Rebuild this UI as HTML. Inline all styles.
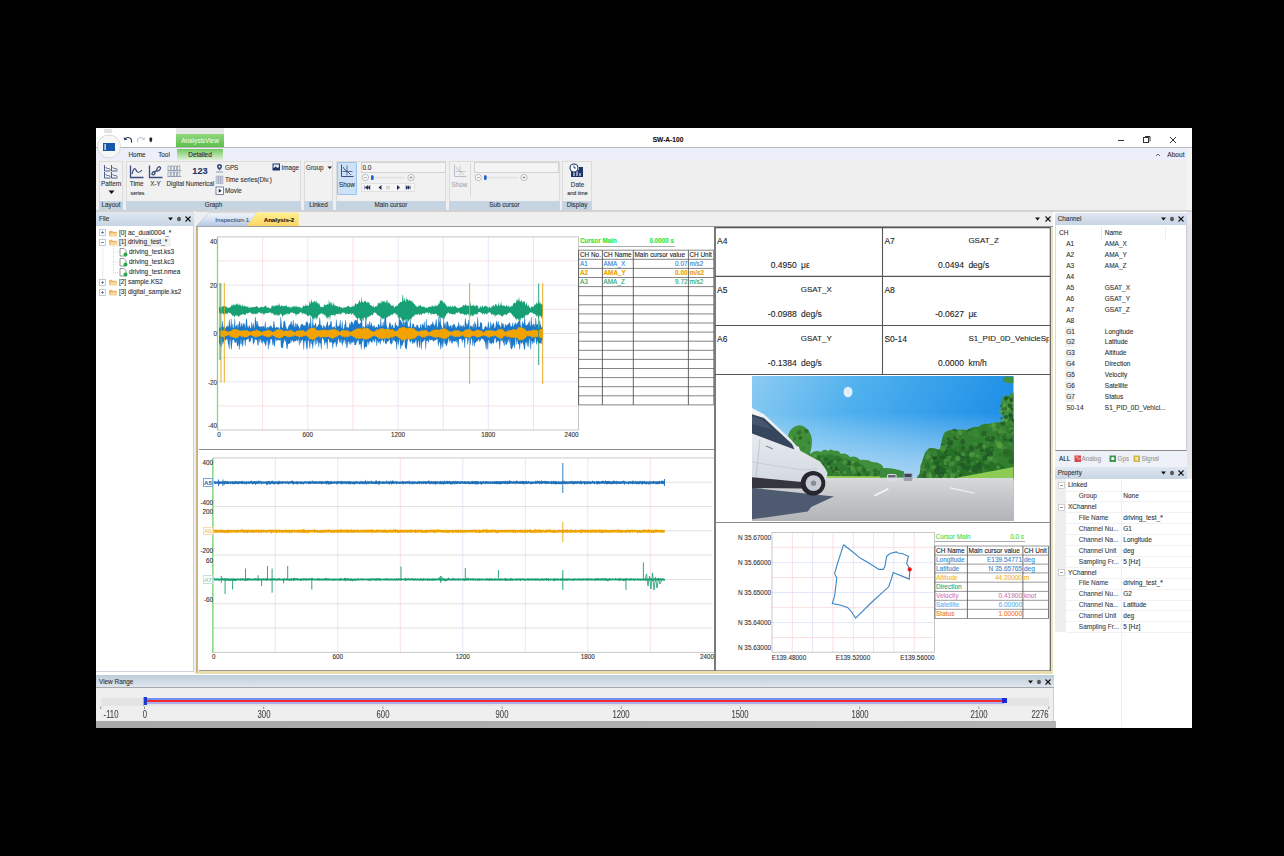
<!DOCTYPE html><html><head><meta charset="utf-8"><style>
html,body{margin:0;padding:0;background:#000;width:1284px;height:856px;overflow:hidden;position:relative}
body>div,body>svg{position:absolute}
.t{position:absolute;white-space:nowrap;line-height:10px;height:10px;font-family:"Liberation Sans",sans-serif;-webkit-text-stroke:0.1px currentColor}
svg{overflow:visible}
</style></head><body>
<div style="left:96px;top:128px;width:1096px;height:600px;background:#fff"></div>
<div class="t" style="left:568px;width:200px;text-align:center;top:135.00px;font-size:6.6px;color:#111;font-weight:bold;">SW-A-100</div>
<svg style="left:1100px;top:132px" width="90" height="16"><path d="M18 8.5h6" stroke="#333" stroke-width="1"/><rect x="43.5" y="5.5" width="5" height="5" fill="none" stroke="#333" stroke-width="1"/><path d="M45 4.5h5v5" fill="none" stroke="#333"/><path d="M70 5l6 6M76 5l-6 6" stroke="#333" stroke-width="1"/></svg>
<div style="left:176px;top:128px;width:48px;height:6px;background:#e6e6e6"></div>
<div style="left:176px;top:134px;width:48px;height:13px;background:linear-gradient(#8fd77e,#5cbf4a)"></div>
<div class="t" style="left:100px;width:200px;text-align:center;top:135.50px;font-size:6.4px;color:#e8f8e0;font-weight:normal;">AnalysisView</div>
<svg style="left:122px;top:135px" width="40" height="10"><path d="M9.5 7.5 q0.5-5-3.5-5 q-2 0-3 1.5" fill="none" stroke="#1a2a50" stroke-width="1.2"/><path d="M1.6 2.2 l0.9 3 3-0.8z" fill="#1a2a50"/><path d="M15.5 7.5 q-0.5-5 3.5-5 q2 0 3 1.5" fill="none" stroke="#c0c6d4" stroke-width="1.1"/><path d="M23.4 2.2 l-0.9 3-3-0.8z" fill="#c0c6d4"/><rect x="27.5" y="2.5" width="2.6" height="4" rx="0.8" fill="#222"/><rect x="28" y="6" width="1.6" height="1.2" fill="#555"/></svg>
<div style="left:96px;top:147px;width:1096px;height:1px;background:#b8b8b8"></div>
<div style="left:96px;top:148px;width:1091px;height:12px;background:#eceef9"></div>
<div style="left:177px;top:149px;width:46px;height:11px;background:linear-gradient(#72c85e,#dff0d6)"></div>
<div class="t" style="left:37px;width:200px;text-align:center;top:150.00px;font-size:6.4px;color:#333;font-weight:normal;">Home</div>
<div class="t" style="left:64px;width:200px;text-align:center;top:150.00px;font-size:6.4px;color:#333;font-weight:normal;">Tool</div>
<div class="t" style="left:100px;width:200px;text-align:center;top:150.00px;font-size:6.4px;color:#223;font-weight:normal;">Detailed</div>
<div class="t" style="right:99.5px;top:150.00px;font-size:6.6px;color:#333;font-weight:normal;">About</div>
<svg style="left:1155px;top:152px" width="6" height="6"><path d="M1 4l2-2 2 2" fill="none" stroke="#444" stroke-width="0.8"/></svg>
<div style="left:104px;top:128.5px;width:7.7px;height:4.7px;background:#e3e3e3"></div>
<svg style="left:96px;top:133px" width="28" height="28"><circle cx="13" cy="13.5" r="11.5" fill="#f7f7f7" stroke="#d8d8d8" stroke-width="1"/><rect x="7" y="10" width="12" height="8" fill="#1a56a8"/><rect x="8.5" y="11" width="1.2" height="6" fill="#fff"/></svg>
<div style="left:96px;top:160px;width:1091px;height:51px;background:#efefef;border-bottom:1px solid #c9c9c9;box-sizing:border-box"></div>
<div style="left:1187px;top:148px;width:5px;height:580px;background:#f4f4f4"></div>
<div style="left:96px;top:210px;width:1096px;height:2.2px;background:#d2d2d2"></div>
<div style="left:99px;top:161px;width:24px;height:48px;background:#f1f1f1;border:1px solid #dcdcdc;box-sizing:border-box"></div>
<div style="left:99px;top:200.8px;width:24px;height:8.8px;background:#c6d4e2"></div>
<div class="t" style="left:11.0px;width:200px;text-align:center;top:200.40px;font-size:6.3px;color:#333;font-weight:normal;">Layout</div>
<div style="left:126px;top:161px;width:175px;height:48px;background:#f1f1f1;border:1px solid #dcdcdc;box-sizing:border-box"></div>
<div style="left:126px;top:200.8px;width:175px;height:8.8px;background:#c6d4e2"></div>
<div class="t" style="left:113.5px;width:200px;text-align:center;top:200.40px;font-size:6.3px;color:#333;font-weight:normal;">Graph</div>
<div style="left:304px;top:161px;width:29px;height:48px;background:#f1f1f1;border:1px solid #dcdcdc;box-sizing:border-box"></div>
<div style="left:304px;top:200.8px;width:29px;height:8.8px;background:#c6d4e2"></div>
<div class="t" style="left:218.5px;width:200px;text-align:center;top:200.40px;font-size:6.3px;color:#333;font-weight:normal;">Linked</div>
<div style="left:336px;top:161px;width:110px;height:48px;background:#f1f1f1;border:1px solid #dcdcdc;box-sizing:border-box"></div>
<div style="left:336px;top:200.8px;width:110px;height:8.8px;background:#c6d4e2"></div>
<div class="t" style="left:291.0px;width:200px;text-align:center;top:200.40px;font-size:6.3px;color:#333;font-weight:normal;">Main cursor</div>
<div style="left:449px;top:161px;width:111px;height:48px;background:#f1f1f1;border:1px solid #dcdcdc;box-sizing:border-box"></div>
<div style="left:449px;top:200.8px;width:111px;height:8.8px;background:#c6d4e2"></div>
<div class="t" style="left:404.5px;width:200px;text-align:center;top:200.40px;font-size:6.3px;color:#333;font-weight:normal;">Sub cursor</div>
<div style="left:562px;top:161px;width:30px;height:48px;background:#f1f1f1;border:1px solid #dcdcdc;box-sizing:border-box"></div>
<div style="left:562px;top:200.8px;width:30px;height:8.8px;background:#c6d4e2"></div>
<div class="t" style="left:477.0px;width:200px;text-align:center;top:200.40px;font-size:6.3px;color:#333;font-weight:normal;">Display</div>
<svg style="left:103px;top:164px" width="16" height="15"><path d="M1.5 1v6h6M2.5 3l2 2 1-1 2 2" fill="none" stroke="#3b4e80" stroke-width="0.9"/><path d="M1.5 8v6h6M2.5 10l2 2 1-1 2 2" fill="none" stroke="#3b4e80" stroke-width="0.9"/><path d="M8.5 1v6h6M9.5 3l2 2 1-1 2 2" fill="none" stroke="#3b4e80" stroke-width="0.9"/><path d="M8.5 8v6h6M9.5 10l2 2 1-1 2 2" fill="none" stroke="#3b4e80" stroke-width="0.9"/></svg>
<div class="t" style="left:11.200000000000003px;width:200px;text-align:center;top:179.40px;font-size:6.3px;color:#333;font-weight:normal;">Pattern</div>
<svg style="left:108px;top:190px" width="8" height="5"><path d="M0.5 0.5h6l-3 3.5z" fill="#111"/></svg>
<svg style="left:129px;top:165px" width="16" height="14"><path d="M1.5 0.5v12h13" fill="none" stroke="#3b4e80" stroke-width="1.3"/><path d="M3 9 q2-8 4-4 q2 5 6 0" fill="none" stroke="#3b4e80" stroke-width="1.2"/></svg>
<div class="t" style="left:36.69999999999999px;width:200px;text-align:center;top:179.40px;font-size:6.3px;color:#333;font-weight:normal;">Time</div>
<div class="t" style="left:37.5px;width:200px;text-align:center;top:187.70px;font-size:5.2px;color:#333;font-weight:normal;">series</div>
<svg style="left:148px;top:165px" width="16" height="14"><path d="M1.5 0.5v12h13" fill="none" stroke="#3b4e80" stroke-width="1.3"/><path d="M4 9.5 q0-3 3-3 q2 0 2-2.5 q1-3 3-2 q1.5 1.5-1 3.5 q-1.5 1-2.5 0.5 q-2 0-1.5 2 q-0.5 2.5-3 1.5z" fill="none" stroke="#3b4e80" stroke-width="1.3"/></svg>
<div class="t" style="left:55.5px;width:200px;text-align:center;top:179.40px;font-size:6.3px;color:#333;font-weight:normal;">X-Y</div>
<svg style="left:167px;top:165px" width="15" height="13"><rect x="1.0" y="1" width="2.2" height="4.5" fill="none" stroke="#8a96b0" stroke-width="0.7"/><rect x="1.0" y="7" width="2.2" height="4.5" fill="none" stroke="#8a96b0" stroke-width="0.7"/><rect x="4.2" y="1" width="2.2" height="4.5" fill="none" stroke="#8a96b0" stroke-width="0.7"/><rect x="4.2" y="7" width="2.2" height="4.5" fill="none" stroke="#8a96b0" stroke-width="0.7"/><rect x="7.4" y="1" width="2.2" height="4.5" fill="none" stroke="#8a96b0" stroke-width="0.7"/><rect x="7.4" y="7" width="2.2" height="4.5" fill="none" stroke="#8a96b0" stroke-width="0.7"/><rect x="10.600000000000001" y="1" width="2.2" height="4.5" fill="none" stroke="#8a96b0" stroke-width="0.7"/><rect x="10.600000000000001" y="7" width="2.2" height="4.5" fill="none" stroke="#8a96b0" stroke-width="0.7"/><path d="M0.5 5.5h14M0.5 11.5h14" stroke="#8a96b0" stroke-width="0.7"/></svg>
<div class="t" style="left:75.30000000000001px;width:200px;text-align:center;top:179.40px;font-size:6.3px;color:#333;font-weight:normal;">Digital</div>
<div class="t" style="left:100px;width:200px;text-align:center;top:166.20px;font-size:9.2px;color:#1d3468;font-weight:bold;">123</div>
<div class="t" style="left:100px;width:200px;text-align:center;top:179.40px;font-size:6.3px;color:#333;font-weight:normal;">Numerical</div>
<svg style="left:215px;top:163px" width="10" height="10"><path d="M4.5 1 a2.6 2.6 0 0 1 2.6 2.6 q0 1.5-2.6 4 q-2.6-2.5-2.6-4 a2.6 2.6 0 0 1 2.6-2.6z" fill="#3b4e80"/><circle cx="4.5" cy="3.6" r="0.9" fill="#fff"/><path d="M1 9h7" stroke="#9aa6c0" stroke-width="1.2"/></svg>
<div class="t" style="left:225px;top:163.00px;font-size:6.3px;color:#333;font-weight:normal;">GPS</div>
<svg style="left:215px;top:175px" width="10" height="10"><rect x="1" y="1" width="7" height="7.5" fill="#c8cedc" stroke="#a8b0c4" stroke-width="0.6"/><path d="M3.3 1v7.5M5.6 1v7.5" stroke="#8e98b0" stroke-width="0.6"/></svg>
<div class="t" style="left:225px;top:174.50px;font-size:6.3px;color:#333;font-weight:normal;">Time series(Div.)</div>
<svg style="left:215px;top:186px" width="10" height="10"><rect x="1" y="1" width="7.5" height="7.5" fill="#fff" stroke="#6a7898" stroke-width="0.9"/><path d="M3.7 2.8v4l3-2z" fill="#1d2a50"/></svg>
<div class="t" style="left:225px;top:185.50px;font-size:6.3px;color:#333;font-weight:normal;">Movie</div>
<svg style="left:272px;top:163px" width="9" height="9"><rect x="0.5" y="0.5" width="7.5" height="7" fill="#1d3468"/><rect x="1.5" y="1.5" width="5.5" height="3.5" fill="#dfe6f4"/><path d="M1.5 5.5 l2-2 2 1.5 1.5-1v3h-5.5z" fill="#1d3468"/></svg>
<div class="t" style="left:281.5px;top:163.00px;font-size:6.3px;color:#333;font-weight:normal;">Image</div>
<div class="t" style="left:306px;top:163.00px;font-size:6.3px;color:#333;font-weight:normal;">Group</div>
<svg style="left:327px;top:166px" width="6" height="4"><path d="M0.5 0.5h4.5l-2.25 2.5z" fill="#222"/></svg>
<div style="left:337px;top:162px;width:20px;height:32.5px;background:#cde2f6;border:1px solid #9cc4ea;box-sizing:border-box;border-radius:1px"></div>
<svg style="left:340px;top:164px" width="14" height="14"><path d="M1.5 0.5v12h12" fill="none" stroke="#3b4e80" stroke-width="1"/><path d="M3 3 l2 3 2 1 4 4" fill="none" stroke="#3b4e80" stroke-width="0.9"/><path d="M7 1.5v10M2.5 7.5h10" stroke="#3b4e80" stroke-width="0.8"/></svg>
<div class="t" style="left:247px;width:200px;text-align:center;top:179.50px;font-size:6.3px;color:#333;font-weight:normal;">Show</div>
<div style="left:360.5px;top:162px;width:85px;height:10.5px;background:#f4f4f4;border:1px solid #d2d2d2;box-sizing:border-box"></div>
<div class="t" style="left:362.5px;top:162.50px;font-size:6.4px;color:#333;font-weight:normal;">0.0</div>
<svg style="left:360.5px;top:173px" width="60" height="9"><circle cx="4.3" cy="4.5" r="3.2" fill="#f8f8f8" stroke="#999" stroke-width="0.6"/><path d="M2.8 4.5h3" stroke="#777" stroke-width="0.6"/><rect x="10" y="3.8" width="33" height="1.6" fill="#e2e2e2"/><rect x="10" y="2.3" width="2.6" height="4.6" rx="1" fill="#1f5fd6"/><circle cx="50" cy="4.5" r="3.2" fill="#f8f8f8" stroke="#999" stroke-width="0.6"/><path d="M48.5 4.5h3M50 3v3" stroke="#777" stroke-width="0.6"/></svg>
<svg style="left:360.5px;top:183px" width="54" height="9"><rect x="0.5" y="0.5" width="53" height="8" fill="#f6f6f6" stroke="#ddd" stroke-width="0.8"/><path d="M3.5 2.5v4M7 2.5l-3 2 3 2zM9 2.5l-2 2 2 2z" fill="#1d2a50" stroke="#1d2a50" stroke-width="0.4"/><path d="M17.5 4.5l3-2.6v5.2z" fill="#1d2a50"/><path d="M26 2.8v3.6M28 2.8v3.6" stroke="#aaa" stroke-width="0.8"/><path d="M36 1.9l3 2.6-3 2.6z" fill="#1d2a50"/><path d="M45 2.5l2 2-2 2zM47 2.5l2 2-2 2zM49.5 2.5v4" fill="#1d2a50" stroke="#1d2a50" stroke-width="0.4"/></svg>
<svg style="left:453px;top:164px" width="14" height="14"><path d="M1.5 0.5v12h12" fill="none" stroke="#b8bfcc" stroke-width="1"/><path d="M3 3 l2 3 2 1 4 4" fill="none" stroke="#b8bfcc" stroke-width="0.9"/><path d="M7 1.5v10M2.5 7.5h10" stroke="#b8bfcc" stroke-width="0.8"/></svg>
<div class="t" style="left:359.5px;width:200px;text-align:center;top:179.50px;font-size:6.3px;color:#aaa;font-weight:normal;">Show</div>
<div style="left:470px;top:163px;width:1px;height:34px;background:#dadada"></div>
<div style="left:473.5px;top:162px;width:85px;height:10.5px;background:#f4f4f4;border:1px solid #d2d2d2;box-sizing:border-box"></div>
<svg style="left:473.5px;top:173px" width="60" height="9"><circle cx="4.3" cy="4.5" r="3.2" fill="#f8f8f8" stroke="#999" stroke-width="0.6"/><path d="M2.8 4.5h3" stroke="#777" stroke-width="0.6"/><rect x="10" y="3.8" width="33" height="1.6" fill="#e2e2e2"/><rect x="10" y="2.3" width="2.6" height="4.6" rx="1" fill="#1f5fd6"/><circle cx="50" cy="4.5" r="3.2" fill="#f8f8f8" stroke="#999" stroke-width="0.6"/><path d="M48.5 4.5h3M50 3v3" stroke="#777" stroke-width="0.6"/></svg>
<svg style="left:569px;top:163px" width="16" height="15"><rect x="2" y="7" width="12" height="7" fill="#1d3468"/><path d="M5 9v4M8 8v5M11 10v3" stroke="#dfe6f4" stroke-width="1.2"/><circle cx="5" cy="5" r="4" fill="#fff" stroke="#1d3468" stroke-width="1.1"/><path d="M5 2.5v2.5h2" fill="none" stroke="#1d3468" stroke-width="0.9"/><rect x="10" y="4" width="4" height="3" fill="#1d3468"/></svg>
<div class="t" style="left:477.5px;width:200px;text-align:center;top:179.50px;font-size:6.3px;color:#333;font-weight:normal;">Date</div>
<div class="t" style="left:477.5px;width:200px;text-align:center;top:187.50px;font-size:5.4px;color:#333;font-weight:normal;">and time</div>
<div style="left:96px;top:212.3px;width:97.5px;height:13.5px;background:linear-gradient(#dfe7f1,#c7d5e4);"></div>
<div class="t" style="left:99px;top:214.05px;font-size:6.4px;color:#333;font-weight:normal;">File</div>
<svg style="left:166.5px;top:215.05px" width="26" height="8"><path d="M1 2.5h5l-2.5 3z" fill="#111"/><ellipse cx="12" cy="4" rx="1.8" ry="2.3" fill="#333"/><path d="M12 2.2v3.6" stroke="#bbb" stroke-width="0.6"/><path d="M18.5 1.5l5 5M23.5 1.5l-5 5" stroke="#111" stroke-width="1.1"/></svg>
<div style="left:96px;top:225.8px;width:97.5px;height:446.7px;background:#fff;border-right:1px solid #cfd2da;border-bottom:1px solid #cfd2da;box-sizing:border-box"></div>
<div style="left:193.5px;top:211px;width:2.6px;height:462px;background:#eceef2"></div>
<svg style="left:96px;top:226px" width="60" height="80"><path d="M6.8 10v56M17.5 20v26.5h5M17.5 26h5M17.5 36h5" fill="none" stroke="#bdbdbd" stroke-width="0.6" stroke-dasharray="1 1"/></svg>
<div style="left:117px;top:237.5px;width:54px;height:9px;background:#f1f1f1"></div>
<svg style="left:99.3px;top:229.1px" width="7" height="7"><rect x="0.5" y="0.5" width="6" height="6" fill="#fff" stroke="#a9b4c6" stroke-width="0.7"/><path d="M2 3.5h3M3.5 2v3" stroke="#4a5a7a" stroke-width="0.7"/></svg>
<svg style="left:108.5px;top:228.6px" width="9" height="8"><path d="M0.5 2.2v4.8h7v-3.8h-3.6l-1-1z" fill="#eeb860" stroke="#d99a3a" stroke-width="0.5"/><path d="M0.5 7l1.2-2.8h6.6l-0.9 2.8z" fill="#f8d9a0"/></svg>
<div class="t" style="left:118.9px;top:227.60px;font-size:6.5px;color:#333;font-weight:normal;">[0] ac_dual0004_*</div>
<svg style="left:99.3px;top:238.5px" width="7" height="7"><rect x="0.5" y="0.5" width="6" height="6" fill="#fff" stroke="#a9b4c6" stroke-width="0.7"/><path d="M2 3.5h3" stroke="#4a5a7a" stroke-width="0.7"/></svg>
<svg style="left:108.5px;top:238px" width="9" height="8"><path d="M0.5 2.2v4.8h7v-3.8h-3.6l-1-1z" fill="#eeb860" stroke="#d99a3a" stroke-width="0.5"/><path d="M0.5 7l1.2-2.8h6.6l-0.9 2.8z" fill="#f8d9a0"/></svg>
<div class="t" style="left:118.9px;top:237.00px;font-size:6.5px;color:#333;font-weight:normal;">[1] driving_test_*</div>
<svg style="left:119px;top:248px" width="9" height="9"><path d="M1 0.5h4l2 2v5.5h-6z" fill="#fff" stroke="#555" stroke-width="0.6"/><circle cx="6.5" cy="6.5" r="2" fill="#29a84a"/></svg>
<div class="t" style="left:129px;top:247.00px;font-size:6.5px;color:#333;font-weight:normal;">driving_test.ks3</div>
<svg style="left:119px;top:258.1px" width="9" height="9"><path d="M1 0.5h4l2 2v5.5h-6z" fill="#fff" stroke="#555" stroke-width="0.6"/><circle cx="6.5" cy="6.5" r="2" fill="#29a84a"/></svg>
<div class="t" style="left:129px;top:257.10px;font-size:6.5px;color:#333;font-weight:normal;">driving_test.kc3</div>
<svg style="left:119px;top:268.2px" width="9" height="9"><path d="M1 0.5h4l2 2v5.5h-6z" fill="#fff" stroke="#555" stroke-width="0.6"/><circle cx="6.5" cy="6.5" r="2" fill="#29a84a"/></svg>
<div class="t" style="left:129px;top:267.20px;font-size:6.5px;color:#333;font-weight:normal;">driving_test.nmea</div>
<svg style="left:99.3px;top:278.8px" width="7" height="7"><rect x="0.5" y="0.5" width="6" height="6" fill="#fff" stroke="#a9b4c6" stroke-width="0.7"/><path d="M2 3.5h3M3.5 2v3" stroke="#4a5a7a" stroke-width="0.7"/></svg>
<svg style="left:108.5px;top:278.3px" width="9" height="8"><path d="M0.5 2.2v4.8h7v-3.8h-3.6l-1-1z" fill="#eeb860" stroke="#d99a3a" stroke-width="0.5"/><path d="M0.5 7l1.2-2.8h6.6l-0.9 2.8z" fill="#f8d9a0"/></svg>
<div class="t" style="left:118.9px;top:277.30px;font-size:6.5px;color:#333;font-weight:normal;">[2] sample.KS2</div>
<svg style="left:99.3px;top:288.6px" width="7" height="7"><rect x="0.5" y="0.5" width="6" height="6" fill="#fff" stroke="#a9b4c6" stroke-width="0.7"/><path d="M2 3.5h3M3.5 2v3" stroke="#4a5a7a" stroke-width="0.7"/></svg>
<svg style="left:108.5px;top:288.1px" width="9" height="8"><path d="M0.5 2.2v4.8h7v-3.8h-3.6l-1-1z" fill="#eeb860" stroke="#d99a3a" stroke-width="0.5"/><path d="M0.5 7l1.2-2.8h6.6l-0.9 2.8z" fill="#f8d9a0"/></svg>
<div class="t" style="left:118.9px;top:287.10px;font-size:6.5px;color:#333;font-weight:normal;">[3] digital_sample.ks2</div>
<div style="left:196px;top:212px;width:857px;height:15px;background:#efefef"></div>
<div style="left:196px;top:226px;width:857px;height:1.5px;background:#9a9a9a"></div>
<svg style="left:196px;top:212px" width="104" height="15"><defs><linearGradient id="gi" x1="0" y1="0" x2="0" y2="1"><stop offset="0" stop-color="#f4f8fd"/><stop offset="1" stop-color="#b6c8e6"/></linearGradient><linearGradient id="ga" x1="0" y1="0" x2="0" y2="1"><stop offset="0" stop-color="#fff08a"/><stop offset="1" stop-color="#fbd56a"/></linearGradient></defs><path d="M0.5 14 L12.5 0.8 H61 L50.7 14z" fill="url(#gi)" stroke="#b8c2d0" stroke-width="0.6"/><path d="M50.7 14 L60.8 0.8 H102.8 V14z" fill="url(#ga)"/></svg>
<div class="t" style="left:132.2px;width:200px;text-align:center;top:214.50px;font-size:6.24px;color:#44506a;font-weight:normal;">Inspection-1</div>
<div class="t" style="left:179px;width:200px;text-align:center;top:214.50px;font-size:6.1px;color:#111;font-weight:bold;">Analysis-2</div>
<svg style="left:1034px;top:215px" width="20" height="8"><path d="M1 2.5h5l-2.5 3z" fill="#111"/><path d="M11.5 1.5l5 5M16.5 1.5l-5 5" stroke="#111" stroke-width="1.1"/></svg>
<div style="left:196px;top:227px;width:857px;height:446.5px;background:#fff;border-left:2.5px solid #c9b47e;border-right:2.6px solid #ebe4b4;border-bottom:3px solid #e9dfac;box-sizing:border-box"></div>
<div style="left:198.5px;top:670px;width:852px;height:0.8px;background:#9a9a9a"></div>
<svg style="left:0px;top:0px" width="1284" height="856"><path d="M262.6 236.9V430" stroke="#f8d4d4" stroke-width="0.7"/><path d="M307.8 236.9V430" stroke="#d9dcf7" stroke-width="0.7"/><path d="M352.9 236.9V430" stroke="#f8d4d4" stroke-width="0.7"/><path d="M398.1 236.9V430" stroke="#d9dcf7" stroke-width="0.7"/><path d="M443.2 236.9V430" stroke="#f8d4d4" stroke-width="0.7"/><path d="M488.3 236.9V430" stroke="#d9dcf7" stroke-width="0.7"/><path d="M533.5 236.9V430" stroke="#f8d4d4" stroke-width="0.7"/><path d="M217.5 261.0H578.6" stroke="#f8d4d4" stroke-width="0.7"/><path d="M217.5 285.2H578.6" stroke="#d9dcf7" stroke-width="0.7"/><path d="M217.5 309.3H578.6" stroke="#f8d4d4" stroke-width="0.7"/><path d="M217.5 333.4H578.6" stroke="#d4d4d4" stroke-width="0.7"/><path d="M217.5 357.6H578.6" stroke="#f8d4d4" stroke-width="0.7"/><path d="M217.5 381.7H578.6" stroke="#d9dcf7" stroke-width="0.7"/><path d="M217.5 405.9H578.6" stroke="#f8d4d4" stroke-width="0.7"/><rect x="217.5" y="236.9" width="361.1" height="193.1" fill="none" stroke="#b8b8b8" stroke-width="0.8"/><path d="M219.0,307.7 219.5,306.7 220.0,307.8 220.5,307.4 221.0,306.3 221.5,307.5 222.0,306.8 222.5,306.4 223.0,306.4 223.5,305.3 224.0,307.1 224.5,305.9 225.0,306.4 225.5,305.7 226.0,307.6 226.5,305.8 227.0,308.2 227.5,307.0 228.0,308.0 228.5,308.1 229.0,307.5 229.5,307.3 230.0,307.7 230.5,306.6 231.0,306.6 231.5,305.7 232.0,304.1 232.5,305.9 233.0,304.5 233.5,305.6 234.0,303.4 234.5,305.5 235.0,305.4 235.5,304.8 236.0,303.4 236.5,304.7 237.0,303.5 237.5,303.3 238.0,305.9 238.5,304.6 239.0,304.5 239.5,305.3 240.0,303.0 240.5,306.1 241.0,304.7 241.5,306.6 242.0,306.6 242.5,303.8 243.0,306.5 243.5,306.6 244.0,305.7 244.5,305.6 245.0,306.3 245.5,306.0 246.0,307.2 246.5,306.7 247.0,306.2 247.5,307.6 248.0,305.4 248.5,308.0 249.0,307.8 249.5,307.5 250.0,307.6 250.5,308.0 251.0,306.2 251.5,307.3 252.0,307.4 252.5,307.5 253.0,306.7 253.5,306.9 254.0,307.2 254.5,307.1 255.0,307.3 255.5,306.4 256.0,306.5 256.5,306.1 257.0,306.4 257.5,306.5 258.0,307.1 258.5,308.2 259.0,307.7 259.5,307.4 260.0,308.1 260.5,307.0 261.0,306.5 261.5,307.2 262.0,306.2 262.5,307.2 263.0,307.5 263.5,306.9 264.0,307.3 264.5,305.7 265.0,306.7 265.5,305.8 266.0,305.1 266.5,307.4 267.0,307.3 267.5,307.6 268.0,307.5 268.5,307.7 269.0,307.6 269.5,308.1 270.0,308.8 270.5,308.2 271.0,308.3 271.5,305.6 272.0,307.2 272.5,305.5 273.0,305.1 273.5,306.8 274.0,305.7 274.5,305.6 275.0,306.7 275.5,305.6 276.0,305.5 276.5,304.7 277.0,306.2 277.5,304.4 278.0,305.7 278.5,305.6 279.0,303.1 279.5,304.4 280.0,306.4 280.5,306.6 281.0,305.2 281.5,305.0 282.0,306.7 282.5,305.9 283.0,305.7 283.5,306.5 284.0,305.5 284.5,306.2 285.0,305.5 285.5,306.2 286.0,306.3 286.5,304.5 287.0,306.4 287.5,307.2 288.0,306.6 288.5,306.5 289.0,307.5 289.5,307.1 290.0,307.5 290.5,306.6 291.0,308.9 291.5,307.0 292.0,306.0 292.5,306.9 293.0,306.7 293.5,306.1 294.0,307.7 294.5,305.2 295.0,307.0 295.5,306.8 296.0,305.3 296.5,306.4 297.0,307.1 297.5,307.1 298.0,307.1 298.5,306.5 299.0,307.6 299.5,306.7 300.0,307.5 300.5,307.4 301.0,307.4 301.5,308.8 302.0,307.7 302.5,307.5 303.0,305.9 303.5,305.3 304.0,306.4 304.5,306.1 305.0,306.0 305.5,305.2 306.0,303.5 306.5,305.9 307.0,306.0 307.5,305.3 308.0,305.9 308.5,305.5 309.0,305.6 309.5,301.8 310.0,300.7 310.5,303.9 311.0,302.8 311.5,298.4 312.0,301.8 312.5,302.3 313.0,303.3 313.5,301.8 314.0,300.2 314.5,301.9 315.0,300.8 315.5,302.0 316.0,302.9 316.5,299.6 317.0,304.2 317.5,302.0 318.0,303.2 318.5,303.0 319.0,305.2 319.5,303.1 320.0,306.1 320.5,307.4 321.0,306.0 321.5,306.7 322.0,307.6 322.5,307.1 323.0,306.9 323.5,307.3 324.0,304.6 324.5,304.2 325.0,305.2 325.5,305.6 326.0,303.9 326.5,305.3 327.0,305.1 327.5,303.3 328.0,304.8 328.5,304.5 329.0,298.8 329.5,304.3 330.0,302.1 330.5,302.2 331.0,304.9 331.5,303.3 332.0,301.8 332.5,306.4 333.0,304.9 333.5,302.1 334.0,304.5 334.5,304.8 335.0,306.2 335.5,305.0 336.0,306.3 336.5,306.1 337.0,306.0 337.5,306.4 338.0,306.8 338.5,306.4 339.0,307.3 339.5,305.8 340.0,307.3 340.5,307.1 341.0,307.9 341.5,306.7 342.0,307.7 342.5,308.1 343.0,308.7 343.5,307.4 344.0,306.2 344.5,307.9 345.0,307.5 345.5,307.3 346.0,307.2 346.5,307.1 347.0,307.0 347.5,306.1 348.0,306.1 348.5,305.6 349.0,306.3 349.5,307.0 350.0,307.4 350.5,306.9 351.0,307.2 351.5,307.0 352.0,306.2 352.5,306.8 353.0,305.5 353.5,305.9 354.0,307.3 354.5,305.6 355.0,304.0 355.5,302.7 356.0,304.0 356.5,304.7 357.0,303.8 357.5,303.9 358.0,303.4 358.5,302.8 359.0,300.4 359.5,299.7 360.0,302.6 360.5,302.4 361.0,302.2 361.5,296.0 362.0,301.1 362.5,301.9 363.0,302.3 363.5,303.2 364.0,300.9 364.5,301.1 365.0,301.6 365.5,301.1 366.0,301.4 366.5,303.3 367.0,302.2 367.5,302.8 368.0,301.2 368.5,302.5 369.0,302.9 369.5,303.1 370.0,305.5 370.5,304.8 371.0,305.2 371.5,305.9 372.0,305.6 372.5,307.0 373.0,306.3 373.5,305.0 374.0,308.1 374.5,307.0 375.0,306.8 375.5,306.1 376.0,306.8 376.5,306.4 377.0,305.2 377.5,306.0 378.0,302.2 378.5,303.8 379.0,302.1 379.5,303.3 380.0,303.8 380.5,303.4 381.0,300.0 381.5,302.4 382.0,303.1 382.5,299.9 383.0,302.8 383.5,300.9 384.0,301.1 384.5,301.3 385.0,303.3 385.5,302.4 386.0,301.0 386.5,300.0 387.0,303.2 387.5,299.6 388.0,304.2 388.5,302.1 389.0,302.8 389.5,302.9 390.0,304.4 390.5,303.7 391.0,305.9 391.5,306.0 392.0,304.5 392.5,306.4 393.0,305.4 393.5,305.0 394.0,307.3 394.5,307.8 395.0,307.0 395.5,306.1 396.0,306.2 396.5,306.0 397.0,305.5 397.5,305.7 398.0,304.5 398.5,304.1 399.0,303.3 399.5,303.3 400.0,302.1 400.5,301.8 401.0,301.9 401.5,302.2 402.0,302.3 402.5,295.2 403.0,294.3 403.5,301.0 404.0,300.9 404.5,297.7 405.0,299.8 405.5,301.6 406.0,301.9 406.5,297.2 407.0,298.8 407.5,299.5 408.0,299.9 408.5,300.9 409.0,300.8 409.5,299.2 410.0,300.6 410.5,301.3 411.0,300.4 411.5,302.1 412.0,299.4 412.5,303.0 413.0,301.7 413.5,303.1 414.0,303.8 414.5,304.3 415.0,304.4 415.5,306.2 416.0,304.7 416.5,306.5 417.0,307.5 417.5,306.4 418.0,306.9 418.5,305.7 419.0,305.0 419.5,306.7 420.0,305.1 420.5,304.7 421.0,305.9 421.5,306.5 422.0,306.6 422.5,306.9 423.0,307.1 423.5,306.6 424.0,306.5 424.5,306.6 425.0,307.8 425.5,307.7 426.0,308.3 426.5,307.4 427.0,307.1 427.5,308.2 428.0,307.8 428.5,306.6 429.0,307.0 429.5,306.9 430.0,305.9 430.5,307.0 431.0,306.8 431.5,307.1 432.0,305.1 432.5,305.6 433.0,306.8 433.5,306.6 434.0,305.6 434.5,307.2 435.0,305.2 435.5,304.7 436.0,306.6 436.5,305.9 437.0,305.8 437.5,305.3 438.0,305.5 438.5,303.0 439.0,303.8 439.5,303.9 440.0,299.2 440.5,301.6 441.0,300.1 441.5,300.2 442.0,301.5 442.5,301.1 443.0,301.2 443.5,303.5 444.0,302.3 444.5,302.2 445.0,304.5 445.5,303.2 446.0,305.4 446.5,305.8 447.0,306.1 447.5,307.7 448.0,305.2 448.5,306.4 449.0,307.0 449.5,306.3 450.0,307.1 450.5,305.2 451.0,307.2 451.5,307.3 452.0,306.9 452.5,305.1 453.0,306.5 453.5,306.7 454.0,307.1 454.5,305.5 455.0,306.5 455.5,305.8 456.0,306.9 456.5,307.5 457.0,307.5 457.5,307.9 458.0,308.4 458.5,307.8 459.0,308.1 459.5,307.4 460.0,307.8 460.5,307.3 461.0,307.3 461.5,306.7 462.0,306.8 462.5,306.8 463.0,305.3 463.5,305.0 464.0,304.7 464.5,306.0 465.0,305.4 465.5,303.7 466.0,305.6 466.5,305.5 467.0,305.4 467.5,305.6 468.0,305.9 468.5,305.4 469.0,305.5 469.5,306.6 470.0,306.0 470.5,301.0 471.0,306.0 471.5,305.7 472.0,305.7 472.5,305.6 473.0,305.4 473.5,304.6 474.0,305.8 474.5,306.2 475.0,305.4 475.5,306.7 476.0,305.1 476.5,305.5 477.0,305.5 477.5,305.8 478.0,305.7 478.5,308.3 479.0,308.9 479.5,307.7 480.0,307.2 480.5,305.6 481.0,307.8 481.5,307.5 482.0,305.1 482.5,306.2 483.0,306.5 483.5,307.4 484.0,307.1 484.5,305.9 485.0,305.7 485.5,306.1 486.0,305.8 486.5,306.2 487.0,307.1 487.5,306.5 488.0,307.8 488.5,308.4 489.0,306.1 489.5,306.6 490.0,307.7 490.5,307.9 491.0,307.6 491.5,307.2 492.0,305.2 492.5,306.8 493.0,305.6 493.5,304.5 494.0,306.7 494.5,306.3 495.0,304.8 495.5,304.4 496.0,303.5 496.5,305.3 497.0,305.8 497.5,306.2 498.0,305.4 498.5,302.1 499.0,306.1 499.5,306.0 500.0,304.5 500.5,305.3 501.0,300.7 501.5,304.1 502.0,305.4 502.5,306.1 503.0,305.7 503.5,305.1 504.0,306.1 504.5,305.8 505.0,306.1 505.5,306.5 506.0,306.6 506.5,304.7 507.0,305.0 507.5,307.0 508.0,306.7 508.5,306.2 509.0,304.6 509.5,307.4 510.0,306.9 510.5,306.8 511.0,306.8 511.5,305.3 512.0,306.6 512.5,306.0 513.0,304.2 513.5,303.2 514.0,302.9 514.5,302.3 515.0,303.5 515.5,303.1 516.0,302.4 516.5,300.6 517.0,299.0 517.5,301.5 518.0,298.7 518.5,301.2 519.0,296.2 519.5,300.2 520.0,302.2 520.5,301.5 521.0,301.0 521.5,299.7 522.0,301.5 522.5,303.0 523.0,301.4 523.5,301.7 524.0,300.7 524.5,301.2 525.0,303.2 525.5,304.9 526.0,305.1 526.5,301.7 527.0,304.3 527.5,306.1 528.0,306.7 528.5,304.2 529.0,306.6 529.5,307.0 530.0,308.1 530.5,308.6 531.0,307.4 531.5,305.7 532.0,306.9 532.5,306.2 533.0,307.4 533.5,306.8 534.0,306.1 534.5,304.9 535.0,303.6 535.5,305.3 536.0,304.0 536.5,303.0 537.0,301.7 537.5,304.0 538.0,304.0 538.5,298.7 539.0,304.9 539.5,301.0 540.0,304.2 540.5,301.7 541.0,304.6 541.5,304.4 542.0,303.6 542.5,304.8 543.0,305.6 543.0,315.9 542.5,314.4 542.0,316.9 541.5,318.8 541.0,316.6 540.5,316.4 540.0,315.3 539.5,315.7 539.0,316.6 538.5,318.3 538.0,318.7 537.5,315.0 537.0,315.1 536.5,316.8 536.0,316.3 535.5,314.5 535.0,313.9 534.5,314.0 534.0,313.6 533.5,313.7 533.0,313.3 532.5,313.3 532.0,312.5 531.5,312.9 531.0,311.9 530.5,312.1 530.0,313.3 529.5,312.7 529.0,313.6 528.5,315.1 528.0,314.3 527.5,315.0 527.0,316.1 526.5,314.6 526.0,315.1 525.5,315.7 525.0,315.5 524.5,317.7 524.0,317.2 523.5,317.4 523.0,318.7 522.5,318.5 522.0,317.7 521.5,318.1 521.0,317.8 520.5,321.3 520.0,318.7 519.5,317.8 519.0,320.9 518.5,319.6 518.0,319.5 517.5,318.5 517.0,318.6 516.5,320.9 516.0,317.9 515.5,319.6 515.0,317.7 514.5,316.7 514.0,317.4 513.5,316.8 513.0,315.0 512.5,315.7 512.0,314.2 511.5,314.1 511.0,313.1 510.5,313.3 510.0,312.3 509.5,312.5 509.0,313.2 508.5,312.7 508.0,313.6 507.5,313.6 507.0,315.1 506.5,315.6 506.0,313.7 505.5,314.3 505.0,315.3 504.5,314.1 504.0,315.1 503.5,315.8 503.0,314.6 502.5,317.2 502.0,316.3 501.5,316.3 501.0,315.9 500.5,315.1 500.0,314.2 499.5,315.3 499.0,315.5 498.5,314.1 498.0,314.1 497.5,315.1 497.0,314.8 496.5,315.6 496.0,315.8 495.5,314.7 495.0,318.0 494.5,314.7 494.0,314.1 493.5,315.3 493.0,315.4 492.5,313.4 492.0,314.4 491.5,314.5 491.0,314.4 490.5,312.2 490.0,312.9 489.5,311.8 489.0,313.1 488.5,312.3 488.0,313.0 487.5,313.6 487.0,314.8 486.5,314.0 486.0,313.4 485.5,313.4 485.0,313.2 484.5,315.3 484.0,313.5 483.5,313.3 483.0,313.7 482.5,314.1 482.0,314.3 481.5,312.8 481.0,312.7 480.5,312.5 480.0,312.3 479.5,311.9 479.0,311.9 478.5,312.0 478.0,313.5 477.5,314.2 477.0,314.7 476.5,313.6 476.0,315.3 475.5,313.9 475.0,313.8 474.5,314.5 474.0,314.6 473.5,315.3 473.0,316.6 472.5,315.5 472.0,316.5 471.5,314.4 471.0,315.4 470.5,317.2 470.0,313.9 469.5,314.4 469.0,313.6 468.5,315.7 468.0,313.6 467.5,313.9 467.0,314.8 466.5,315.0 466.0,314.8 465.5,313.9 465.0,315.7 464.5,314.9 464.0,314.1 463.5,314.5 463.0,313.9 462.5,313.3 462.0,313.7 461.5,313.9 461.0,313.4 460.5,314.8 460.0,312.5 459.5,312.9 459.0,313.1 458.5,311.6 458.0,311.9 457.5,313.9 457.0,312.4 456.5,312.5 456.0,312.9 455.5,313.4 455.0,315.3 454.5,313.8 454.0,314.5 453.5,314.0 453.0,314.4 452.5,314.3 452.0,314.4 451.5,313.5 451.0,314.1 450.5,313.2 450.0,314.2 449.5,313.9 449.0,312.8 448.5,312.6 448.0,313.3 447.5,312.7 447.0,314.3 446.5,314.1 446.0,315.6 445.5,316.1 445.0,316.7 444.5,318.1 444.0,320.2 443.5,320.2 443.0,317.7 442.5,317.4 442.0,319.2 441.5,317.5 441.0,317.7 440.5,317.5 440.0,317.4 439.5,319.8 439.0,315.4 438.5,315.3 438.0,317.3 437.5,315.8 437.0,314.6 436.5,313.7 436.0,314.4 435.5,313.6 435.0,313.4 434.5,314.3 434.0,314.3 433.5,314.4 433.0,314.1 432.5,313.4 432.0,314.2 431.5,313.6 431.0,316.0 430.5,313.2 430.0,312.9 429.5,312.7 429.0,312.5 428.5,315.2 428.0,312.3 427.5,313.1 427.0,312.0 426.5,313.0 426.0,312.5 425.5,312.6 425.0,314.0 424.5,313.5 424.0,313.8 423.5,313.1 423.0,313.5 422.5,313.5 422.0,313.7 421.5,315.4 421.0,314.7 420.5,313.7 420.0,314.3 419.5,315.7 419.0,314.5 418.5,313.3 418.0,315.1 417.5,314.4 417.0,313.8 416.5,315.0 416.0,314.4 415.5,314.7 415.0,314.5 414.5,315.0 414.0,317.2 413.5,315.5 413.0,317.0 412.5,316.9 412.0,317.1 411.5,320.1 411.0,318.0 410.5,320.0 410.0,318.7 409.5,320.6 409.0,319.3 408.5,322.6 408.0,321.6 407.5,319.0 407.0,321.6 406.5,320.0 406.0,318.4 405.5,321.0 405.0,321.5 404.5,319.9 404.0,320.2 403.5,319.5 403.0,320.9 402.5,322.2 402.0,318.6 401.5,320.1 401.0,317.6 400.5,317.1 400.0,319.6 399.5,316.9 399.0,317.0 398.5,318.3 398.0,318.5 397.5,314.8 397.0,314.4 396.5,314.1 396.0,316.1 395.5,313.0 395.0,313.3 394.5,312.7 394.0,313.7 393.5,313.8 393.0,313.6 392.5,315.8 392.0,314.0 391.5,314.7 391.0,315.1 390.5,315.6 390.0,314.9 389.5,317.1 389.0,315.5 388.5,316.6 388.0,316.6 387.5,317.8 387.0,317.0 386.5,317.8 386.0,319.4 385.5,323.5 385.0,319.1 384.5,317.3 384.0,317.8 383.5,318.9 383.0,319.0 382.5,318.1 382.0,320.4 381.5,317.8 381.0,318.5 380.5,316.9 380.0,315.9 379.5,316.2 379.0,316.2 378.5,315.4 378.0,314.8 377.5,315.1 377.0,315.2 376.5,313.4 376.0,313.3 375.5,312.6 375.0,313.0 374.5,312.2 374.0,312.4 373.5,313.0 373.0,315.1 372.5,315.0 372.0,315.5 371.5,314.1 371.0,315.7 370.5,315.9 370.0,315.0 369.5,316.4 369.0,316.9 368.5,316.9 368.0,316.2 367.5,318.0 367.0,317.1 366.5,321.5 366.0,319.2 365.5,319.0 365.0,317.2 364.5,317.5 364.0,317.5 363.5,320.0 363.0,321.3 362.5,319.0 362.0,318.3 361.5,318.1 361.0,319.8 360.5,321.3 360.0,320.6 359.5,318.6 359.0,317.4 358.5,318.1 358.0,318.5 357.5,321.5 357.0,317.8 356.5,317.8 356.0,318.2 355.5,316.8 355.0,315.2 354.5,316.3 354.0,314.5 353.5,314.3 353.0,314.3 352.5,312.7 352.0,314.2 351.5,315.3 351.0,313.2 350.5,313.2 350.0,313.9 349.5,314.1 349.0,314.1 348.5,314.1 348.0,314.4 347.5,313.2 347.0,313.6 346.5,313.8 346.0,314.8 345.5,314.6 345.0,313.1 344.5,312.6 344.0,313.5 343.5,312.1 343.0,313.7 342.5,312.1 342.0,312.8 341.5,313.6 341.0,314.3 340.5,314.0 340.0,315.1 339.5,313.7 339.0,313.3 338.5,314.1 338.0,313.7 337.5,314.8 337.0,313.9 336.5,314.0 336.0,313.8 335.5,315.3 335.0,315.8 334.5,316.1 334.0,314.5 333.5,315.6 333.0,314.5 332.5,315.6 332.0,314.9 331.5,315.1 331.0,315.0 330.5,315.6 330.0,321.4 329.5,316.3 329.0,316.9 328.5,316.8 328.0,319.8 327.5,318.1 327.0,316.8 326.5,318.6 326.0,316.1 325.5,314.8 325.0,317.4 324.5,314.2 324.0,314.8 323.5,313.7 323.0,314.7 322.5,314.4 322.0,312.3 321.5,313.7 321.0,313.2 320.5,313.9 320.0,314.2 319.5,314.4 319.0,314.6 318.5,315.3 318.0,315.9 317.5,319.2 317.0,316.9 316.5,320.4 316.0,317.5 315.5,317.3 315.0,320.3 314.5,318.2 314.0,317.5 313.5,321.1 313.0,317.5 312.5,320.9 312.0,317.4 311.5,316.1 311.0,317.3 310.5,315.7 310.0,315.1 309.5,315.2 309.0,315.3 308.5,316.2 308.0,315.7 307.5,316.5 307.0,314.4 306.5,314.5 306.0,315.1 305.5,313.9 305.0,313.5 304.5,314.2 304.0,313.2 303.5,313.6 303.0,312.7 302.5,315.1 302.0,313.1 301.5,312.9 301.0,312.1 300.5,312.2 300.0,312.2 299.5,313.3 299.0,314.2 298.5,313.6 298.0,314.3 297.5,314.2 297.0,314.2 296.5,314.3 296.0,316.7 295.5,313.9 295.0,313.4 294.5,313.3 294.0,313.0 293.5,313.8 293.0,312.4 292.5,312.6 292.0,313.1 291.5,312.5 291.0,312.4 290.5,312.4 290.0,313.8 289.5,314.2 289.0,313.8 288.5,314.4 288.0,313.3 287.5,313.6 287.0,315.4 286.5,313.4 286.0,313.7 285.5,314.3 285.0,314.7 284.5,315.3 284.0,314.5 283.5,315.9 283.0,315.3 282.5,318.1 282.0,315.6 281.5,314.4 281.0,314.0 280.5,313.5 280.0,314.4 279.5,315.9 279.0,314.3 278.5,315.6 278.0,315.4 277.5,315.9 277.0,314.2 276.5,314.7 276.0,315.3 275.5,314.2 275.0,316.5 274.5,314.7 274.0,314.2 273.5,314.4 273.0,313.4 272.5,313.6 272.0,312.8 271.5,313.1 271.0,314.4 270.5,312.3 270.0,312.2 269.5,312.8 269.0,312.3 268.5,313.0 268.0,313.7 267.5,312.7 267.0,312.9 266.5,313.2 266.0,313.1 265.5,313.2 265.0,313.4 264.5,313.4 264.0,315.5 263.5,314.3 263.0,313.2 262.5,313.3 262.0,313.0 261.5,313.8 261.0,312.8 260.5,314.1 260.0,312.3 259.5,312.8 259.0,311.7 258.5,312.9 258.0,312.4 257.5,314.0 257.0,313.7 256.5,313.8 256.0,313.8 255.5,315.0 255.0,313.3 254.5,313.4 254.0,313.8 253.5,314.6 253.0,313.2 252.5,314.3 252.0,314.3 251.5,313.3 251.0,313.4 250.5,312.4 250.0,312.6 249.5,312.1 249.0,312.9 248.5,312.8 248.0,313.6 247.5,313.7 247.0,313.0 246.5,313.2 246.0,313.4 245.5,315.2 245.0,314.2 244.5,314.9 244.0,315.0 243.5,314.3 243.0,313.7 242.5,314.4 242.0,314.0 241.5,315.0 241.0,314.9 240.5,314.6 240.0,316.7 239.5,315.1 239.0,317.2 238.5,316.7 238.0,316.2 237.5,315.0 237.0,316.3 236.5,315.3 236.0,315.2 235.5,315.6 235.0,315.9 234.5,317.3 234.0,316.6 233.5,315.4 233.0,315.2 232.5,316.3 232.0,314.7 231.5,314.6 231.0,313.7 230.5,313.1 230.0,312.8 229.5,313.1 229.0,313.1 228.5,311.8 228.0,313.7 227.5,312.9 227.0,314.7 226.5,313.2 226.0,313.5 225.5,313.6 225.0,314.9 224.5,313.2 224.0,314.6 223.5,314.2 223.0,313.9 222.5,313.1 222.0,313.0 221.5,313.5 221.0,314.8 220.5,312.6 220.0,313.7 219.5,312.6 219.0,313.7z" fill="#16a073"/><path d="M219.0,326.4 219.5,327.8 220.0,327.8 220.5,327.6 221.0,327.6 221.5,327.0 222.0,320.9 222.5,320.9 223.0,326.3 223.5,327.7 224.0,325.6 224.5,325.6 225.0,327.3 225.5,328.9 226.0,326.7 226.5,326.7 227.0,325.5 227.5,325.5 228.0,326.9 228.5,326.7 229.0,319.5 229.5,319.5 230.0,324.7 230.5,328.1 231.0,318.8 231.5,318.8 232.0,328.7 232.5,323.7 233.0,323.7 233.5,328.0 234.0,327.7 234.5,318.7 235.0,318.7 235.5,327.8 236.0,325.5 236.5,325.5 237.0,324.8 237.5,324.8 238.0,328.8 238.5,323.5 239.0,323.5 239.5,320.9 240.0,320.9 240.5,326.7 241.0,326.5 241.5,322.9 242.0,322.9 242.5,327.0 243.0,323.0 243.5,323.0 244.0,326.3 244.5,323.5 245.0,323.5 245.5,329.1 246.0,318.2 246.5,318.2 247.0,320.6 247.5,326.8 248.0,326.8 248.5,328.0 249.0,325.2 249.5,325.2 250.0,326.5 250.5,328.5 251.0,327.9 251.5,322.0 252.0,322.0 252.5,328.3 253.0,323.3 253.5,323.3 254.0,326.5 254.5,328.8 255.0,317.0 255.5,317.0 256.0,321.0 256.5,321.0 257.0,325.8 257.5,321.3 258.0,321.3 258.5,326.3 259.0,326.2 259.5,326.2 260.0,327.0 260.5,327.0 261.0,326.0 261.5,326.0 262.0,327.4 262.5,326.4 263.0,325.9 263.5,325.9 264.0,327.1 264.5,327.4 265.0,321.5 265.5,321.5 266.0,328.2 266.5,328.4 267.0,326.5 267.5,326.5 268.0,328.7 268.5,327.0 269.0,326.9 269.5,326.9 270.0,325.3 270.5,325.3 271.0,325.9 271.5,325.9 272.0,327.7 272.5,327.7 273.0,327.4 273.5,320.9 274.0,320.9 274.5,323.8 275.0,328.2 275.5,328.1 276.0,327.6 276.5,326.7 277.0,326.7 277.5,327.8 278.0,327.8 278.5,327.2 279.0,327.2 279.5,329.2 280.0,328.8 280.5,317.0 281.0,317.0 281.5,322.2 282.0,327.6 282.5,327.8 283.0,327.8 283.5,321.5 284.0,321.5 284.5,320.7 285.0,320.7 285.5,324.2 286.0,326.9 286.5,327.4 287.0,329.2 287.5,329.2 288.0,328.1 288.5,325.7 289.0,325.7 289.5,324.6 290.0,324.6 290.5,323.7 291.0,320.9 291.5,320.9 292.0,325.2 292.5,325.2 293.0,320.1 293.5,320.1 294.0,327.6 294.5,326.8 295.0,322.8 295.5,322.8 296.0,327.7 296.5,324.0 297.0,323.6 297.5,323.6 298.0,325.6 298.5,326.2 299.0,326.2 299.5,328.7 300.0,328.3 300.5,325.3 301.0,325.3 301.5,323.8 302.0,323.8 302.5,324.3 303.0,324.3 303.5,325.9 304.0,325.1 304.5,325.1 305.0,326.8 305.5,324.4 306.0,322.6 306.5,321.4 307.0,321.4 307.5,322.4 308.0,322.4 308.5,327.9 309.0,322.7 309.5,322.7 310.0,325.3 310.5,317.0 311.0,317.0 311.5,327.5 312.0,327.5 312.5,319.7 313.0,319.7 313.5,325.1 314.0,326.1 314.5,325.0 315.0,324.5 315.5,322.9 316.0,322.9 316.5,327.6 317.0,326.8 317.5,326.8 318.0,324.8 318.5,324.8 319.0,324.8 319.5,317.6 320.0,317.6 320.5,324.0 321.0,326.3 321.5,325.0 322.0,325.0 322.5,328.4 323.0,327.8 323.5,324.8 324.0,324.8 324.5,326.7 325.0,326.9 325.5,327.9 326.0,325.3 326.5,325.3 327.0,321.5 327.5,321.5 328.0,323.4 328.5,327.8 329.0,324.9 329.5,324.9 330.0,325.0 330.5,321.2 331.0,321.2 331.5,321.2 332.0,328.2 332.5,326.8 333.0,326.8 333.5,327.5 334.0,326.1 334.5,326.1 335.0,328.2 335.5,327.9 336.0,319.4 336.5,319.4 337.0,324.4 337.5,326.4 338.0,326.4 338.5,326.4 339.0,325.3 339.5,325.3 340.0,320.0 340.5,320.0 341.0,328.5 341.5,327.1 342.0,321.2 342.5,321.2 343.0,328.4 343.5,328.4 344.0,329.1 344.5,324.3 345.0,324.3 345.5,320.0 346.0,320.0 346.5,327.7 347.0,326.8 347.5,326.8 348.0,328.3 348.5,327.3 349.0,327.3 349.5,322.7 350.0,322.7 350.5,325.5 351.0,321.5 351.5,321.5 352.0,322.1 352.5,322.1 353.0,324.0 353.5,324.6 354.0,321.6 354.5,321.6 355.0,319.7 355.5,319.7 356.0,320.5 356.5,320.5 357.0,319.6 357.5,319.6 358.0,323.2 358.5,323.2 359.0,324.1 359.5,324.1 360.0,323.3 360.5,323.3 361.0,320.9 361.5,317.0 362.0,317.0 362.5,328.2 363.0,326.0 363.5,326.0 364.0,328.6 364.5,326.8 365.0,326.8 365.5,317.0 366.0,317.0 366.5,325.2 367.0,327.2 367.5,324.0 368.0,323.8 368.5,323.8 369.0,326.8 369.5,321.1 370.0,321.1 370.5,327.1 371.0,322.6 371.5,322.6 372.0,325.5 372.5,325.5 373.0,327.8 373.5,325.7 374.0,325.3 374.5,325.3 375.0,327.8 375.5,327.3 376.0,327.3 376.5,326.7 377.0,326.7 377.5,328.6 378.0,324.1 378.5,324.1 379.0,325.0 379.5,325.0 380.0,327.5 380.5,318.2 381.0,318.2 381.5,325.2 382.0,326.8 382.5,325.3 383.0,322.1 383.5,322.1 384.0,326.8 384.5,317.2 385.0,317.2 385.5,317.0 386.0,317.0 386.5,325.7 387.0,325.7 387.5,328.8 388.0,328.8 388.5,327.6 389.0,325.8 389.5,322.2 390.0,322.2 390.5,323.7 391.0,323.7 391.5,327.6 392.0,325.5 392.5,324.7 393.0,324.7 393.5,328.1 394.0,328.1 394.5,327.8 395.0,322.3 395.5,322.3 396.0,325.1 396.5,325.1 397.0,325.8 397.5,326.6 398.0,326.2 398.5,326.2 399.0,317.0 399.5,317.0 400.0,320.0 400.5,320.0 401.0,320.9 401.5,322.2 402.0,322.4 402.5,324.9 403.0,317.0 403.5,317.0 404.0,326.6 404.5,321.8 405.0,321.8 405.5,321.9 406.0,321.9 406.5,319.9 407.0,319.9 407.5,320.4 408.0,327.5 408.5,326.3 409.0,326.3 409.5,327.7 410.0,319.2 410.5,319.2 411.0,325.0 411.5,327.7 412.0,327.4 412.5,323.5 413.0,323.5 413.5,324.0 414.0,324.0 414.5,327.7 415.0,326.5 415.5,326.5 416.0,327.9 416.5,324.8 417.0,324.8 417.5,325.0 418.0,325.0 418.5,327.5 419.0,327.5 419.5,328.2 420.0,327.1 420.5,323.9 421.0,323.9 421.5,329.1 422.0,323.7 422.5,323.7 423.0,325.7 423.5,325.3 424.0,321.7 424.5,321.7 425.0,328.1 425.5,328.1 426.0,319.0 426.5,319.0 427.0,328.0 427.5,325.2 428.0,325.2 428.5,325.1 429.0,325.1 429.5,326.8 430.0,325.5 430.5,325.5 431.0,324.0 431.5,324.0 432.0,325.0 432.5,321.5 433.0,321.5 433.5,324.0 434.0,324.2 434.5,325.2 435.0,326.5 435.5,322.2 436.0,319.3 436.5,319.3 437.0,324.4 437.5,327.9 438.0,325.4 438.5,317.0 439.0,317.0 439.5,323.6 440.0,317.7 440.5,317.7 441.0,325.0 441.5,325.0 442.0,327.8 442.5,327.8 443.0,328.7 443.5,319.7 444.0,319.7 444.5,325.5 445.0,322.8 445.5,322.8 446.0,328.7 446.5,321.4 447.0,321.4 447.5,321.8 448.0,321.8 448.5,325.5 449.0,325.5 449.5,327.6 450.0,325.3 450.5,325.3 451.0,325.8 451.5,325.8 452.0,328.6 452.5,325.0 453.0,325.0 453.5,324.0 454.0,324.0 454.5,324.5 455.0,324.5 455.5,327.2 456.0,327.2 456.5,328.1 457.0,326.3 457.5,326.3 458.0,325.5 458.5,322.1 459.0,322.1 459.5,325.8 460.0,327.6 460.5,325.1 461.0,325.1 461.5,326.1 462.0,326.1 462.5,327.5 463.0,324.7 463.5,324.7 464.0,326.9 464.5,326.9 465.0,318.3 465.5,318.3 466.0,322.3 466.5,323.4 467.0,326.2 467.5,323.7 468.0,323.7 468.5,320.1 469.0,320.1 469.5,326.5 470.0,325.6 470.5,325.6 471.0,327.0 471.5,325.7 472.0,325.7 472.5,327.6 473.0,323.7 473.5,323.7 474.0,329.4 474.5,321.5 475.0,321.5 475.5,324.1 476.0,324.1 476.5,328.6 477.0,324.4 477.5,317.0 478.0,317.0 478.5,326.6 479.0,327.0 479.5,327.0 480.0,324.2 480.5,321.9 481.0,321.9 481.5,323.0 482.0,323.0 482.5,329.4 483.0,329.3 483.5,329.3 484.0,329.2 484.5,327.1 485.0,327.1 485.5,325.7 486.0,325.7 486.5,327.3 487.0,327.3 487.5,327.8 488.0,321.8 488.5,321.8 489.0,324.7 489.5,328.6 490.0,328.5 490.5,321.6 491.0,321.6 491.5,325.7 492.0,325.7 492.5,323.9 493.0,323.9 493.5,322.7 494.0,322.7 494.5,327.9 495.0,328.0 495.5,326.5 496.0,322.9 496.5,320.7 497.0,320.7 497.5,325.4 498.0,321.2 498.5,321.2 499.0,325.0 499.5,324.9 500.0,324.9 500.5,326.8 501.0,327.7 501.5,322.3 502.0,322.3 502.5,324.6 503.0,323.5 503.5,323.5 504.0,327.5 504.5,327.9 505.0,324.1 505.5,324.1 506.0,325.8 506.5,325.8 507.0,324.6 507.5,324.6 508.0,324.8 508.5,323.5 509.0,323.5 509.5,322.4 510.0,322.4 510.5,325.8 511.0,326.6 511.5,326.2 512.0,326.2 512.5,322.4 513.0,322.4 513.5,327.3 514.0,324.9 514.5,324.3 515.0,322.3 515.5,322.3 516.0,325.1 516.5,324.1 517.0,323.2 517.5,323.2 518.0,321.4 518.5,321.4 519.0,321.5 519.5,318.1 520.0,318.1 520.5,324.4 521.0,326.3 521.5,328.1 522.0,321.3 522.5,321.3 523.0,324.7 523.5,323.0 524.0,323.0 524.5,317.0 525.0,317.0 525.5,325.3 526.0,325.3 526.5,325.6 527.0,324.7 527.5,324.7 528.0,323.2 528.5,323.2 529.0,320.9 529.5,320.9 530.0,326.0 530.5,326.0 531.0,317.0 531.5,317.0 532.0,325.7 532.5,324.7 533.0,324.7 533.5,323.8 534.0,323.8 534.5,324.6 535.0,327.8 535.5,317.8 536.0,317.8 536.5,324.7 537.0,324.7 537.5,323.9 538.0,323.9 538.5,328.5 539.0,328.8 539.5,320.6 540.0,320.6 540.5,325.1 541.0,325.1 541.5,328.3 542.0,327.1 542.5,327.0 543.0,326.4 543.0,343.3 542.5,338.9 542.0,338.7 541.5,344.0 541.0,344.0 540.5,342.9 540.0,342.9 539.5,343.4 539.0,343.4 538.5,342.5 538.0,342.5 537.5,340.3 537.0,344.5 536.5,344.5 536.0,341.8 535.5,338.0 535.0,337.7 534.5,343.1 534.0,343.1 533.5,340.8 533.0,344.1 532.5,344.1 532.0,341.1 531.5,341.1 531.0,349.5 530.5,349.5 530.0,338.5 529.5,339.3 529.0,347.0 528.5,347.0 528.0,340.5 527.5,346.5 527.0,346.5 526.5,342.2 526.0,342.4 525.5,342.4 525.0,349.5 524.5,349.5 524.0,349.5 523.5,344.6 523.0,344.6 522.5,341.2 522.0,343.7 521.5,343.7 521.0,343.1 520.5,342.0 520.0,349.5 519.5,349.5 519.0,344.7 518.5,344.1 518.0,344.1 517.5,339.0 517.0,344.6 516.5,344.6 516.0,338.6 515.5,338.6 515.0,348.4 514.5,348.4 514.0,344.7 513.5,344.7 513.0,346.9 512.5,346.9 512.0,349.5 511.5,349.5 511.0,348.2 510.5,348.2 510.0,337.9 509.5,343.3 509.0,343.3 508.5,339.1 508.0,341.2 507.5,341.7 507.0,344.6 506.5,344.6 506.0,344.8 505.5,344.8 505.0,339.5 504.5,345.9 504.0,345.9 503.5,342.8 503.0,342.8 502.5,339.8 502.0,341.5 501.5,341.5 501.0,338.2 500.5,341.4 500.0,349.5 499.5,349.5 499.0,342.0 498.5,340.9 498.0,340.9 497.5,341.3 497.0,341.3 496.5,342.9 496.0,342.9 495.5,338.0 495.0,338.6 494.5,338.6 494.0,343.8 493.5,343.8 493.0,342.9 492.5,342.6 492.0,342.6 491.5,344.6 491.0,344.6 490.5,343.2 490.0,343.3 489.5,343.3 489.0,340.1 488.5,340.1 488.0,349.5 487.5,349.5 487.0,340.8 486.5,349.5 486.0,349.5 485.5,346.0 485.0,341.8 484.5,341.4 484.0,341.4 483.5,339.2 483.0,339.2 482.5,339.1 482.0,339.1 481.5,338.0 481.0,340.0 480.5,340.0 480.0,342.0 479.5,342.0 479.0,339.5 478.5,339.5 478.0,340.1 477.5,341.4 477.0,341.4 476.5,341.7 476.0,341.7 475.5,342.9 475.0,342.9 474.5,346.6 474.0,346.6 473.5,339.7 473.0,346.1 472.5,346.1 472.0,339.0 471.5,338.3 471.0,340.3 470.5,344.9 470.0,344.9 469.5,339.4 469.0,338.6 468.5,340.4 468.0,344.4 467.5,344.4 467.0,338.3 466.5,338.3 466.0,337.7 465.5,337.9 465.0,347.9 464.5,347.9 464.0,339.9 463.5,339.9 463.0,339.2 462.5,342.7 462.0,342.7 461.5,339.2 461.0,339.2 460.5,338.7 460.0,339.1 459.5,339.2 459.0,339.2 458.5,347.7 458.0,347.7 457.5,343.4 457.0,339.8 456.5,342.4 456.0,342.4 455.5,340.8 455.0,341.1 454.5,341.7 454.0,341.7 453.5,341.1 453.0,341.1 452.5,343.4 452.0,343.4 451.5,343.3 451.0,340.6 450.5,340.6 450.0,342.4 449.5,342.4 449.0,337.7 448.5,339.3 448.0,341.8 447.5,342.9 447.0,345.4 446.5,345.7 446.0,345.7 445.5,343.7 445.0,343.8 444.5,343.8 444.0,339.0 443.5,342.6 443.0,347.6 442.5,347.6 442.0,342.8 441.5,345.8 441.0,349.5 440.5,349.5 440.0,343.2 439.5,342.2 439.0,342.2 438.5,345.9 438.0,345.9 437.5,339.8 437.0,338.0 436.5,340.0 436.0,340.0 435.5,340.2 435.0,340.2 434.5,340.7 434.0,340.7 433.5,341.6 433.0,341.6 432.5,339.8 432.0,339.8 431.5,340.1 431.0,340.1 430.5,340.3 430.0,340.3 429.5,338.8 429.0,342.6 428.5,342.6 428.0,340.9 427.5,340.9 427.0,340.2 426.5,341.3 426.0,349.5 425.5,349.5 425.0,338.7 424.5,340.2 424.0,341.1 423.5,341.1 423.0,341.4 422.5,342.5 422.0,342.5 421.5,349.5 421.0,349.5 420.5,338.6 420.0,347.9 419.5,347.9 419.0,344.8 418.5,339.8 418.0,342.8 417.5,347.7 417.0,347.7 416.5,342.7 416.0,339.1 415.5,341.7 415.0,341.7 414.5,343.3 414.0,343.3 413.5,342.0 413.0,344.2 412.5,344.2 412.0,341.1 411.5,340.1 411.0,342.4 410.5,342.4 410.0,342.0 409.5,340.3 409.0,340.3 408.5,338.7 408.0,338.7 407.5,342.6 407.0,346.8 406.5,349.5 406.0,349.5 405.5,348.1 405.0,348.1 404.5,339.3 404.0,339.3 403.5,343.1 403.0,343.1 402.5,345.8 402.0,345.8 401.5,345.3 401.0,349.1 400.5,349.1 400.0,343.2 399.5,338.3 399.0,342.1 398.5,344.9 398.0,344.9 397.5,339.6 397.0,349.5 396.5,349.5 396.0,342.5 395.5,342.5 395.0,340.6 394.5,340.6 394.0,341.2 393.5,341.2 393.0,337.9 392.5,342.9 392.0,342.9 391.5,344.5 391.0,344.5 390.5,343.3 390.0,343.3 389.5,339.1 389.0,340.6 388.5,340.6 388.0,341.9 387.5,341.9 387.0,341.5 386.5,344.3 386.0,344.3 385.5,343.4 385.0,343.4 384.5,337.8 384.0,342.5 383.5,342.5 383.0,340.6 382.5,340.4 382.0,338.9 381.5,341.0 381.0,341.0 380.5,344.6 380.0,344.6 379.5,340.8 379.0,343.2 378.5,343.2 378.0,340.8 377.5,340.8 377.0,346.1 376.5,346.1 376.0,339.0 375.5,339.1 375.0,342.5 374.5,342.5 374.0,340.7 373.5,340.7 373.0,338.9 372.5,342.6 372.0,342.6 371.5,342.5 371.0,342.5 370.5,340.4 370.0,341.6 369.5,341.6 369.0,344.8 368.5,344.8 368.0,341.1 367.5,342.6 367.0,347.2 366.5,347.2 366.0,346.4 365.5,347.1 365.0,347.1 364.5,349.3 364.0,349.3 363.5,339.7 363.0,340.0 362.5,342.0 362.0,342.0 361.5,349.5 361.0,349.5 360.5,343.9 360.0,343.9 359.5,344.8 359.0,344.8 358.5,340.4 358.0,340.4 357.5,340.3 357.0,342.6 356.5,342.6 356.0,344.9 355.5,344.9 355.0,345.2 354.5,345.2 354.0,340.3 353.5,342.2 353.0,342.5 352.5,342.5 352.0,342.5 351.5,342.5 351.0,344.8 350.5,344.8 350.0,340.8 349.5,344.3 349.0,344.3 348.5,341.6 348.0,341.6 347.5,346.9 347.0,348.1 346.5,348.1 346.0,339.7 345.5,344.0 345.0,344.0 344.5,340.0 344.0,339.4 343.5,342.8 343.0,342.8 342.5,345.5 342.0,345.5 341.5,342.6 341.0,338.8 340.5,342.9 340.0,342.9 339.5,342.1 339.0,341.0 338.5,338.0 338.0,340.1 337.5,344.0 337.0,344.0 336.5,346.9 336.0,346.9 335.5,341.9 335.0,342.2 334.5,342.2 334.0,343.8 333.5,343.8 333.0,348.6 332.5,348.6 332.0,341.0 331.5,343.1 331.0,343.1 330.5,341.8 330.0,342.5 329.5,342.5 329.0,340.3 328.5,338.9 328.0,339.2 327.5,348.9 327.0,348.9 326.5,342.6 326.0,342.6 325.5,341.8 325.0,345.0 324.5,345.0 324.0,340.3 323.5,340.3 323.0,338.0 322.5,338.0 322.0,339.1 321.5,349.5 321.0,349.5 320.5,343.2 320.0,343.2 319.5,342.2 319.0,347.2 318.5,347.2 318.0,340.0 317.5,341.4 317.0,344.1 316.5,344.1 316.0,338.3 315.5,345.5 315.0,345.5 314.5,340.3 314.0,340.3 313.5,343.3 313.0,348.6 312.5,348.6 312.0,344.1 311.5,344.1 311.0,340.3 310.5,343.8 310.0,348.6 309.5,348.6 309.0,341.2 308.5,341.2 308.0,339.1 307.5,347.7 307.0,349.5 306.5,349.5 306.0,344.2 305.5,340.1 305.0,341.3 304.5,341.3 304.0,349.5 303.5,349.5 303.0,340.3 302.5,340.3 302.0,339.7 301.5,340.9 301.0,343.2 300.5,343.2 300.0,339.1 299.5,345.5 299.0,345.5 298.5,338.6 298.0,340.2 297.5,341.3 297.0,341.3 296.5,339.3 296.0,341.3 295.5,341.3 295.0,341.0 294.5,341.0 294.0,342.4 293.5,342.4 293.0,340.3 292.5,340.3 292.0,342.1 291.5,342.1 291.0,339.3 290.5,343.0 290.0,343.4 289.5,343.4 289.0,343.4 288.5,343.9 288.0,343.9 287.5,349.0 287.0,349.0 286.5,347.9 286.0,342.0 285.5,342.0 285.0,339.6 284.5,339.6 284.0,342.7 283.5,342.7 283.0,348.0 282.5,348.1 282.0,348.1 281.5,347.4 281.0,347.4 280.5,340.1 280.0,340.1 279.5,340.5 279.0,340.5 278.5,339.8 278.0,340.1 277.5,340.1 277.0,341.3 276.5,341.3 276.0,338.8 275.5,339.6 275.0,344.3 274.5,346.8 274.0,346.8 273.5,341.9 273.0,345.3 272.5,345.3 272.0,339.5 271.5,339.5 271.0,338.9 270.5,339.3 270.0,345.0 269.5,345.0 269.0,341.8 268.5,349.5 268.0,349.5 267.5,340.4 267.0,340.4 266.5,342.8 266.0,346.3 265.5,346.3 265.0,343.8 264.5,343.8 264.0,341.2 263.5,341.6 263.0,341.6 262.5,343.4 262.0,343.4 261.5,342.6 261.0,339.5 260.5,339.5 260.0,342.4 259.5,342.4 259.0,338.0 258.5,345.6 258.0,345.6 257.5,344.9 257.0,339.9 256.5,339.9 256.0,339.7 255.5,339.7 255.0,339.3 254.5,342.6 254.0,342.6 253.5,344.5 253.0,344.5 252.5,338.0 252.0,338.0 251.5,337.7 251.0,339.8 250.5,341.5 250.0,341.5 249.5,342.1 249.0,342.1 248.5,338.6 248.0,338.6 247.5,339.5 247.0,339.5 246.5,339.9 246.0,339.9 245.5,345.9 245.0,345.9 244.5,339.8 244.0,339.8 243.5,341.0 243.0,346.8 242.5,346.8 242.0,344.2 241.5,344.2 241.0,338.5 240.5,344.4 240.0,344.4 239.5,349.5 239.0,349.5 238.5,342.7 238.0,345.9 237.5,345.9 237.0,345.9 236.5,340.6 236.0,343.1 235.5,343.1 235.0,342.3 234.5,342.3 234.0,339.5 233.5,339.5 233.0,340.2 232.5,340.2 232.0,345.7 231.5,349.5 231.0,349.5 230.5,341.5 230.0,337.8 229.5,349.2 229.0,349.2 228.5,344.7 228.0,344.1 227.5,339.4 227.0,339.4 226.5,338.5 226.0,340.6 225.5,340.6 225.0,339.8 224.5,338.6 224.0,342.0 223.5,342.1 223.0,344.4 222.5,344.4 222.0,339.4 221.5,347.4 221.0,347.4 220.5,345.6 220.0,345.6 219.5,343.4 219.0,343.3z" fill="#1c78c8"/><path d="M219.0,331.5 219.5,331.0 220.0,331.5 220.5,330.6 221.0,330.3 221.5,329.8 222.0,330.0 222.5,330.7 223.0,330.4 223.5,330.5 224.0,330.6 224.5,329.6 225.0,330.9 225.5,331.0 226.0,331.2 226.5,330.7 227.0,331.0 227.5,331.7 228.0,331.8 228.5,331.6 229.0,331.5 229.5,331.6 230.0,330.7 230.5,331.2 231.0,330.6 231.5,330.7 232.0,330.1 232.5,330.0 233.0,328.9 233.5,329.3 234.0,328.6 234.5,329.5 235.0,329.0 235.5,329.5 236.0,329.3 236.5,328.7 237.0,329.7 237.5,329.5 238.0,330.1 238.5,330.2 239.0,329.4 239.5,330.7 240.0,330.9 240.5,330.3 241.0,331.2 241.5,330.6 242.0,330.3 242.5,330.7 243.0,330.6 243.5,330.3 244.0,329.9 244.5,330.6 245.0,330.5 245.5,330.0 246.0,330.3 246.5,330.7 247.0,329.9 247.5,330.0 248.0,331.0 248.5,331.1 249.0,331.2 249.5,331.6 250.0,332.0 250.5,330.6 251.0,332.2 251.5,332.1 252.0,330.9 252.5,331.1 253.0,330.3 253.5,331.2 254.0,330.6 254.5,330.6 255.0,330.6 255.5,330.5 256.0,330.4 256.5,329.6 257.0,329.4 257.5,330.4 258.0,330.7 258.5,330.0 259.0,331.0 259.5,330.8 260.0,330.9 260.5,331.7 261.0,330.8 261.5,332.3 262.0,331.4 262.5,331.9 263.0,331.5 263.5,330.9 264.0,331.1 264.5,330.9 265.0,331.0 265.5,330.6 266.0,330.6 266.5,330.5 267.0,330.6 267.5,330.5 268.0,329.4 268.5,329.6 269.0,330.3 269.5,330.8 270.0,330.1 270.5,331.0 271.0,331.3 271.5,330.3 272.0,331.8 272.5,331.9 273.0,331.7 273.5,332.1 274.0,331.7 274.5,330.8 275.0,330.6 275.5,330.8 276.0,330.6 276.5,329.8 277.0,329.4 277.5,329.1 278.0,329.6 278.5,329.6 279.0,329.7 279.5,329.5 280.0,329.5 280.5,329.5 281.0,330.0 281.5,329.6 282.0,329.8 282.5,329.9 283.0,331.1 283.5,331.0 284.0,331.6 284.5,331.1 285.0,330.5 285.5,330.5 286.0,331.1 286.5,330.6 287.0,330.7 287.5,330.7 288.0,330.5 288.5,330.7 289.0,330.6 289.5,330.5 290.0,329.3 290.5,330.5 291.0,330.6 291.5,329.5 292.0,330.6 292.5,331.3 293.0,330.9 293.5,331.3 294.0,332.0 294.5,332.1 295.0,331.7 295.5,332.3 296.0,331.0 296.5,330.5 297.0,330.9 297.5,330.8 298.0,331.0 298.5,330.7 299.0,329.6 299.5,330.4 300.0,330.4 300.5,330.3 301.0,330.5 301.5,330.2 302.0,330.5 302.5,330.1 303.0,330.5 303.5,330.5 304.0,330.5 304.5,331.4 305.0,331.9 305.5,330.7 306.0,331.7 306.5,331.7 307.0,330.4 307.5,330.1 308.0,329.6 308.5,329.7 309.0,328.7 309.5,329.3 310.0,327.5 310.5,328.2 311.0,328.3 311.5,328.0 312.0,327.9 312.5,328.0 313.0,327.5 313.5,327.7 314.0,327.0 314.5,328.0 315.0,328.5 315.5,328.5 316.0,329.5 316.5,330.0 317.0,330.6 317.5,329.4 318.0,330.2 318.5,330.5 319.0,330.7 319.5,329.8 320.0,330.6 320.5,330.0 321.0,330.4 321.5,330.0 322.0,330.3 322.5,329.6 323.0,330.2 323.5,330.0 324.0,329.8 324.5,329.5 325.0,328.8 325.5,330.3 326.0,330.2 326.5,330.3 327.0,330.6 327.5,329.8 328.0,329.4 328.5,330.7 329.0,329.4 329.5,329.7 330.0,329.6 330.5,329.8 331.0,329.7 331.5,328.9 332.0,329.3 332.5,329.5 333.0,329.5 333.5,329.1 334.0,329.6 334.5,328.0 335.0,330.1 335.5,329.6 336.0,329.0 336.5,330.1 337.0,330.8 337.5,330.8 338.0,329.9 338.5,330.9 339.0,331.0 339.5,332.3 340.0,331.8 340.5,331.6 341.0,331.1 341.5,330.4 342.0,330.1 342.5,330.4 343.0,329.8 343.5,329.9 344.0,330.4 344.5,330.0 345.0,330.6 345.5,330.3 346.0,330.7 346.5,330.4 347.0,330.0 347.5,329.8 348.0,331.1 348.5,330.5 349.0,331.5 349.5,331.7 350.0,331.6 350.5,331.7 351.0,331.2 351.5,332.0 352.0,331.3 352.5,331.2 353.0,330.4 353.5,330.2 354.0,330.4 354.5,329.7 355.0,329.6 355.5,329.6 356.0,329.1 356.5,328.8 357.0,328.6 357.5,328.3 358.0,328.7 358.5,328.6 359.0,328.6 359.5,328.7 360.0,327.5 360.5,327.8 361.0,328.8 361.5,329.4 362.0,328.9 362.5,328.1 363.0,328.2 363.5,327.8 364.0,328.2 364.5,328.2 365.0,328.4 365.5,327.9 366.0,327.9 366.5,328.5 367.0,328.1 367.5,327.4 368.0,327.7 368.5,328.7 369.0,329.0 369.5,329.5 370.0,330.1 370.5,330.2 371.0,330.5 371.5,331.0 372.0,330.9 372.5,331.3 373.0,331.4 373.5,332.2 374.0,331.3 374.5,331.6 375.0,330.6 375.5,331.0 376.0,330.4 376.5,329.7 377.0,329.3 377.5,329.3 378.0,329.8 378.5,329.4 379.0,329.4 379.5,329.1 380.0,329.0 380.5,328.6 381.0,327.8 381.5,328.3 382.0,328.2 382.5,328.7 383.0,328.5 383.5,327.9 384.0,329.1 384.5,329.0 385.0,329.5 385.5,329.0 386.0,328.9 386.5,329.1 387.0,329.1 387.5,328.6 388.0,328.6 388.5,329.2 389.0,329.2 389.5,329.3 390.0,329.2 390.5,329.2 391.0,329.8 391.5,330.1 392.0,328.7 392.5,328.9 393.0,329.8 393.5,330.1 394.0,331.1 394.5,330.9 395.0,329.5 395.5,331.3 396.0,331.4 396.5,331.1 397.0,331.0 397.5,330.4 398.0,329.6 398.5,329.4 399.0,328.6 399.5,327.9 400.0,328.2 400.5,328.0 401.0,326.9 401.5,327.9 402.0,327.5 402.5,327.1 403.0,326.4 403.5,327.4 404.0,327.4 404.5,326.8 405.0,327.8 405.5,327.9 406.0,327.7 406.5,327.7 407.0,328.8 407.5,328.5 408.0,327.6 408.5,328.0 409.0,328.3 409.5,327.9 410.0,328.0 410.5,327.9 411.0,328.3 411.5,327.7 412.0,328.1 412.5,328.6 413.0,328.3 413.5,328.2 414.0,328.5 414.5,328.7 415.0,329.7 415.5,330.2 416.0,330.5 416.5,330.9 417.0,330.6 417.5,331.2 418.0,331.3 418.5,332.1 419.0,330.6 419.5,331.5 420.0,330.9 420.5,330.7 421.0,331.0 421.5,330.1 422.0,330.4 422.5,330.6 423.0,330.5 423.5,330.3 424.0,330.5 424.5,329.9 425.0,330.3 425.5,330.5 426.0,329.3 426.5,330.3 427.0,330.5 427.5,330.9 428.0,331.8 428.5,332.1 429.0,332.4 429.5,332.0 430.0,331.9 430.5,331.5 431.0,330.9 431.5,330.8 432.0,330.6 432.5,330.1 433.0,330.6 433.5,330.2 434.0,330.1 434.5,329.6 435.0,329.2 435.5,329.9 436.0,329.7 436.5,329.8 437.0,329.4 437.5,329.7 438.0,329.6 438.5,329.6 439.0,330.2 439.5,329.6 440.0,330.4 440.5,328.8 441.0,329.5 441.5,328.8 442.0,328.5 442.5,329.0 443.0,328.8 443.5,328.8 444.0,328.4 444.5,327.5 445.0,329.1 445.5,328.4 446.0,329.3 446.5,329.3 447.0,329.8 447.5,329.9 448.0,330.5 448.5,330.4 449.0,331.2 449.5,330.8 450.0,331.8 450.5,332.1 451.0,331.3 451.5,331.2 452.0,331.7 452.5,331.5 453.0,331.1 453.5,330.8 454.0,331.0 454.5,330.4 455.0,329.6 455.5,330.8 456.0,329.4 456.5,330.6 457.0,330.4 457.5,330.5 458.0,330.5 458.5,330.4 459.0,329.8 459.5,331.2 460.0,331.3 460.5,331.7 461.0,331.2 461.5,332.1 462.0,332.0 462.5,331.0 463.0,331.8 463.5,331.6 464.0,331.1 464.5,330.5 465.0,329.3 465.5,329.5 466.0,330.1 466.5,329.5 467.0,329.6 467.5,329.4 468.0,328.7 468.5,329.7 469.0,329.5 469.5,329.6 470.0,329.2 470.5,330.3 471.0,329.5 471.5,330.5 472.0,331.1 472.5,330.9 473.0,331.3 473.5,331.5 474.0,330.8 474.5,331.3 475.0,330.3 475.5,330.8 476.0,329.9 476.5,330.2 477.0,329.6 477.5,329.3 478.0,329.7 478.5,329.8 479.0,330.3 479.5,330.5 480.0,329.8 480.5,330.8 481.0,330.8 481.5,330.5 482.0,331.4 482.5,330.8 483.0,332.1 483.5,332.4 484.0,332.5 484.5,331.5 485.0,331.3 485.5,331.1 486.0,330.3 486.5,330.4 487.0,330.8 487.5,330.0 488.0,330.2 488.5,330.3 489.0,329.4 489.5,330.7 490.0,330.7 490.5,329.9 491.0,330.4 491.5,330.1 492.0,330.6 492.5,331.0 493.0,330.6 493.5,330.3 494.0,330.5 494.5,331.2 495.0,331.2 495.5,330.9 496.0,330.8 496.5,330.7 497.0,330.5 497.5,330.1 498.0,329.5 498.5,329.4 499.0,329.3 499.5,328.9 500.0,328.8 500.5,329.7 501.0,328.2 501.5,329.5 502.0,330.0 502.5,328.4 503.0,329.5 503.5,330.6 504.0,331.1 504.5,331.3 505.0,331.7 505.5,332.1 506.0,331.8 506.5,331.7 507.0,331.0 507.5,331.0 508.0,329.3 508.5,330.7 509.0,330.4 509.5,330.2 510.0,330.1 510.5,330.2 511.0,330.0 511.5,330.0 512.0,330.0 512.5,329.4 513.0,328.9 513.5,329.6 514.0,329.8 514.5,329.1 515.0,329.1 515.5,329.8 516.0,329.8 516.5,330.0 517.0,328.8 517.5,329.0 518.0,327.3 518.5,327.5 519.0,327.5 519.5,327.3 520.0,327.2 520.5,327.0 521.0,327.4 521.5,327.7 522.0,327.2 522.5,327.9 523.0,328.2 523.5,328.6 524.0,328.6 524.5,329.0 525.0,328.8 525.5,329.6 526.0,330.4 526.5,331.1 527.0,331.1 527.5,331.3 528.0,330.0 528.5,331.1 529.0,330.8 529.5,330.3 530.0,330.9 530.5,330.8 531.0,330.3 531.5,330.7 532.0,329.5 532.5,330.4 533.0,329.8 533.5,329.6 534.0,330.1 534.5,329.7 535.0,330.3 535.5,330.3 536.0,329.6 536.5,329.5 537.0,330.5 537.5,330.8 538.0,330.8 538.5,330.6 539.0,329.5 539.5,330.3 540.0,329.4 540.5,329.0 541.0,328.9 541.5,329.1 542.0,328.8 542.5,329.6 543.0,329.2 543.0,337.7 542.5,337.6 542.0,337.8 541.5,338.1 541.0,338.5 540.5,337.8 540.0,338.1 539.5,337.6 539.0,336.6 538.5,336.5 538.0,337.0 537.5,336.5 537.0,336.9 536.5,337.5 536.0,336.6 535.5,337.3 535.0,336.9 534.5,338.3 534.0,337.0 533.5,337.6 533.0,336.9 532.5,337.5 532.0,337.3 531.5,338.2 531.0,336.3 530.5,336.6 530.0,336.0 529.5,336.5 529.0,336.0 528.5,336.6 528.0,335.8 527.5,335.2 527.0,336.4 526.5,336.5 526.0,337.3 525.5,338.6 525.0,338.0 524.5,338.6 524.0,339.1 523.5,339.5 523.0,339.7 522.5,340.1 522.0,339.6 521.5,339.9 521.0,340.2 520.5,340.3 520.0,340.3 519.5,339.9 519.0,340.2 518.5,339.7 518.0,338.6 517.5,338.3 517.0,338.0 516.5,337.7 516.0,337.8 515.5,338.1 515.0,338.5 514.5,337.6 514.0,337.5 513.5,338.2 513.0,337.8 512.5,337.7 512.0,337.5 511.5,337.6 511.0,337.9 510.5,337.7 510.0,337.4 509.5,337.1 509.0,337.2 508.5,337.1 508.0,336.6 507.5,337.6 507.0,336.2 506.5,337.8 506.0,335.6 505.5,335.6 505.0,337.3 504.5,336.1 504.0,336.1 503.5,336.4 503.0,337.6 502.5,338.7 502.0,338.4 501.5,337.5 501.0,338.9 500.5,338.0 500.0,338.2 499.5,338.8 499.0,337.8 498.5,337.4 498.0,337.9 497.5,336.9 497.0,337.0 496.5,336.5 496.0,336.3 495.5,336.2 495.0,335.4 494.5,335.7 494.0,335.6 493.5,336.9 493.0,336.3 492.5,336.0 492.0,336.8 491.5,336.3 491.0,336.5 490.5,336.8 490.0,336.7 489.5,338.8 489.0,336.7 488.5,337.6 488.0,337.2 487.5,337.2 487.0,336.7 486.5,336.0 486.0,336.2 485.5,336.2 485.0,335.5 484.5,336.0 484.0,335.2 483.5,335.3 483.0,336.1 482.5,336.4 482.0,335.8 481.5,336.3 481.0,336.3 480.5,336.4 480.0,336.9 479.5,336.9 479.0,337.6 478.5,337.1 478.0,336.6 477.5,337.7 477.0,337.4 476.5,337.0 476.0,337.1 475.5,336.8 475.0,336.2 474.5,335.9 474.0,335.9 473.5,336.1 473.0,335.8 472.5,335.8 472.0,336.8 471.5,336.3 471.0,337.0 470.5,337.6 470.0,337.1 469.5,337.9 469.0,337.4 468.5,337.5 468.0,337.4 467.5,337.6 467.0,337.9 466.5,337.1 466.0,337.3 465.5,336.8 465.0,336.5 464.5,337.4 464.0,336.8 463.5,335.8 463.0,335.4 462.5,335.3 462.0,335.4 461.5,336.2 461.0,336.0 460.5,336.5 460.0,336.5 459.5,337.2 459.0,337.1 458.5,336.3 458.0,336.4 457.5,336.9 457.0,337.0 456.5,336.6 456.0,337.0 455.5,337.3 455.0,336.4 454.5,336.6 454.0,337.7 453.5,336.4 453.0,335.6 452.5,335.7 452.0,336.4 451.5,335.6 451.0,335.8 450.5,335.1 450.0,335.6 449.5,336.4 449.0,336.8 448.5,337.3 448.0,337.1 447.5,337.6 447.0,337.8 446.5,338.7 446.0,337.8 445.5,339.4 445.0,338.5 444.5,338.9 444.0,339.3 443.5,338.4 443.0,338.3 442.5,339.3 442.0,338.0 441.5,338.6 441.0,337.5 440.5,338.0 440.0,337.1 439.5,337.8 439.0,337.1 438.5,337.5 438.0,337.1 437.5,337.1 437.0,337.3 436.5,337.4 436.0,337.5 435.5,338.1 435.0,337.4 434.5,337.4 434.0,336.8 433.5,336.9 433.0,337.4 432.5,336.5 432.0,336.5 431.5,336.0 431.0,336.4 430.5,335.4 430.0,335.9 429.5,335.6 429.0,337.1 428.5,335.2 428.0,335.8 427.5,335.6 427.0,336.4 426.5,336.6 426.0,336.2 425.5,337.1 425.0,337.0 424.5,338.0 424.0,337.1 423.5,336.7 423.0,336.9 422.5,338.0 422.0,337.8 421.5,336.6 421.0,337.5 420.5,336.0 420.0,335.8 419.5,335.9 419.0,336.4 418.5,335.3 418.0,335.3 417.5,336.7 417.0,335.9 416.5,336.8 416.0,337.7 415.5,337.7 415.0,338.0 414.5,338.9 414.0,338.6 413.5,338.5 413.0,339.7 412.5,338.6 412.0,338.7 411.5,340.0 411.0,339.1 410.5,339.0 410.0,340.3 409.5,339.3 409.0,339.0 408.5,338.7 408.0,339.6 407.5,338.4 407.0,338.6 406.5,339.5 406.0,339.6 405.5,340.3 405.0,339.9 404.5,340.2 404.0,339.8 403.5,339.8 403.0,339.7 402.5,340.4 402.0,340.7 401.5,340.0 401.0,339.5 400.5,338.9 400.0,338.6 399.5,338.1 399.0,338.1 398.5,338.0 398.0,337.3 397.5,336.8 397.0,336.1 396.5,336.4 396.0,336.2 395.5,335.9 395.0,335.9 394.5,337.3 394.0,336.0 393.5,337.2 393.0,337.4 392.5,337.8 392.0,337.4 391.5,337.1 391.0,338.0 390.5,337.4 390.0,337.8 389.5,337.7 389.0,338.9 388.5,338.2 388.0,339.3 387.5,338.5 387.0,338.2 386.5,338.1 386.0,338.1 385.5,339.0 385.0,338.4 384.5,338.0 384.0,339.4 383.5,338.3 383.0,338.9 382.5,338.7 382.0,338.7 381.5,339.0 381.0,338.9 380.5,338.3 380.0,338.5 379.5,338.9 379.0,338.4 378.5,338.6 378.0,337.3 377.5,337.7 377.0,336.8 376.5,336.5 376.0,336.9 375.5,336.4 375.0,336.0 374.5,335.6 374.0,335.7 373.5,336.2 373.0,336.4 372.5,336.2 372.0,336.5 371.5,336.9 371.0,338.1 370.5,338.1 370.0,337.8 369.5,337.8 369.0,339.0 368.5,338.7 368.0,339.1 367.5,339.1 367.0,339.3 366.5,339.4 366.0,339.2 365.5,339.7 365.0,339.3 364.5,339.5 364.0,339.1 363.5,339.2 363.0,338.8 362.5,338.2 362.0,339.0 361.5,337.8 361.0,338.6 360.5,338.5 360.0,338.8 359.5,338.5 359.0,339.7 358.5,338.5 358.0,338.3 357.5,338.8 357.0,338.6 356.5,339.5 356.0,337.8 355.5,338.4 355.0,338.4 354.5,337.0 354.0,336.9 353.5,337.0 353.0,336.8 352.5,336.2 352.0,336.0 351.5,336.2 351.0,335.6 350.5,335.1 350.0,336.1 349.5,336.7 349.0,336.2 348.5,337.1 348.0,336.1 347.5,338.2 347.0,336.6 346.5,337.3 346.0,336.5 345.5,336.6 345.0,336.8 344.5,337.8 344.0,337.2 343.5,336.4 343.0,336.6 342.5,336.7 342.0,336.7 341.5,336.2 341.0,335.8 340.5,335.3 340.0,334.7 339.5,334.9 339.0,335.6 338.5,335.4 338.0,335.7 337.5,336.5 337.0,337.4 336.5,336.6 336.0,336.8 335.5,337.6 335.0,337.5 334.5,337.7 334.0,337.7 333.5,337.9 333.0,338.7 332.5,339.3 332.0,338.3 331.5,338.2 331.0,338.6 330.5,337.3 330.0,338.0 329.5,337.4 329.0,336.9 328.5,336.6 328.0,336.7 327.5,337.0 327.0,336.7 326.5,337.3 326.0,337.0 325.5,337.6 325.0,337.5 324.5,337.1 324.0,337.1 323.5,337.0 323.0,336.8 322.5,337.1 322.0,337.2 321.5,337.6 321.0,337.7 320.5,338.0 320.0,336.6 319.5,337.2 319.0,336.4 318.5,336.3 318.0,336.7 317.5,337.3 317.0,336.4 316.5,337.8 316.0,338.3 315.5,337.9 315.0,338.9 314.5,339.9 314.0,339.3 313.5,339.0 313.0,340.1 312.5,340.2 312.0,339.2 311.5,339.5 311.0,338.7 310.5,338.9 310.0,339.4 309.5,339.2 309.0,338.4 308.5,337.5 308.0,337.1 307.5,336.1 307.0,337.0 306.5,335.9 306.0,335.7 305.5,335.3 305.0,336.0 304.5,335.7 304.0,335.8 303.5,335.9 303.0,336.5 302.5,337.1 302.0,336.9 301.5,336.7 301.0,336.5 300.5,337.0 300.0,337.1 299.5,338.2 299.0,336.9 298.5,337.3 298.0,336.3 297.5,336.2 297.0,336.2 296.5,336.3 296.0,336.2 295.5,336.1 295.0,335.5 294.5,335.3 294.0,335.7 293.5,337.1 293.0,335.8 292.5,337.1 292.0,336.4 291.5,336.4 291.0,337.3 290.5,336.6 290.0,336.8 289.5,338.0 289.0,336.8 288.5,336.9 288.0,337.2 287.5,336.7 287.0,336.7 286.5,336.7 286.0,336.1 285.5,335.8 285.0,336.1 284.5,335.8 284.0,336.2 283.5,335.7 283.0,336.2 282.5,338.2 282.0,337.2 281.5,337.0 281.0,337.9 280.5,338.1 280.0,338.6 279.5,338.9 279.0,338.1 278.5,338.0 278.0,338.6 277.5,338.0 277.0,337.5 276.5,337.5 276.0,337.1 275.5,337.7 275.0,337.8 274.5,336.2 274.0,335.7 273.5,336.1 273.0,335.2 272.5,335.6 272.0,335.3 271.5,335.7 271.0,336.7 270.5,336.5 270.0,337.0 269.5,336.8 269.0,336.7 268.5,337.4 268.0,336.9 267.5,336.6 267.0,337.3 266.5,336.9 266.0,336.4 265.5,336.6 265.0,336.1 264.5,336.3 264.0,336.2 263.5,335.6 263.0,335.5 262.5,335.1 262.0,334.9 261.5,335.6 261.0,335.8 260.5,335.9 260.0,336.0 259.5,336.1 259.0,337.2 258.5,336.2 258.0,336.6 257.5,336.7 257.0,336.8 256.5,336.8 256.0,338.0 255.5,337.8 255.0,336.4 254.5,336.4 254.0,337.9 253.5,336.4 253.0,335.9 252.5,336.0 252.0,335.9 251.5,335.2 251.0,334.7 250.5,335.4 250.0,335.2 249.5,335.6 249.0,336.2 248.5,336.1 248.0,336.4 247.5,337.2 247.0,336.5 246.5,337.7 246.0,336.9 245.5,337.2 245.0,336.7 244.5,337.7 244.0,336.8 243.5,336.5 243.0,337.6 242.5,336.6 242.0,336.5 241.5,337.1 241.0,336.8 240.5,335.8 240.0,335.7 239.5,335.8 239.0,336.2 238.5,337.6 238.0,337.1 237.5,339.0 237.0,337.4 236.5,337.9 236.0,337.6 235.5,339.4 235.0,338.0 234.5,337.8 234.0,338.6 233.5,337.5 233.0,337.2 232.5,337.1 232.0,337.3 231.5,337.8 231.0,336.1 230.5,336.7 230.0,337.4 229.5,335.6 229.0,335.2 228.5,334.7 228.0,335.7 227.5,335.4 227.0,336.6 226.5,335.7 226.0,336.0 225.5,336.6 225.0,336.6 224.5,337.3 224.0,337.5 223.5,336.9 223.0,337.3 222.5,336.8 222.0,337.1 221.5,336.6 221.0,336.1 220.5,337.1 220.0,335.9 219.5,335.5 219.0,335.3z" fill="#f2a300"/><path d="M221 283V382.5M224.3 283V382.5M469.6 283V384M542.7 283V384" stroke="#eba10b" stroke-width="0.9"/><path d="M220 283V360M538.7 283.5V365" stroke="#1a9c6e" stroke-width="0.9"/><path d="M217.5 236.9V430" stroke="#7cdc7c" stroke-width="1.3"/></svg>
<div class="t" style="right:1067px;top:236.50px;font-size:6.3px;color:#333;font-weight:normal;">40</div>
<div class="t" style="right:1067px;top:280.80px;font-size:6.3px;color:#333;font-weight:normal;">20</div>
<div class="t" style="right:1067px;top:328.60px;font-size:6.3px;color:#333;font-weight:normal;">0</div>
<div class="t" style="right:1067px;top:377.50px;font-size:6.3px;color:#333;font-weight:normal;">-20</div>
<div class="t" style="right:1067px;top:421.30px;font-size:6.3px;color:#333;font-weight:normal;">-40</div>
<div class="t" style="left:119.0px;width:200px;text-align:center;top:429.90px;font-size:6.3px;color:#333;font-weight:normal;">0</div>
<div class="t" style="left:207.77499999999998px;width:200px;text-align:center;top:429.90px;font-size:6.3px;color:#333;font-weight:normal;">600</div>
<div class="t" style="left:298.05px;width:200px;text-align:center;top:429.90px;font-size:6.3px;color:#333;font-weight:normal;">1200</div>
<div class="t" style="left:388.325px;width:200px;text-align:center;top:429.90px;font-size:6.3px;color:#333;font-weight:normal;">1800</div>
<div class="t" style="right:705.4px;top:429.90px;font-size:6.3px;color:#333;font-weight:normal;">2400</div>
<div class="t" style="left:580px;top:236.40px;font-size:6.3px;color:#2ee62e;font-weight:bold;">Cursor Main</div>
<div class="t" style="right:610px;top:236.40px;font-size:6.3px;color:#2ee62e;font-weight:bold;">0.0000 s</div>
<div style="left:579px;top:245.5px;width:96px;height:0.8px;background:#aaa"></div>
<svg style="left:0;top:0" width="1284" height="856"><path d="M578.6 250.2H713.9" stroke="#666" stroke-width="0.8"/><path d="M578.6 259.3H713.9" stroke="#666" stroke-width="0.8"/><path d="M578.6 268.4H713.9" stroke="#666" stroke-width="0.8"/><path d="M578.6 277.5H713.9" stroke="#666" stroke-width="0.8"/><path d="M578.6 286.6H713.9" stroke="#666" stroke-width="0.8"/><path d="M578.6 295.7H713.9" stroke="#666" stroke-width="0.8"/><path d="M578.6 304.8H713.9" stroke="#666" stroke-width="0.8"/><path d="M578.6 313.9H713.9" stroke="#666" stroke-width="0.8"/><path d="M578.6 323.0H713.9" stroke="#666" stroke-width="0.8"/><path d="M578.6 332.1H713.9" stroke="#666" stroke-width="0.8"/><path d="M578.6 341.2H713.9" stroke="#666" stroke-width="0.8"/><path d="M578.6 350.3H713.9" stroke="#666" stroke-width="0.8"/><path d="M578.6 359.4H713.9" stroke="#666" stroke-width="0.8"/><path d="M578.6 368.5H713.9" stroke="#666" stroke-width="0.8"/><path d="M578.6 377.6H713.9" stroke="#666" stroke-width="0.8"/><path d="M578.6 386.7H713.9" stroke="#666" stroke-width="0.8"/><path d="M578.6 395.8H713.9" stroke="#666" stroke-width="0.8"/><path d="M578.6 404.9H713.9" stroke="#666" stroke-width="0.8"/><path d="M578.6 250.2V404.9" stroke="#555" stroke-width="0.9"/><path d="M602.4 250.2V404.9" stroke="#555" stroke-width="0.9"/><path d="M633.3 250.2V404.9" stroke="#555" stroke-width="0.9"/><path d="M688.4 250.2V404.9" stroke="#555" stroke-width="0.9"/><path d="M713.9 250.2V404.9" stroke="#555" stroke-width="0.9"/></svg>
<div class="t" style="left:580px;top:249.75px;font-size:6.4px;color:#222;font-weight:normal;">CH No.</div>
<div class="t" style="left:603.5px;top:249.75px;font-size:6.4px;color:#222;font-weight:normal;">CH Name</div>
<div class="t" style="left:634.5px;top:249.75px;font-size:6.4px;color:#222;font-weight:normal;">Main cursor value</div>
<div class="t" style="left:689.5px;top:249.75px;font-size:6.4px;color:#222;font-weight:normal;">CH Unit</div>
<div class="t" style="left:580px;top:258.85px;font-size:6.4px;color:#2a7fd0;font-weight:normal;">A1</div>
<div class="t" style="left:603.5px;top:258.85px;font-size:6.4px;color:#2a7fd0;font-weight:normal;">AMA_X</div>
<div class="t" style="right:596.5px;top:258.85px;font-size:6.4px;color:#2a7fd0;font-weight:normal;">0.07</div>
<div class="t" style="left:689.5px;top:258.85px;font-size:6.4px;color:#2a7fd0;font-weight:normal;">m/s2</div>
<div class="t" style="left:580px;top:267.95px;font-size:6.4px;color:#eea100;font-weight:bold;">A2</div>
<div class="t" style="left:603.5px;top:267.95px;font-size:6.4px;color:#eea100;font-weight:bold;">AMA_Y</div>
<div class="t" style="right:596.5px;top:267.95px;font-size:6.4px;color:#eea100;font-weight:bold;">0.00</div>
<div class="t" style="left:689.5px;top:267.95px;font-size:6.4px;color:#eea100;font-weight:bold;">m/s2</div>
<div class="t" style="left:580px;top:277.05px;font-size:6.4px;color:#20a477;font-weight:normal;">A3</div>
<div class="t" style="left:603.5px;top:277.05px;font-size:6.4px;color:#20a477;font-weight:normal;">AMA_Z</div>
<div class="t" style="right:596.5px;top:277.05px;font-size:6.4px;color:#20a477;font-weight:normal;">9.72</div>
<div class="t" style="left:689.5px;top:277.05px;font-size:6.4px;color:#20a477;font-weight:normal;">m/s2</div>
<div style="left:199px;top:448.5px;width:516px;height:1.6px;background:#8a8a8a"></div>
<div style="left:714px;top:227px;width:1.6px;height:444px;background:#7a7a7a"></div>
<svg style="left:0;top:0" width="1284" height="856"><path d="M275.3 457.9V652.4" stroke="#f8d4d4" stroke-width="0.7"/><path d="M337.8 457.9V652.4" stroke="#d9dcf7" stroke-width="0.7"/><path d="M400.3 457.9V652.4" stroke="#f8d4d4" stroke-width="0.7"/><path d="M462.8 457.9V652.4" stroke="#d9dcf7" stroke-width="0.7"/><path d="M525.3 457.9V652.4" stroke="#f8d4d4" stroke-width="0.7"/><path d="M587.8 457.9V652.4" stroke="#d9dcf7" stroke-width="0.7"/><path d="M650.3 457.9V652.4" stroke="#f8d4d4" stroke-width="0.7"/><path d="M212.8 482.2H712.8" stroke="#d4d4d4" stroke-width="0.7"/><path d="M212.8 506.5H712.8" stroke="#d4d4d4" stroke-width="0.7"/><path d="M212.8 530.8H712.8" stroke="#d4d4d4" stroke-width="0.7"/><path d="M212.8 555.1H712.8" stroke="#d4d4d4" stroke-width="0.7"/><path d="M212.8 579.5H712.8" stroke="#d4d4d4" stroke-width="0.7"/><path d="M212.8 603.8H712.8" stroke="#d4d4d4" stroke-width="0.7"/><path d="M212.8 628.1H712.8" stroke="#d4d4d4" stroke-width="0.7"/><path d="M714.3 457.9H212.8V652.4H714.3" fill="none" stroke="#bbb" stroke-width="0.8"/><path d="M213.8,481.7 214.3,480.9 214.8,481.0 215.3,481.4 215.8,481.5 216.3,481.4 216.8,481.4 217.3,481.7 217.8,481.3 218.3,480.6 218.8,480.8 219.3,481.6 219.8,481.3 220.3,481.6 220.8,481.5 221.3,481.4 221.8,481.2 222.3,481.6 222.8,481.6 223.3,481.3 223.8,481.2 224.3,480.8 224.8,481.5 225.3,481.3 225.8,480.5 226.3,481.2 226.8,481.4 227.3,481.0 227.8,480.8 228.3,481.7 228.8,481.2 229.3,481.6 229.8,481.3 230.3,481.5 230.8,481.3 231.3,481.5 231.8,481.4 232.3,481.1 232.8,481.6 233.3,481.2 233.8,481.5 234.3,481.6 234.8,481.0 235.3,480.9 235.8,481.3 236.3,481.2 236.8,480.7 237.3,481.6 237.8,481.4 238.3,481.3 238.8,480.9 239.3,481.2 239.8,481.3 240.3,481.5 240.8,481.1 241.3,480.9 241.8,481.3 242.3,481.3 242.8,480.6 243.3,481.5 243.8,481.5 244.3,481.2 244.8,481.4 245.3,481.7 245.8,481.5 246.3,481.2 246.8,481.3 247.3,481.6 247.8,481.4 248.3,481.4 248.8,481.0 249.3,481.3 249.8,481.6 250.3,481.3 250.8,480.9 251.3,480.6 251.8,480.8 252.3,481.2 252.8,481.4 253.3,481.6 253.8,481.1 254.3,480.9 254.8,480.9 255.3,481.4 255.8,480.9 256.3,480.7 256.8,481.5 257.3,480.9 257.8,481.6 258.3,480.8 258.8,480.5 259.3,480.6 259.8,481.4 260.3,481.3 260.8,480.8 261.3,481.4 261.8,481.3 262.3,481.5 262.8,481.7 263.3,481.6 263.8,481.3 264.3,481.5 264.8,481.5 265.3,481.6 265.8,481.6 266.3,480.9 266.8,481.4 267.3,481.0 267.8,481.6 268.3,480.8 268.8,480.9 269.3,481.4 269.8,480.4 270.3,481.7 270.8,481.4 271.3,480.8 271.8,480.9 272.3,480.2 272.8,481.2 273.3,481.3 273.8,481.3 274.3,481.2 274.8,481.5 275.3,481.5 275.8,481.6 276.3,481.0 276.8,481.7 277.3,481.1 277.8,481.4 278.3,481.5 278.8,480.4 279.3,480.8 279.8,481.2 280.3,481.3 280.8,481.4 281.3,481.4 281.8,480.9 282.3,481.2 282.8,481.1 283.3,481.6 283.8,481.3 284.3,481.3 284.8,481.4 285.3,481.0 285.8,481.4 286.3,481.6 286.8,481.5 287.3,481.5 287.8,480.5 288.3,481.7 288.8,481.6 289.3,481.0 289.8,481.4 290.3,481.3 290.8,481.3 291.3,480.5 291.8,481.2 292.3,480.6 292.8,480.4 293.3,481.2 293.8,481.5 294.3,481.4 294.8,481.4 295.3,481.4 295.8,481.6 296.3,481.6 296.8,480.8 297.3,481.6 297.8,481.3 298.3,481.6 298.8,481.4 299.3,481.3 299.8,481.2 300.3,481.5 300.8,481.5 301.3,481.6 301.8,481.4 302.3,481.6 302.8,481.4 303.3,481.5 303.8,481.7 304.3,481.4 304.8,480.9 305.3,481.2 305.8,481.2 306.3,481.3 306.8,481.6 307.3,481.4 307.8,481.5 308.3,481.4 308.8,481.1 309.3,481.2 309.8,480.9 310.3,481.7 310.8,481.0 311.3,481.7 311.8,480.8 312.3,480.6 312.8,480.8 313.3,481.4 313.8,481.4 314.3,480.8 314.8,481.5 315.3,481.1 315.8,481.4 316.3,481.5 316.8,481.1 317.3,481.6 317.8,481.5 318.3,481.6 318.8,481.3 319.3,481.1 319.8,481.2 320.3,481.4 320.8,481.0 321.3,481.5 321.8,480.7 322.3,481.1 322.8,481.4 323.3,481.3 323.8,481.4 324.3,481.6 324.8,481.6 325.3,480.3 325.8,481.6 326.3,481.1 326.8,481.3 327.3,480.8 327.8,480.8 328.3,481.1 328.8,481.2 329.3,480.7 329.8,481.7 330.3,481.0 330.8,481.5 331.3,480.6 331.8,481.6 332.3,481.4 332.8,481.4 333.3,481.5 333.8,481.4 334.3,481.2 334.8,480.8 335.3,481.6 335.8,481.6 336.3,481.5 336.8,481.1 337.3,480.7 337.8,481.5 338.3,481.3 338.8,481.1 339.3,481.3 339.8,481.1 340.3,481.5 340.8,481.3 341.3,480.5 341.8,481.2 342.3,481.3 342.8,481.3 343.3,480.9 343.8,481.5 344.3,481.4 344.8,480.8 345.3,481.0 345.8,481.4 346.3,481.7 346.8,481.0 347.3,481.0 347.8,481.5 348.3,481.0 348.8,481.3 349.3,481.4 349.8,480.6 350.3,481.3 350.8,481.5 351.3,481.3 351.8,481.6 352.3,481.7 352.8,481.4 353.3,481.6 353.8,481.0 354.3,481.6 354.8,481.5 355.3,481.4 355.8,481.1 356.3,481.3 356.8,480.8 357.3,481.5 357.8,481.5 358.3,481.5 358.8,481.4 359.3,481.5 359.8,481.3 360.3,481.5 360.8,480.8 361.3,480.9 361.8,481.4 362.3,480.8 362.8,481.6 363.3,481.5 363.8,481.6 364.3,481.0 364.8,481.5 365.3,479.5 365.8,480.9 366.3,481.5 366.8,481.5 367.3,481.6 367.8,480.6 368.3,481.0 368.8,481.4 369.3,481.7 369.8,480.7 370.3,481.3 370.8,481.6 371.3,480.0 371.8,481.2 372.3,481.2 372.8,481.7 373.3,481.7 373.8,481.2 374.3,481.6 374.8,481.2 375.3,481.6 375.8,480.1 376.3,480.9 376.8,480.0 377.3,481.6 377.8,481.2 378.3,481.3 378.8,481.6 379.3,480.5 379.8,481.1 380.3,481.2 380.8,481.6 381.3,481.7 381.8,481.5 382.3,480.9 382.8,481.4 383.3,481.5 383.8,480.9 384.3,481.6 384.8,481.7 385.3,481.2 385.8,481.4 386.3,481.3 386.8,480.0 387.3,481.1 387.8,481.4 388.3,481.6 388.8,481.1 389.3,481.4 389.8,481.5 390.3,480.2 390.8,481.6 391.3,481.4 391.8,480.7 392.3,480.6 392.8,480.8 393.3,481.0 393.8,480.4 394.3,481.4 394.8,481.7 395.3,481.1 395.8,481.6 396.3,481.6 396.8,480.8 397.3,481.4 397.8,481.4 398.3,481.5 398.8,481.4 399.3,481.6 399.8,481.5 400.3,481.7 400.8,481.2 401.3,481.4 401.8,481.4 402.3,481.3 402.8,480.7 403.3,481.6 403.8,481.1 404.3,481.5 404.8,481.4 405.3,481.3 405.8,481.6 406.3,481.5 406.8,481.3 407.3,480.9 407.8,481.3 408.3,481.6 408.8,480.7 409.3,480.3 409.8,481.4 410.3,481.4 410.8,481.4 411.3,481.4 411.8,481.5 412.3,480.8 412.8,481.5 413.3,481.4 413.8,481.5 414.3,481.2 414.8,481.4 415.3,481.6 415.8,481.2 416.3,481.7 416.8,481.6 417.3,481.2 417.8,481.7 418.3,481.4 418.8,480.8 419.3,481.1 419.8,480.9 420.3,481.3 420.8,481.6 421.3,481.4 421.8,481.5 422.3,481.1 422.8,481.6 423.3,480.8 423.8,481.7 424.3,480.9 424.8,481.6 425.3,481.0 425.8,480.9 426.3,481.6 426.8,481.7 427.3,480.7 427.8,481.3 428.3,480.4 428.8,480.8 429.3,480.6 429.8,481.3 430.3,481.4 430.8,481.6 431.3,480.8 431.8,480.9 432.3,481.4 432.8,481.2 433.3,481.5 433.8,480.8 434.3,481.5 434.8,481.1 435.3,480.7 435.8,481.4 436.3,481.6 436.8,481.1 437.3,480.9 437.8,481.4 438.3,481.3 438.8,481.4 439.3,481.5 439.8,481.5 440.3,481.1 440.8,480.7 441.3,481.5 441.8,481.6 442.3,481.4 442.8,480.6 443.3,481.7 443.8,481.1 444.3,480.3 444.8,481.3 445.3,481.6 445.8,481.6 446.3,480.2 446.8,481.3 447.3,480.7 447.8,481.3 448.3,481.3 448.8,481.3 449.3,480.8 449.8,481.1 450.3,480.9 450.8,481.6 451.3,481.7 451.8,481.2 452.3,480.8 452.8,481.6 453.3,481.1 453.8,481.0 454.3,481.1 454.8,481.4 455.3,480.5 455.8,481.6 456.3,481.1 456.8,481.5 457.3,481.0 457.8,481.1 458.3,481.3 458.8,481.5 459.3,481.3 459.8,481.5 460.3,481.0 460.8,481.6 461.3,481.5 461.8,480.9 462.3,481.0 462.8,481.3 463.3,481.5 463.8,481.6 464.3,481.1 464.8,481.1 465.3,481.2 465.8,481.5 466.3,481.5 466.8,481.3 467.3,481.3 467.8,481.2 468.3,481.6 468.8,481.1 469.3,481.5 469.8,481.6 470.3,481.4 470.8,481.7 471.3,481.2 471.8,480.9 472.3,480.8 472.8,481.2 473.3,481.6 473.8,480.9 474.3,481.3 474.8,480.9 475.3,481.1 475.8,481.2 476.3,480.8 476.8,481.2 477.3,481.4 477.8,481.1 478.3,481.0 478.8,481.6 479.3,481.7 479.8,481.4 480.3,481.1 480.8,481.2 481.3,481.2 481.8,481.4 482.3,481.5 482.8,481.4 483.3,481.1 483.8,480.9 484.3,481.4 484.8,481.6 485.3,480.9 485.8,481.4 486.3,481.1 486.8,481.0 487.3,481.1 487.8,481.7 488.3,481.6 488.8,481.1 489.3,481.5 489.8,481.5 490.3,480.9 490.8,481.5 491.3,481.3 491.8,481.7 492.3,481.3 492.8,481.4 493.3,481.6 493.8,481.4 494.3,480.7 494.8,481.2 495.3,481.6 495.8,481.1 496.3,480.9 496.8,481.0 497.3,481.1 497.8,481.6 498.3,481.1 498.8,481.6 499.3,480.7 499.8,481.6 500.3,480.9 500.8,481.5 501.3,481.0 501.8,481.5 502.3,481.1 502.8,481.2 503.3,481.0 503.8,480.9 504.3,481.4 504.8,480.5 505.3,481.2 505.8,480.8 506.3,481.2 506.8,481.1 507.3,480.6 507.8,481.5 508.3,480.7 508.8,481.4 509.3,480.6 509.8,480.1 510.3,481.5 510.8,480.3 511.3,481.3 511.8,481.2 512.3,481.6 512.8,481.5 513.3,481.3 513.8,480.7 514.3,481.0 514.8,481.4 515.3,481.5 515.8,480.8 516.3,480.7 516.8,480.5 517.3,481.1 517.8,480.7 518.3,481.7 518.8,481.6 519.3,480.8 519.8,481.6 520.3,481.5 520.8,480.8 521.3,480.9 521.8,481.2 522.3,480.9 522.8,480.8 523.3,481.0 523.8,481.1 524.3,481.6 524.8,481.1 525.3,481.6 525.8,480.9 526.3,480.7 526.8,481.1 527.3,481.6 527.8,481.6 528.3,481.0 528.8,480.8 529.3,481.7 529.8,481.6 530.3,481.4 530.8,481.4 531.3,481.4 531.8,481.6 532.3,481.5 532.8,481.4 533.3,481.6 533.8,481.3 534.3,481.7 534.8,481.5 535.3,480.3 535.8,481.4 536.3,481.5 536.8,480.8 537.3,480.5 537.8,480.7 538.3,481.0 538.8,481.6 539.3,480.2 539.8,481.5 540.3,481.0 540.8,481.6 541.3,480.2 541.8,480.3 542.3,481.1 542.8,481.6 543.3,480.9 543.8,481.0 544.3,480.8 544.8,481.0 545.3,480.8 545.8,481.2 546.3,481.0 546.8,481.2 547.3,481.0 547.8,481.2 548.3,481.0 548.8,481.2 549.3,481.6 549.8,481.4 550.3,481.2 550.8,481.6 551.3,480.6 551.8,481.5 552.3,481.5 552.8,481.3 553.3,480.9 553.8,480.7 554.3,481.5 554.8,481.0 555.3,480.9 555.8,480.7 556.3,481.6 556.8,481.2 557.3,481.7 557.8,481.3 558.3,481.5 558.8,480.8 559.3,481.5 559.8,481.6 560.3,481.5 560.8,481.7 561.3,481.2 561.8,481.2 562.3,481.5 562.8,481.6 563.3,480.3 563.8,481.4 564.3,481.6 564.8,480.5 565.3,481.7 565.8,481.0 566.3,481.3 566.8,481.2 567.3,481.4 567.8,481.5 568.3,481.6 568.8,481.2 569.3,481.4 569.8,481.3 570.3,481.0 570.8,481.3 571.3,481.4 571.8,480.5 572.3,481.4 572.8,480.8 573.3,480.9 573.8,481.6 574.3,480.8 574.8,481.4 575.3,481.3 575.8,481.1 576.3,481.7 576.8,481.0 577.3,480.9 577.8,481.1 578.3,480.8 578.8,481.6 579.3,481.4 579.8,481.5 580.3,480.6 580.8,481.1 581.3,480.6 581.8,481.6 582.3,481.6 582.8,481.6 583.3,481.4 583.8,480.8 584.3,481.2 584.8,481.1 585.3,481.5 585.8,481.3 586.3,481.3 586.8,481.3 587.3,481.5 587.8,481.3 588.3,481.1 588.8,481.4 589.3,481.1 589.8,481.6 590.3,481.6 590.8,481.5 591.3,481.5 591.8,481.6 592.3,480.6 592.8,480.7 593.3,481.2 593.8,481.4 594.3,480.9 594.8,481.6 595.3,481.7 595.8,481.4 596.3,480.8 596.8,481.6 597.3,481.0 597.8,481.2 598.3,480.9 598.8,481.0 599.3,481.3 599.8,481.4 600.3,481.7 600.8,481.3 601.3,481.3 601.8,481.1 602.3,480.6 602.8,481.0 603.3,481.1 603.8,480.8 604.3,481.5 604.8,481.3 605.3,480.5 605.8,480.2 606.3,481.2 606.8,480.9 607.3,481.0 607.8,481.0 608.3,481.0 608.8,480.8 609.3,481.1 609.8,481.0 610.3,481.5 610.8,481.2 611.3,481.7 611.8,481.0 612.3,480.9 612.8,481.5 613.3,480.9 613.8,480.4 614.3,480.6 614.8,481.1 615.3,481.6 615.8,481.3 616.3,480.4 616.8,481.5 617.3,480.9 617.8,480.9 618.3,481.3 618.8,481.5 619.3,481.4 619.8,481.3 620.3,481.5 620.8,481.1 621.3,481.3 621.8,481.6 622.3,481.0 622.8,481.1 623.3,480.0 623.8,481.4 624.3,480.4 624.8,481.4 625.3,481.6 625.8,481.2 626.3,481.4 626.8,481.4 627.3,481.4 627.8,481.7 628.3,481.6 628.8,481.3 629.3,481.0 629.8,481.6 630.3,481.1 630.8,481.3 631.3,481.4 631.8,481.4 632.3,480.1 632.8,481.5 633.3,481.1 633.8,480.5 634.3,481.7 634.8,481.5 635.3,481.1 635.8,480.7 636.3,481.5 636.8,481.5 637.3,481.6 637.8,481.0 638.3,481.0 638.8,481.5 639.3,480.7 639.8,481.6 640.3,480.7 640.8,481.1 641.3,481.7 641.8,481.1 642.3,481.1 642.8,480.8 643.3,481.5 643.8,481.4 644.3,480.8 644.8,481.1 645.3,481.6 645.8,481.6 646.3,481.7 646.8,481.0 647.3,481.3 647.8,481.4 648.3,481.6 648.8,481.5 649.3,481.5 649.8,480.4 650.3,481.3 650.8,481.5 651.3,481.5 651.8,481.3 652.3,481.4 652.8,481.4 653.3,481.1 653.8,480.8 654.3,481.7 654.8,481.0 655.3,481.6 655.8,481.0 656.3,481.1 656.8,481.7 657.3,480.9 657.8,481.3 658.3,481.5 658.8,480.9 659.3,481.1 659.8,480.5 660.3,481.5 660.8,481.5 661.3,481.0 661.8,480.4 662.3,480.9 662.8,480.2 663.3,480.8 663.8,481.2 664.3,481.5 664.8,480.2 664.8,483.6 664.3,483.9 663.8,484.5 663.3,483.7 662.8,483.8 662.3,484.2 661.8,484.1 661.3,483.7 660.8,483.5 660.3,483.5 659.8,484.1 659.3,483.9 658.8,484.4 658.3,483.8 657.8,484.0 657.3,484.0 656.8,484.1 656.3,484.4 655.8,484.4 655.3,483.8 654.8,483.5 654.3,483.8 653.8,483.9 653.3,483.7 652.8,483.9 652.3,483.9 651.8,483.6 651.3,483.7 650.8,484.4 650.3,483.8 649.8,483.5 649.3,485.0 648.8,484.7 648.3,484.0 647.8,483.6 647.3,484.1 646.8,484.6 646.3,484.2 645.8,484.3 645.3,484.0 644.8,484.0 644.3,484.0 643.8,484.1 643.3,483.6 642.8,484.2 642.3,484.5 641.8,484.7 641.3,484.0 640.8,483.7 640.3,483.6 639.8,483.7 639.3,484.6 638.8,484.1 638.3,484.2 637.8,484.4 637.3,483.8 636.8,483.7 636.3,484.4 635.8,483.9 635.3,483.8 634.8,483.6 634.3,484.2 633.8,483.7 633.3,483.8 632.8,484.3 632.3,484.2 631.8,483.8 631.3,483.7 630.8,483.8 630.3,484.1 629.8,483.7 629.3,483.6 628.8,484.8 628.3,484.2 627.8,483.6 627.3,484.1 626.8,483.6 626.3,484.1 625.8,483.6 625.3,483.6 624.8,484.3 624.3,485.3 623.8,484.1 623.3,483.5 622.8,483.7 622.3,483.6 621.8,483.5 621.3,483.9 620.8,484.0 620.3,484.1 619.8,483.7 619.3,484.0 618.8,484.1 618.3,483.8 617.8,483.7 617.3,484.2 616.8,483.6 616.3,484.7 615.8,484.2 615.3,483.7 614.8,483.6 614.3,483.7 613.8,484.1 613.3,484.2 612.8,483.8 612.3,484.3 611.8,484.1 611.3,484.5 610.8,483.7 610.3,484.5 609.8,483.6 609.3,484.2 608.8,484.2 608.3,483.8 607.8,484.1 607.3,484.5 606.8,484.2 606.3,484.1 605.8,483.9 605.3,483.6 604.8,483.6 604.3,484.5 603.8,483.6 603.3,483.7 602.8,483.5 602.3,483.9 601.8,483.9 601.3,483.6 600.8,483.7 600.3,483.8 599.8,483.9 599.3,484.4 598.8,483.8 598.3,484.0 597.8,484.3 597.3,484.3 596.8,484.8 596.3,483.8 595.8,483.6 595.3,483.6 594.8,484.0 594.3,484.4 593.8,484.1 593.3,483.5 592.8,483.6 592.3,483.5 591.8,483.8 591.3,483.8 590.8,483.9 590.3,484.3 589.8,483.6 589.3,484.5 588.8,483.8 588.3,483.8 587.8,483.5 587.3,484.4 586.8,483.8 586.3,484.4 585.8,483.8 585.3,484.1 584.8,485.2 584.3,484.1 583.8,483.5 583.3,483.6 582.8,483.5 582.3,483.8 581.8,484.5 581.3,484.3 580.8,483.9 580.3,483.8 579.8,484.2 579.3,484.1 578.8,483.6 578.3,483.6 577.8,483.6 577.3,483.9 576.8,483.9 576.3,484.1 575.8,483.7 575.3,483.9 574.8,483.7 574.3,484.3 573.8,484.1 573.3,484.7 572.8,484.4 572.3,483.6 571.8,484.0 571.3,483.8 570.8,483.6 570.3,484.1 569.8,484.1 569.3,483.8 568.8,484.2 568.3,483.6 567.8,483.7 567.3,484.5 566.8,483.7 566.3,483.7 565.8,484.2 565.3,484.3 564.8,484.1 564.3,483.9 563.8,483.9 563.3,483.7 562.8,483.7 562.3,483.5 561.8,484.6 561.3,483.9 560.8,484.2 560.3,484.2 559.8,483.8 559.3,484.5 558.8,484.1 558.3,484.3 557.8,483.7 557.3,484.6 556.8,483.9 556.3,484.2 555.8,484.5 555.3,484.6 554.8,484.2 554.3,483.8 553.8,484.3 553.3,483.8 552.8,484.2 552.3,483.8 551.8,483.9 551.3,484.4 550.8,483.8 550.3,483.8 549.8,483.7 549.3,483.8 548.8,483.8 548.3,483.7 547.8,483.9 547.3,483.7 546.8,484.4 546.3,483.5 545.8,484.6 545.3,483.7 544.8,484.1 544.3,483.5 543.8,483.5 543.3,483.5 542.8,483.6 542.3,483.9 541.8,484.2 541.3,483.7 540.8,483.7 540.3,483.7 539.8,483.8 539.3,484.4 538.8,483.6 538.3,483.6 537.8,483.7 537.3,483.8 536.8,483.7 536.3,483.8 535.8,484.0 535.3,484.1 534.8,483.6 534.3,483.8 533.8,483.6 533.3,484.1 532.8,483.9 532.3,484.1 531.8,484.5 531.3,483.6 530.8,484.4 530.3,484.2 529.8,483.6 529.3,483.7 528.8,483.6 528.3,483.7 527.8,484.0 527.3,483.8 526.8,484.0 526.3,484.2 525.8,484.0 525.3,483.6 524.8,484.1 524.3,484.0 523.8,485.1 523.3,483.6 522.8,483.9 522.3,484.0 521.8,483.7 521.3,484.2 520.8,483.6 520.3,484.2 519.8,483.8 519.3,483.9 518.8,483.5 518.3,484.0 517.8,483.8 517.3,483.8 516.8,483.5 516.3,484.0 515.8,483.5 515.3,484.6 514.8,483.6 514.3,483.5 513.8,484.0 513.3,483.7 512.8,483.7 512.3,483.8 511.8,483.8 511.3,483.6 510.8,483.8 510.3,483.8 509.8,483.8 509.3,484.1 508.8,483.6 508.3,484.2 507.8,483.9 507.3,484.3 506.8,484.6 506.3,483.6 505.8,483.5 505.3,484.5 504.8,483.9 504.3,483.9 503.8,483.7 503.3,483.6 502.8,483.7 502.3,483.9 501.8,484.0 501.3,484.1 500.8,484.2 500.3,484.2 499.8,484.6 499.3,484.2 498.8,484.0 498.3,484.0 497.8,484.4 497.3,483.9 496.8,483.9 496.3,484.2 495.8,484.2 495.3,483.7 494.8,484.1 494.3,484.0 493.8,483.8 493.3,484.1 492.8,483.8 492.3,484.3 491.8,483.7 491.3,483.6 490.8,484.2 490.3,484.0 489.8,483.7 489.3,483.7 488.8,483.6 488.3,484.6 487.8,483.8 487.3,483.9 486.8,483.5 486.3,483.7 485.8,484.3 485.3,484.1 484.8,483.6 484.3,483.9 483.8,483.7 483.3,483.8 482.8,484.0 482.3,484.0 481.8,484.3 481.3,485.3 480.8,483.8 480.3,484.5 479.8,483.7 479.3,483.6 478.8,484.1 478.3,484.5 477.8,484.0 477.3,484.4 476.8,484.9 476.3,483.9 475.8,484.0 475.3,484.5 474.8,483.8 474.3,484.2 473.8,484.3 473.3,483.7 472.8,484.4 472.3,483.9 471.8,483.7 471.3,484.2 470.8,483.8 470.3,484.6 469.8,484.2 469.3,483.8 468.8,484.1 468.3,484.4 467.8,483.8 467.3,483.8 466.8,483.8 466.3,483.9 465.8,484.2 465.3,484.0 464.8,484.1 464.3,483.8 463.8,483.7 463.3,484.1 462.8,483.8 462.3,483.6 461.8,483.6 461.3,483.7 460.8,484.1 460.3,483.9 459.8,483.7 459.3,484.3 458.8,483.6 458.3,483.7 457.8,483.9 457.3,483.9 456.8,484.0 456.3,484.2 455.8,483.5 455.3,484.2 454.8,484.5 454.3,484.2 453.8,483.6 453.3,483.7 452.8,484.2 452.3,484.5 451.8,484.2 451.3,484.4 450.8,484.3 450.3,484.5 449.8,483.9 449.3,483.7 448.8,484.1 448.3,483.7 447.8,484.1 447.3,484.2 446.8,483.5 446.3,484.1 445.8,484.2 445.3,483.8 444.8,484.5 444.3,483.9 443.8,484.1 443.3,484.8 442.8,484.5 442.3,483.5 441.8,484.4 441.3,483.9 440.8,484.4 440.3,483.9 439.8,483.9 439.3,484.6 438.8,483.7 438.3,483.6 437.8,483.8 437.3,484.2 436.8,484.3 436.3,483.7 435.8,485.4 435.3,484.0 434.8,484.3 434.3,484.0 433.8,483.9 433.3,484.2 432.8,484.5 432.3,483.6 431.8,483.7 431.3,483.7 430.8,484.4 430.3,484.0 429.8,484.7 429.3,483.8 428.8,483.6 428.3,483.7 427.8,483.8 427.3,483.6 426.8,483.9 426.3,484.0 425.8,484.6 425.3,484.0 424.8,483.8 424.3,483.5 423.8,483.9 423.3,484.2 422.8,483.6 422.3,483.6 421.8,484.8 421.3,484.0 420.8,483.6 420.3,483.7 419.8,484.1 419.3,484.1 418.8,483.6 418.3,484.2 417.8,484.6 417.3,483.7 416.8,483.7 416.3,484.0 415.8,484.1 415.3,483.5 414.8,483.6 414.3,484.6 413.8,483.8 413.3,484.2 412.8,483.6 412.3,485.1 411.8,484.0 411.3,483.6 410.8,483.8 410.3,484.5 409.8,483.5 409.3,484.4 408.8,484.1 408.3,483.5 407.8,483.6 407.3,484.0 406.8,483.6 406.3,484.1 405.8,484.6 405.3,483.7 404.8,483.6 404.3,483.6 403.8,484.8 403.3,484.0 402.8,483.6 402.3,484.4 401.8,484.0 401.3,483.7 400.8,483.5 400.3,484.0 399.8,484.0 399.3,483.9 398.8,483.7 398.3,483.7 397.8,483.5 397.3,483.7 396.8,484.0 396.3,484.8 395.8,483.8 395.3,483.6 394.8,483.6 394.3,484.0 393.8,483.8 393.3,484.0 392.8,483.9 392.3,483.7 391.8,484.4 391.3,484.4 390.8,483.5 390.3,483.5 389.8,484.7 389.3,484.3 388.8,483.9 388.3,484.3 387.8,483.6 387.3,483.8 386.8,484.0 386.3,483.8 385.8,483.5 385.3,483.7 384.8,483.7 384.3,484.3 383.8,483.9 383.3,483.9 382.8,484.2 382.3,483.5 381.8,484.0 381.3,483.8 380.8,483.5 380.3,483.8 379.8,484.6 379.3,484.7 378.8,483.9 378.3,484.9 377.8,483.6 377.3,484.0 376.8,484.2 376.3,484.0 375.8,484.2 375.3,483.9 374.8,484.3 374.3,483.7 373.8,483.9 373.3,483.7 372.8,483.8 372.3,484.0 371.8,483.9 371.3,483.8 370.8,483.8 370.3,483.7 369.8,483.5 369.3,484.2 368.8,483.5 368.3,484.4 367.8,483.7 367.3,483.7 366.8,485.0 366.3,484.1 365.8,483.8 365.3,483.9 364.8,483.8 364.3,485.0 363.8,484.2 363.3,483.6 362.8,484.2 362.3,484.1 361.8,483.7 361.3,483.9 360.8,483.6 360.3,484.4 359.8,483.9 359.3,484.6 358.8,483.7 358.3,483.7 357.8,483.9 357.3,483.7 356.8,483.6 356.3,483.7 355.8,484.0 355.3,483.7 354.8,485.1 354.3,484.3 353.8,483.7 353.3,484.5 352.8,484.3 352.3,484.0 351.8,484.0 351.3,483.8 350.8,483.8 350.3,484.7 349.8,483.8 349.3,484.5 348.8,484.0 348.3,484.3 347.8,484.0 347.3,483.6 346.8,484.7 346.3,483.7 345.8,483.5 345.3,484.2 344.8,483.9 344.3,483.6 343.8,484.0 343.3,483.6 342.8,483.8 342.3,484.4 341.8,484.0 341.3,484.2 340.8,484.4 340.3,483.5 339.8,483.6 339.3,483.5 338.8,483.8 338.3,483.8 337.8,484.5 337.3,483.7 336.8,484.7 336.3,483.8 335.8,483.8 335.3,483.6 334.8,483.7 334.3,483.6 333.8,483.8 333.3,483.8 332.8,483.9 332.3,483.8 331.8,483.9 331.3,484.0 330.8,484.3 330.3,484.1 329.8,484.3 329.3,484.4 328.8,485.0 328.3,483.9 327.8,484.3 327.3,483.7 326.8,483.6 326.3,485.4 325.8,483.5 325.3,484.1 324.8,483.7 324.3,483.7 323.8,484.1 323.3,483.7 322.8,483.7 322.3,483.7 321.8,484.4 321.3,484.3 320.8,483.6 320.3,484.0 319.8,483.8 319.3,483.6 318.8,483.9 318.3,484.0 317.8,483.5 317.3,483.9 316.8,483.6 316.3,484.2 315.8,483.6 315.3,483.9 314.8,483.8 314.3,484.1 313.8,483.7 313.3,484.1 312.8,483.6 312.3,483.7 311.8,483.6 311.3,483.7 310.8,484.1 310.3,483.9 309.8,484.1 309.3,483.9 308.8,484.5 308.3,483.8 307.8,483.6 307.3,483.6 306.8,483.5 306.3,484.3 305.8,483.6 305.3,483.6 304.8,483.7 304.3,483.6 303.8,484.1 303.3,484.7 302.8,483.8 302.3,483.9 301.8,483.9 301.3,483.9 300.8,484.4 300.3,483.7 299.8,483.8 299.3,483.7 298.8,483.6 298.3,484.1 297.8,485.2 297.3,483.7 296.8,484.3 296.3,484.0 295.8,483.8 295.3,483.7 294.8,483.9 294.3,483.7 293.8,484.4 293.3,484.6 292.8,484.6 292.3,483.8 291.8,483.5 291.3,483.6 290.8,483.6 290.3,483.6 289.8,484.1 289.3,483.7 288.8,483.8 288.3,484.8 287.8,483.6 287.3,483.7 286.8,483.9 286.3,483.6 285.8,483.6 285.3,483.9 284.8,483.6 284.3,483.5 283.8,483.6 283.3,483.5 282.8,483.6 282.3,484.4 281.8,483.8 281.3,483.8 280.8,483.6 280.3,484.2 279.8,484.2 279.3,483.8 278.8,484.4 278.3,484.4 277.8,484.3 277.3,484.2 276.8,483.8 276.3,484.1 275.8,483.5 275.3,484.4 274.8,483.7 274.3,484.3 273.8,484.1 273.3,484.9 272.8,483.6 272.3,484.0 271.8,483.6 271.3,484.0 270.8,483.7 270.3,485.2 269.8,484.3 269.3,484.3 268.8,484.5 268.3,483.5 267.8,484.0 267.3,484.9 266.8,485.5 266.3,484.6 265.8,483.5 265.3,483.7 264.8,483.6 264.3,483.8 263.8,483.8 263.3,483.7 262.8,484.1 262.3,483.6 261.8,483.7 261.3,484.9 260.8,483.5 260.3,483.5 259.8,483.6 259.3,484.0 258.8,484.2 258.3,483.6 257.8,483.7 257.3,483.9 256.8,483.7 256.3,483.9 255.8,485.1 255.3,484.7 254.8,483.7 254.3,483.8 253.8,483.9 253.3,484.1 252.8,484.6 252.3,484.3 251.8,483.6 251.3,483.8 250.8,483.7 250.3,483.6 249.8,484.3 249.3,483.8 248.8,483.6 248.3,484.2 247.8,483.6 247.3,483.6 246.8,484.8 246.3,484.6 245.8,484.1 245.3,484.1 244.8,483.5 244.3,484.4 243.8,483.9 243.3,483.6 242.8,484.3 242.3,483.9 241.8,483.8 241.3,484.3 240.8,483.6 240.3,483.8 239.8,484.1 239.3,483.6 238.8,484.0 238.3,484.3 237.8,484.4 237.3,483.7 236.8,483.5 236.3,484.0 235.8,484.1 235.3,483.7 234.8,484.3 234.3,483.9 233.8,484.2 233.3,484.0 232.8,484.0 232.3,484.4 231.8,483.8 231.3,483.6 230.8,484.0 230.3,484.3 229.8,483.6 229.3,483.6 228.8,484.1 228.3,484.0 227.8,484.1 227.3,484.0 226.8,484.0 226.3,483.9 225.8,483.6 225.3,484.0 224.8,484.8 224.3,484.4 223.8,483.9 223.3,483.6 222.8,484.2 222.3,484.8 221.8,483.9 221.3,483.5 220.8,484.0 220.3,483.7 219.8,484.4 219.3,484.0 218.8,484.1 218.3,484.3 217.8,484.1 217.3,483.7 216.8,483.7 216.3,483.6 215.8,483.8 215.3,484.3 214.8,483.6 214.3,483.8 213.8,483.6z" fill="#1f6fb8"/><path d="M562.8 463V493M218.5 479.5V486M223 479.5V486M664.5 479V486" stroke="#1f6fb8" stroke-width="0.9"/><path d="M213.8,530.2 214.3,529.6 214.8,529.8 215.3,529.8 215.8,529.3 216.3,529.5 216.8,529.9 217.3,529.5 217.8,530.2 218.3,529.7 218.8,530.2 219.3,530.0 219.8,529.1 220.3,530.2 220.8,529.7 221.3,529.2 221.8,529.7 222.3,529.7 222.8,530.2 223.3,529.9 223.8,529.9 224.3,530.0 224.8,530.0 225.3,530.2 225.8,529.9 226.3,529.9 226.8,530.1 227.3,529.8 227.8,529.8 228.3,529.3 228.8,529.8 229.3,529.9 229.8,529.9 230.3,529.4 230.8,530.2 231.3,530.1 231.8,530.1 232.3,529.9 232.8,530.2 233.3,529.2 233.8,530.0 234.3,529.9 234.8,529.7 235.3,530.2 235.8,529.9 236.3,529.9 236.8,530.0 237.3,529.1 237.8,530.0 238.3,529.9 238.8,530.0 239.3,530.0 239.8,529.7 240.3,529.9 240.8,529.5 241.3,529.3 241.8,529.6 242.3,529.6 242.8,529.6 243.3,528.9 243.8,530.1 244.3,530.2 244.8,529.9 245.3,529.7 245.8,529.3 246.3,529.7 246.8,530.0 247.3,530.0 247.8,529.3 248.3,529.1 248.8,530.1 249.3,530.1 249.8,530.2 250.3,529.8 250.8,529.5 251.3,530.1 251.8,529.9 252.3,529.6 252.8,529.5 253.3,530.1 253.8,529.9 254.3,529.8 254.8,529.9 255.3,529.8 255.8,529.8 256.3,529.2 256.8,529.8 257.3,530.0 257.8,529.9 258.3,529.3 258.8,529.5 259.3,530.0 259.8,530.1 260.3,530.1 260.8,529.8 261.3,529.4 261.8,529.7 262.3,530.2 262.8,529.8 263.3,530.1 263.8,528.9 264.3,529.9 264.8,530.1 265.3,529.8 265.8,530.1 266.3,530.2 266.8,530.2 267.3,529.6 267.8,530.2 268.3,530.1 268.8,529.9 269.3,529.0 269.8,530.0 270.3,529.9 270.8,529.3 271.3,529.4 271.8,529.9 272.3,529.5 272.8,530.2 273.3,529.6 273.8,529.7 274.3,529.8 274.8,529.7 275.3,529.4 275.8,530.0 276.3,530.1 276.8,528.7 277.3,529.9 277.8,529.9 278.3,530.2 278.8,529.3 279.3,529.7 279.8,529.3 280.3,530.2 280.8,529.9 281.3,529.5 281.8,529.9 282.3,529.9 282.8,530.1 283.3,530.0 283.8,530.1 284.3,530.0 284.8,529.8 285.3,529.9 285.8,529.0 286.3,529.5 286.8,530.1 287.3,530.2 287.8,529.6 288.3,530.1 288.8,529.6 289.3,530.0 289.8,530.1 290.3,529.8 290.8,530.0 291.3,529.6 291.8,530.1 292.3,529.5 292.8,529.6 293.3,530.2 293.8,530.0 294.3,529.7 294.8,529.6 295.3,530.2 295.8,530.1 296.3,530.1 296.8,529.4 297.3,530.1 297.8,530.0 298.3,529.7 298.8,529.8 299.3,529.8 299.8,529.6 300.3,529.8 300.8,529.8 301.3,530.2 301.8,529.8 302.3,528.8 302.8,529.2 303.3,529.0 303.8,529.6 304.3,528.9 304.8,529.9 305.3,529.3 305.8,530.2 306.3,530.0 306.8,530.1 307.3,530.2 307.8,529.5 308.3,529.8 308.8,530.2 309.3,529.7 309.8,529.6 310.3,530.1 310.8,530.1 311.3,530.1 311.8,529.8 312.3,529.6 312.8,530.1 313.3,529.9 313.8,529.2 314.3,529.5 314.8,529.3 315.3,529.6 315.8,530.0 316.3,530.0 316.8,529.9 317.3,529.9 317.8,529.8 318.3,530.1 318.8,530.2 319.3,530.2 319.8,530.2 320.3,530.1 320.8,529.9 321.3,529.5 321.8,529.9 322.3,529.8 322.8,530.0 323.3,530.2 323.8,530.0 324.3,529.1 324.8,530.1 325.3,530.2 325.8,529.7 326.3,530.1 326.8,529.9 327.3,529.3 327.8,530.1 328.3,529.9 328.8,529.1 329.3,529.5 329.8,529.7 330.3,529.6 330.8,529.9 331.3,530.1 331.8,530.2 332.3,530.0 332.8,529.8 333.3,528.9 333.8,529.9 334.3,530.2 334.8,529.9 335.3,529.2 335.8,530.1 336.3,529.8 336.8,529.8 337.3,529.4 337.8,530.2 338.3,529.1 338.8,530.1 339.3,529.7 339.8,529.8 340.3,529.2 340.8,530.1 341.3,529.0 341.8,529.3 342.3,529.8 342.8,529.7 343.3,530.1 343.8,529.4 344.3,529.6 344.8,530.1 345.3,529.4 345.8,530.0 346.3,529.2 346.8,529.8 347.3,529.6 347.8,529.2 348.3,529.8 348.8,529.8 349.3,530.1 349.8,529.7 350.3,529.5 350.8,529.7 351.3,528.6 351.8,530.0 352.3,529.7 352.8,530.1 353.3,530.2 353.8,529.4 354.3,529.6 354.8,529.7 355.3,530.2 355.8,530.1 356.3,529.9 356.8,529.4 357.3,529.0 357.8,530.0 358.3,529.6 358.8,530.1 359.3,530.2 359.8,530.2 360.3,529.5 360.8,530.2 361.3,530.0 361.8,529.7 362.3,529.9 362.8,529.6 363.3,530.0 363.8,530.2 364.3,529.1 364.8,530.0 365.3,529.3 365.8,530.1 366.3,529.7 366.8,530.2 367.3,529.9 367.8,529.0 368.3,530.0 368.8,529.3 369.3,529.9 369.8,530.1 370.3,529.0 370.8,530.1 371.3,529.4 371.8,529.0 372.3,529.5 372.8,529.8 373.3,529.8 373.8,530.2 374.3,530.2 374.8,529.9 375.3,530.1 375.8,530.2 376.3,529.8 376.8,528.8 377.3,529.7 377.8,529.9 378.3,529.7 378.8,529.5 379.3,529.8 379.8,529.7 380.3,529.7 380.8,529.9 381.3,530.0 381.8,530.2 382.3,528.9 382.8,530.0 383.3,530.1 383.8,530.0 384.3,529.3 384.8,530.0 385.3,529.3 385.8,529.4 386.3,530.2 386.8,529.8 387.3,530.2 387.8,530.2 388.3,529.8 388.8,530.1 389.3,529.9 389.8,529.7 390.3,528.8 390.8,529.7 391.3,530.2 391.8,529.6 392.3,530.2 392.8,530.0 393.3,529.3 393.8,528.5 394.3,529.3 394.8,530.1 395.3,529.2 395.8,528.7 396.3,530.1 396.8,529.6 397.3,529.6 397.8,530.1 398.3,530.2 398.8,529.7 399.3,530.1 399.8,529.8 400.3,529.7 400.8,530.1 401.3,529.8 401.8,529.8 402.3,529.4 402.8,530.1 403.3,530.2 403.8,530.0 404.3,529.3 404.8,529.9 405.3,530.0 405.8,530.1 406.3,529.3 406.8,529.9 407.3,530.0 407.8,529.9 408.3,530.1 408.8,529.9 409.3,529.1 409.8,530.0 410.3,529.7 410.8,529.6 411.3,529.6 411.8,530.1 412.3,529.1 412.8,530.2 413.3,530.0 413.8,530.2 414.3,529.6 414.8,529.7 415.3,528.9 415.8,529.9 416.3,530.0 416.8,529.5 417.3,530.0 417.8,529.8 418.3,530.1 418.8,529.5 419.3,529.5 419.8,529.6 420.3,530.1 420.8,529.5 421.3,530.0 421.8,529.3 422.3,529.8 422.8,530.0 423.3,530.2 423.8,530.1 424.3,530.0 424.8,529.9 425.3,530.1 425.8,529.9 426.3,529.8 426.8,529.5 427.3,529.7 427.8,529.8 428.3,529.9 428.8,529.9 429.3,529.7 429.8,529.6 430.3,529.7 430.8,529.9 431.3,529.4 431.8,529.8 432.3,529.7 432.8,529.7 433.3,528.9 433.8,530.0 434.3,529.5 434.8,529.8 435.3,530.1 435.8,530.2 436.3,529.6 436.8,528.9 437.3,529.8 437.8,529.6 438.3,529.3 438.8,529.6 439.3,529.7 439.8,529.8 440.3,529.8 440.8,529.9 441.3,529.9 441.8,529.5 442.3,530.1 442.8,530.0 443.3,529.7 443.8,530.2 444.3,530.2 444.8,530.1 445.3,529.7 445.8,529.8 446.3,529.9 446.8,529.5 447.3,530.2 447.8,529.8 448.3,530.1 448.8,530.0 449.3,529.6 449.8,530.2 450.3,530.1 450.8,529.9 451.3,530.0 451.8,530.2 452.3,529.1 452.8,529.9 453.3,530.1 453.8,529.9 454.3,530.2 454.8,529.9 455.3,529.3 455.8,529.9 456.3,530.1 456.8,529.9 457.3,529.6 457.8,530.1 458.3,529.5 458.8,529.7 459.3,530.2 459.8,530.2 460.3,529.1 460.8,529.8 461.3,530.1 461.8,529.4 462.3,530.2 462.8,530.0 463.3,530.1 463.8,529.9 464.3,529.4 464.8,530.1 465.3,530.0 465.8,530.0 466.3,530.1 466.8,529.9 467.3,530.1 467.8,529.2 468.3,530.2 468.8,530.0 469.3,530.0 469.8,530.1 470.3,530.1 470.8,529.4 471.3,530.2 471.8,529.6 472.3,530.1 472.8,530.1 473.3,529.1 473.8,529.7 474.3,529.0 474.8,530.2 475.3,529.3 475.8,529.7 476.3,529.9 476.8,529.7 477.3,529.8 477.8,530.1 478.3,529.5 478.8,530.1 479.3,529.6 479.8,529.3 480.3,529.7 480.8,530.2 481.3,530.1 481.8,530.2 482.3,529.8 482.8,529.3 483.3,529.1 483.8,529.7 484.3,529.8 484.8,528.8 485.3,530.1 485.8,529.4 486.3,529.4 486.8,528.5 487.3,529.3 487.8,529.9 488.3,530.2 488.8,529.3 489.3,530.2 489.8,530.1 490.3,529.7 490.8,530.1 491.3,529.0 491.8,530.2 492.3,529.9 492.8,528.9 493.3,529.4 493.8,530.0 494.3,529.3 494.8,530.0 495.3,529.8 495.8,529.5 496.3,529.9 496.8,530.2 497.3,529.7 497.8,530.2 498.3,529.9 498.8,529.8 499.3,530.0 499.8,529.5 500.3,530.2 500.8,529.9 501.3,529.4 501.8,530.0 502.3,529.5 502.8,530.2 503.3,530.1 503.8,530.1 504.3,530.1 504.8,529.6 505.3,530.2 505.8,530.2 506.3,529.5 506.8,529.9 507.3,530.2 507.8,529.3 508.3,529.6 508.8,529.9 509.3,530.2 509.8,530.0 510.3,529.4 510.8,530.1 511.3,529.9 511.8,529.4 512.3,529.9 512.8,529.7 513.3,529.3 513.8,530.0 514.3,529.5 514.8,529.8 515.3,530.0 515.8,529.8 516.3,529.7 516.8,530.0 517.3,529.9 517.8,530.2 518.3,529.7 518.8,530.1 519.3,530.0 519.8,529.7 520.3,530.0 520.8,529.0 521.3,529.4 521.8,529.8 522.3,529.7 522.8,530.2 523.3,530.0 523.8,530.1 524.3,529.4 524.8,529.7 525.3,530.2 525.8,529.1 526.3,530.1 526.8,530.0 527.3,529.2 527.8,529.7 528.3,530.0 528.8,529.9 529.3,529.5 529.8,528.7 530.3,530.1 530.8,529.1 531.3,529.9 531.8,530.0 532.3,530.0 532.8,530.2 533.3,530.2 533.8,530.2 534.3,529.7 534.8,528.8 535.3,528.6 535.8,530.1 536.3,529.2 536.8,529.7 537.3,530.1 537.8,529.6 538.3,529.5 538.8,529.4 539.3,530.1 539.8,529.0 540.3,529.2 540.8,529.8 541.3,530.1 541.8,529.9 542.3,529.7 542.8,529.7 543.3,529.8 543.8,529.7 544.3,530.2 544.8,530.2 545.3,529.9 545.8,529.4 546.3,529.4 546.8,529.7 547.3,529.9 547.8,529.3 548.3,529.5 548.8,529.6 549.3,529.6 549.8,529.2 550.3,530.0 550.8,529.3 551.3,529.9 551.8,530.2 552.3,530.1 552.8,530.0 553.3,529.9 553.8,529.1 554.3,529.9 554.8,530.1 555.3,529.8 555.8,530.1 556.3,530.2 556.8,530.2 557.3,529.9 557.8,530.2 558.3,530.1 558.8,529.8 559.3,529.5 559.8,529.5 560.3,530.0 560.8,529.9 561.3,529.5 561.8,530.1 562.3,530.2 562.8,529.9 563.3,529.3 563.8,529.4 564.3,529.9 564.8,530.1 565.3,529.4 565.8,530.0 566.3,529.6 566.8,529.6 567.3,529.0 567.8,529.8 568.3,530.1 568.8,530.1 569.3,530.1 569.8,529.7 570.3,529.9 570.8,529.5 571.3,528.8 571.8,530.2 572.3,530.2 572.8,529.9 573.3,530.2 573.8,529.7 574.3,530.1 574.8,530.2 575.3,528.9 575.8,529.7 576.3,530.1 576.8,530.0 577.3,530.2 577.8,529.8 578.3,530.1 578.8,529.9 579.3,529.8 579.8,530.0 580.3,529.6 580.8,530.1 581.3,528.7 581.8,529.9 582.3,529.3 582.8,529.7 583.3,530.2 583.8,529.1 584.3,530.0 584.8,529.7 585.3,529.8 585.8,529.3 586.3,530.1 586.8,529.9 587.3,529.7 587.8,529.3 588.3,529.9 588.8,530.0 589.3,530.0 589.8,530.2 590.3,528.8 590.8,530.2 591.3,529.9 591.8,529.6 592.3,529.8 592.8,529.3 593.3,529.4 593.8,530.2 594.3,529.3 594.8,530.2 595.3,530.1 595.8,529.6 596.3,529.3 596.8,530.2 597.3,530.2 597.8,529.7 598.3,529.5 598.8,529.7 599.3,529.1 599.8,530.0 600.3,529.3 600.8,530.1 601.3,529.7 601.8,529.8 602.3,529.5 602.8,529.7 603.3,529.9 603.8,530.2 604.3,530.2 604.8,529.3 605.3,529.8 605.8,529.8 606.3,529.3 606.8,530.1 607.3,530.1 607.8,529.9 608.3,529.9 608.8,529.8 609.3,530.2 609.8,530.1 610.3,529.8 610.8,529.9 611.3,529.8 611.8,529.9 612.3,529.7 612.8,529.7 613.3,529.7 613.8,530.0 614.3,529.7 614.8,530.1 615.3,529.7 615.8,530.1 616.3,530.2 616.8,529.6 617.3,529.1 617.8,529.7 618.3,529.3 618.8,530.1 619.3,530.0 619.8,529.1 620.3,530.2 620.8,530.0 621.3,530.1 621.8,529.9 622.3,529.9 622.8,529.7 623.3,529.9 623.8,530.0 624.3,529.9 624.8,530.2 625.3,530.0 625.8,530.0 626.3,529.7 626.8,530.2 627.3,529.0 627.8,530.1 628.3,529.6 628.8,530.0 629.3,529.8 629.8,530.2 630.3,529.7 630.8,529.8 631.3,529.9 631.8,529.8 632.3,529.1 632.8,529.9 633.3,530.2 633.8,529.9 634.3,530.1 634.8,528.9 635.3,530.1 635.8,529.7 636.3,529.9 636.8,530.0 637.3,529.9 637.8,529.9 638.3,530.2 638.8,530.1 639.3,529.6 639.8,530.0 640.3,530.0 640.8,530.2 641.3,530.2 641.8,529.3 642.3,530.2 642.8,530.2 643.3,528.9 643.8,529.2 644.3,529.2 644.8,530.2 645.3,529.5 645.8,530.0 646.3,529.3 646.8,529.9 647.3,529.8 647.8,530.1 648.3,529.3 648.8,528.8 649.3,530.0 649.8,530.0 650.3,529.7 650.8,529.8 651.3,529.6 651.8,530.2 652.3,530.2 652.8,529.8 653.3,530.0 653.8,530.0 654.3,529.3 654.8,530.1 655.3,529.1 655.8,530.2 656.3,528.8 656.8,530.0 657.3,530.1 657.8,530.1 658.3,529.9 658.8,529.8 659.3,530.1 659.8,530.0 660.3,529.4 660.8,530.0 661.3,530.2 661.8,529.4 662.3,529.4 662.8,530.2 663.3,529.7 663.8,530.1 664.3,530.1 664.8,529.9 664.8,532.2 664.3,532.7 663.8,532.2 663.3,533.0 662.8,532.5 662.3,532.2 661.8,533.2 661.3,532.5 660.8,533.1 660.3,532.6 659.8,532.2 659.3,532.3 658.8,532.7 658.3,532.2 657.8,532.9 657.3,532.3 656.8,532.5 656.3,532.2 655.8,533.1 655.3,532.2 654.8,532.4 654.3,532.7 653.8,533.1 653.3,533.0 652.8,533.0 652.3,532.3 651.8,533.4 651.3,532.8 650.8,532.3 650.3,532.4 649.8,532.2 649.3,532.9 648.8,533.5 648.3,532.2 647.8,532.5 647.3,532.5 646.8,532.4 646.3,533.0 645.8,532.6 645.3,532.2 644.8,532.7 644.3,532.4 643.8,532.2 643.3,532.9 642.8,532.3 642.3,532.7 641.8,532.6 641.3,532.7 640.8,532.9 640.3,533.0 639.8,532.7 639.3,533.1 638.8,532.5 638.3,532.4 637.8,533.5 637.3,533.0 636.8,532.6 636.3,532.6 635.8,532.2 635.3,532.2 634.8,532.3 634.3,532.2 633.8,532.2 633.3,532.7 632.8,532.5 632.3,532.4 631.8,532.2 631.3,532.3 630.8,532.6 630.3,532.5 629.8,532.7 629.3,533.4 628.8,532.3 628.3,532.4 627.8,533.0 627.3,532.3 626.8,532.2 626.3,532.4 625.8,533.7 625.3,532.7 624.8,532.6 624.3,532.4 623.8,532.4 623.3,532.4 622.8,532.3 622.3,532.4 621.8,532.9 621.3,533.0 620.8,532.5 620.3,533.0 619.8,532.8 619.3,532.4 618.8,532.6 618.3,532.7 617.8,532.2 617.3,532.9 616.8,532.6 616.3,532.3 615.8,532.6 615.3,532.4 614.8,532.3 614.3,532.3 613.8,533.1 613.3,532.4 612.8,532.2 612.3,532.4 611.8,532.4 611.3,532.6 610.8,532.9 610.3,532.4 609.8,532.4 609.3,532.4 608.8,533.4 608.3,532.4 607.8,532.2 607.3,532.9 606.8,532.7 606.3,532.3 605.8,532.7 605.3,532.8 604.8,532.4 604.3,532.5 603.8,532.8 603.3,532.9 602.8,533.0 602.3,532.7 601.8,533.2 601.3,533.0 600.8,532.4 600.3,532.7 599.8,532.7 599.3,533.0 598.8,532.3 598.3,532.6 597.8,532.6 597.3,532.2 596.8,533.3 596.3,532.5 595.8,533.3 595.3,532.2 594.8,532.4 594.3,532.6 593.8,532.6 593.3,532.7 592.8,532.6 592.3,532.3 591.8,533.5 591.3,532.5 590.8,533.1 590.3,532.6 589.8,532.5 589.3,532.2 588.8,532.2 588.3,533.5 587.8,532.7 587.3,532.6 586.8,532.3 586.3,532.9 585.8,532.7 585.3,532.5 584.8,532.4 584.3,532.5 583.8,532.3 583.3,532.2 582.8,533.1 582.3,532.4 581.8,533.6 581.3,532.8 580.8,533.5 580.3,532.3 579.8,532.5 579.3,532.8 578.8,532.6 578.3,532.2 577.8,532.6 577.3,532.2 576.8,532.6 576.3,532.6 575.8,532.5 575.3,532.9 574.8,532.3 574.3,533.3 573.8,532.3 573.3,532.8 572.8,532.3 572.3,533.3 571.8,532.3 571.3,532.2 570.8,533.6 570.3,532.3 569.8,533.3 569.3,532.3 568.8,532.2 568.3,532.7 567.8,532.3 567.3,533.2 566.8,532.5 566.3,532.6 565.8,532.7 565.3,532.5 564.8,532.2 564.3,532.7 563.8,533.0 563.3,533.1 562.8,533.0 562.3,532.8 561.8,532.2 561.3,533.0 560.8,532.5 560.3,532.2 559.8,532.2 559.3,532.5 558.8,532.8 558.3,532.6 557.8,533.3 557.3,532.3 556.8,532.4 556.3,532.3 555.8,533.3 555.3,532.4 554.8,533.2 554.3,533.0 553.8,533.0 553.3,532.5 552.8,533.0 552.3,532.6 551.8,533.1 551.3,532.3 550.8,532.4 550.3,532.5 549.8,532.3 549.3,532.4 548.8,532.2 548.3,532.6 547.8,532.8 547.3,532.3 546.8,533.0 546.3,532.5 545.8,532.7 545.3,532.4 544.8,533.5 544.3,532.3 543.8,532.3 543.3,532.5 542.8,532.2 542.3,532.5 541.8,533.0 541.3,532.8 540.8,532.7 540.3,533.2 539.8,532.6 539.3,532.4 538.8,532.6 538.3,532.8 537.8,532.9 537.3,532.5 536.8,533.0 536.3,532.5 535.8,532.3 535.3,532.9 534.8,533.8 534.3,532.7 533.8,532.4 533.3,533.0 532.8,532.4 532.3,533.2 531.8,533.2 531.3,532.8 530.8,533.0 530.3,532.5 529.8,532.4 529.3,532.2 528.8,532.5 528.3,532.3 527.8,532.9 527.3,532.6 526.8,533.1 526.3,532.4 525.8,532.5 525.3,532.8 524.8,532.7 524.3,533.0 523.8,532.4 523.3,532.5 522.8,533.2 522.3,532.7 521.8,532.5 521.3,532.3 520.8,532.8 520.3,532.5 519.8,532.8 519.3,532.5 518.8,532.2 518.3,532.2 517.8,533.0 517.3,532.5 516.8,532.2 516.3,532.2 515.8,533.6 515.3,533.4 514.8,532.5 514.3,532.5 513.8,533.0 513.3,532.3 512.8,532.7 512.3,533.1 511.8,532.5 511.3,532.3 510.8,532.3 510.3,532.4 509.8,532.7 509.3,532.5 508.8,532.4 508.3,532.3 507.8,532.7 507.3,532.5 506.8,532.3 506.3,532.4 505.8,533.0 505.3,532.4 504.8,532.4 504.3,532.6 503.8,532.4 503.3,532.3 502.8,533.0 502.3,532.4 501.8,532.6 501.3,532.4 500.8,532.2 500.3,532.5 499.8,532.5 499.3,532.3 498.8,533.2 498.3,532.4 497.8,534.0 497.3,532.7 496.8,532.6 496.3,533.2 495.8,532.6 495.3,532.9 494.8,532.8 494.3,532.5 493.8,532.2 493.3,532.2 492.8,532.4 492.3,532.5 491.8,532.7 491.3,532.2 490.8,532.9 490.3,532.4 489.8,532.8 489.3,532.5 488.8,532.2 488.3,533.0 487.8,533.1 487.3,533.1 486.8,532.6 486.3,532.7 485.8,532.5 485.3,532.6 484.8,532.2 484.3,532.8 483.8,532.2 483.3,532.4 482.8,532.7 482.3,532.8 481.8,532.3 481.3,532.4 480.8,532.8 480.3,532.9 479.8,532.8 479.3,533.3 478.8,533.3 478.3,532.6 477.8,532.6 477.3,532.4 476.8,532.5 476.3,533.0 475.8,532.8 475.3,532.7 474.8,532.3 474.3,532.4 473.8,532.3 473.3,532.2 472.8,533.0 472.3,532.2 471.8,532.5 471.3,532.4 470.8,532.6 470.3,532.2 469.8,532.6 469.3,532.3 468.8,532.7 468.3,532.6 467.8,532.5 467.3,532.3 466.8,532.2 466.3,532.5 465.8,532.5 465.3,533.9 464.8,532.4 464.3,532.5 463.8,532.7 463.3,532.4 462.8,532.6 462.3,533.2 461.8,532.3 461.3,533.2 460.8,532.8 460.3,532.5 459.8,532.3 459.3,532.5 458.8,533.3 458.3,532.7 457.8,532.6 457.3,532.5 456.8,533.0 456.3,532.4 455.8,533.5 455.3,532.2 454.8,532.3 454.3,532.3 453.8,532.9 453.3,532.9 452.8,532.3 452.3,533.8 451.8,532.3 451.3,532.4 450.8,532.3 450.3,532.5 449.8,532.7 449.3,532.5 448.8,534.0 448.3,532.2 447.8,532.9 447.3,533.1 446.8,533.2 446.3,532.3 445.8,532.7 445.3,532.2 444.8,532.5 444.3,533.6 443.8,532.4 443.3,532.9 442.8,532.4 442.3,532.5 441.8,532.4 441.3,532.7 440.8,532.4 440.3,532.3 439.8,532.3 439.3,532.3 438.8,532.2 438.3,532.6 437.8,532.3 437.3,532.3 436.8,532.9 436.3,532.4 435.8,532.5 435.3,532.8 434.8,533.1 434.3,532.8 433.8,532.5 433.3,533.1 432.8,532.2 432.3,532.6 431.8,532.2 431.3,532.3 430.8,532.5 430.3,532.3 429.8,533.2 429.3,532.3 428.8,532.2 428.3,532.3 427.8,532.5 427.3,532.7 426.8,533.2 426.3,533.0 425.8,532.5 425.3,532.7 424.8,533.2 424.3,532.8 423.8,532.8 423.3,532.4 422.8,533.0 422.3,532.9 421.8,532.9 421.3,532.8 420.8,532.4 420.3,532.2 419.8,532.2 419.3,532.4 418.8,533.0 418.3,532.3 417.8,532.6 417.3,532.6 416.8,532.6 416.3,532.8 415.8,533.0 415.3,533.2 414.8,532.3 414.3,532.9 413.8,532.3 413.3,532.2 412.8,532.2 412.3,532.4 411.8,532.5 411.3,533.4 410.8,532.8 410.3,532.7 409.8,532.3 409.3,532.2 408.8,533.0 408.3,532.2 407.8,533.0 407.3,532.9 406.8,532.2 406.3,532.6 405.8,532.4 405.3,533.0 404.8,532.2 404.3,532.6 403.8,532.7 403.3,532.9 402.8,532.6 402.3,532.7 401.8,532.4 401.3,532.3 400.8,533.0 400.3,532.4 399.8,532.4 399.3,533.1 398.8,532.4 398.3,532.9 397.8,533.2 397.3,533.0 396.8,532.3 396.3,532.2 395.8,532.8 395.3,532.8 394.8,532.9 394.3,532.6 393.8,532.2 393.3,532.3 392.8,532.9 392.3,532.4 391.8,532.9 391.3,532.8 390.8,532.3 390.3,532.4 389.8,532.4 389.3,532.2 388.8,532.9 388.3,532.2 387.8,533.5 387.3,532.2 386.8,533.2 386.3,532.4 385.8,532.9 385.3,532.4 384.8,532.2 384.3,533.1 383.8,533.1 383.3,532.4 382.8,532.9 382.3,532.3 381.8,532.6 381.3,532.9 380.8,532.3 380.3,532.3 379.8,532.5 379.3,532.4 378.8,532.3 378.3,532.3 377.8,533.3 377.3,532.4 376.8,532.4 376.3,532.7 375.8,532.4 375.3,533.2 374.8,532.5 374.3,532.6 373.8,532.2 373.3,532.6 372.8,533.5 372.3,533.4 371.8,532.2 371.3,532.3 370.8,533.1 370.3,532.5 369.8,532.3 369.3,532.5 368.8,532.3 368.3,533.1 367.8,532.4 367.3,532.3 366.8,532.5 366.3,533.5 365.8,532.8 365.3,532.6 364.8,532.2 364.3,532.3 363.8,532.8 363.3,532.8 362.8,532.2 362.3,532.5 361.8,532.8 361.3,532.5 360.8,532.4 360.3,532.6 359.8,533.4 359.3,532.2 358.8,532.8 358.3,532.5 357.8,532.7 357.3,532.3 356.8,532.4 356.3,532.4 355.8,532.4 355.3,532.7 354.8,532.7 354.3,532.4 353.8,532.5 353.3,533.0 352.8,533.1 352.3,532.7 351.8,532.3 351.3,533.8 350.8,532.3 350.3,532.7 349.8,532.5 349.3,532.8 348.8,533.4 348.3,532.4 347.8,532.4 347.3,532.9 346.8,532.5 346.3,532.4 345.8,533.4 345.3,532.7 344.8,532.2 344.3,532.5 343.8,532.7 343.3,532.4 342.8,532.3 342.3,532.4 341.8,533.0 341.3,532.2 340.8,533.3 340.3,532.4 339.8,532.8 339.3,532.6 338.8,532.3 338.3,532.8 337.8,533.3 337.3,532.7 336.8,532.9 336.3,532.3 335.8,532.3 335.3,532.2 334.8,533.0 334.3,533.5 333.8,532.6 333.3,533.1 332.8,532.2 332.3,532.8 331.8,532.7 331.3,533.6 330.8,532.8 330.3,532.2 329.8,532.7 329.3,532.3 328.8,532.6 328.3,532.6 327.8,532.6 327.3,532.2 326.8,532.2 326.3,532.4 325.8,533.0 325.3,532.6 324.8,532.6 324.3,532.4 323.8,532.2 323.3,533.1 322.8,533.1 322.3,532.6 321.8,532.9 321.3,532.7 320.8,532.4 320.3,532.9 319.8,532.8 319.3,532.8 318.8,532.9 318.3,532.3 317.8,533.5 317.3,532.4 316.8,532.2 316.3,532.3 315.8,532.4 315.3,532.3 314.8,533.0 314.3,532.7 313.8,532.2 313.3,532.2 312.8,532.7 312.3,532.3 311.8,532.6 311.3,532.3 310.8,532.4 310.3,532.2 309.8,532.3 309.3,532.4 308.8,534.4 308.3,532.5 307.8,532.4 307.3,532.9 306.8,532.2 306.3,533.4 305.8,533.2 305.3,532.4 304.8,533.0 304.3,532.9 303.8,533.2 303.3,532.7 302.8,532.2 302.3,533.1 301.8,533.0 301.3,533.4 300.8,532.5 300.3,532.8 299.8,532.2 299.3,532.7 298.8,532.3 298.3,533.4 297.8,532.9 297.3,532.4 296.8,532.6 296.3,532.2 295.8,532.7 295.3,532.3 294.8,532.6 294.3,532.7 293.8,532.3 293.3,532.7 292.8,532.3 292.3,532.5 291.8,532.8 291.3,533.8 290.8,532.4 290.3,532.4 289.8,533.0 289.3,533.2 288.8,533.1 288.3,532.3 287.8,532.3 287.3,532.7 286.8,533.3 286.3,532.4 285.8,532.4 285.3,532.3 284.8,532.8 284.3,532.6 283.8,532.9 283.3,532.3 282.8,532.8 282.3,533.0 281.8,532.8 281.3,532.3 280.8,532.4 280.3,532.5 279.8,532.7 279.3,532.9 278.8,532.6 278.3,532.2 277.8,532.5 277.3,532.4 276.8,533.2 276.3,533.4 275.8,532.2 275.3,532.7 274.8,532.2 274.3,532.4 273.8,532.6 273.3,532.8 272.8,532.4 272.3,532.5 271.8,533.9 271.3,533.4 270.8,532.2 270.3,532.8 269.8,532.2 269.3,532.4 268.8,532.2 268.3,532.2 267.8,532.9 267.3,532.7 266.8,532.5 266.3,532.7 265.8,532.7 265.3,532.6 264.8,532.2 264.3,532.4 263.8,532.3 263.3,532.4 262.8,533.0 262.3,532.2 261.8,532.7 261.3,533.1 260.8,532.3 260.3,532.5 259.8,533.8 259.3,532.6 258.8,532.6 258.3,533.2 257.8,532.2 257.3,532.2 256.8,532.6 256.3,532.5 255.8,533.3 255.3,532.3 254.8,532.3 254.3,532.3 253.8,532.9 253.3,533.4 252.8,532.9 252.3,532.6 251.8,533.0 251.3,532.3 250.8,532.5 250.3,532.2 249.8,533.2 249.3,532.6 248.8,532.6 248.3,532.3 247.8,533.4 247.3,533.0 246.8,532.5 246.3,532.7 245.8,533.0 245.3,533.0 244.8,532.6 244.3,532.8 243.8,533.2 243.3,532.7 242.8,532.8 242.3,532.3 241.8,532.2 241.3,532.2 240.8,532.7 240.3,532.5 239.8,532.6 239.3,532.4 238.8,532.3 238.3,533.0 237.8,532.4 237.3,532.6 236.8,532.8 236.3,532.9 235.8,532.4 235.3,532.7 234.8,532.4 234.3,532.5 233.8,532.2 233.3,532.8 232.8,532.2 232.3,532.7 231.8,532.5 231.3,532.9 230.8,532.7 230.3,532.3 229.8,532.8 229.3,532.2 228.8,533.1 228.3,533.3 227.8,533.2 227.3,532.6 226.8,532.9 226.3,532.3 225.8,533.4 225.3,532.5 224.8,532.9 224.3,532.9 223.8,533.0 223.3,532.9 222.8,532.4 222.3,532.4 221.8,532.8 221.3,532.4 220.8,533.2 220.3,532.2 219.8,532.3 219.3,533.0 218.8,532.9 218.3,532.3 217.8,533.1 217.3,532.2 216.8,533.1 216.3,532.6 215.8,532.9 215.3,532.6 214.8,532.5 214.3,532.3 213.8,533.0z" fill="#eea300"/><path d="M562.8 522V542" stroke="#eea300" stroke-width="0.9"/><path d="M213.8,578.0 214.3,577.5 214.8,578.4 215.3,578.7 215.8,578.2 216.3,578.6 216.8,578.0 217.3,578.7 217.8,578.5 218.3,578.5 218.8,578.6 219.3,578.6 219.8,578.7 220.3,578.5 220.8,578.5 221.3,578.6 221.8,578.6 222.3,578.0 222.8,578.1 223.3,578.7 223.8,578.2 224.3,578.6 224.8,578.0 225.3,578.1 225.8,578.6 226.3,578.2 226.8,578.4 227.3,578.2 227.8,578.2 228.3,578.6 228.8,578.3 229.3,578.7 229.8,578.6 230.3,578.4 230.8,578.6 231.3,578.3 231.8,578.4 232.3,578.6 232.8,578.3 233.3,578.5 233.8,578.2 234.3,578.5 234.8,578.5 235.3,578.5 235.8,578.7 236.3,578.6 236.8,578.6 237.3,578.5 237.8,578.5 238.3,578.2 238.8,578.7 239.3,578.5 239.8,578.7 240.3,578.3 240.8,578.5 241.3,578.4 241.8,578.6 242.3,578.1 242.8,578.6 243.3,578.6 243.8,578.5 244.3,578.5 244.8,578.5 245.3,578.5 245.8,578.5 246.3,578.3 246.8,578.5 247.3,577.7 247.8,578.4 248.3,578.3 248.8,578.3 249.3,578.6 249.8,578.0 250.3,578.6 250.8,578.5 251.3,578.5 251.8,578.7 252.3,578.7 252.8,578.5 253.3,578.7 253.8,578.6 254.3,578.0 254.8,578.1 255.3,578.3 255.8,578.4 256.3,578.5 256.8,578.3 257.3,578.7 257.8,578.3 258.3,578.6 258.8,578.1 259.3,578.7 259.8,578.3 260.3,578.7 260.8,578.6 261.3,578.2 261.8,578.2 262.3,578.6 262.8,578.7 263.3,578.6 263.8,578.1 264.3,578.5 264.8,578.2 265.3,578.6 265.8,578.4 266.3,578.4 266.8,577.9 267.3,578.3 267.8,578.7 268.3,578.5 268.8,578.4 269.3,578.6 269.8,578.7 270.3,578.7 270.8,578.3 271.3,578.4 271.8,578.5 272.3,578.3 272.8,578.2 273.3,578.6 273.8,578.3 274.3,578.6 274.8,577.8 275.3,578.7 275.8,578.4 276.3,578.6 276.8,578.7 277.3,578.5 277.8,578.6 278.3,578.6 278.8,577.9 279.3,577.7 279.8,578.4 280.3,578.7 280.8,578.7 281.3,578.4 281.8,578.4 282.3,578.7 282.8,578.6 283.3,578.2 283.8,578.6 284.3,577.9 284.8,578.6 285.3,578.4 285.8,578.7 286.3,578.3 286.8,578.3 287.3,578.7 287.8,578.5 288.3,578.6 288.8,578.7 289.3,578.5 289.8,578.6 290.3,578.6 290.8,578.4 291.3,578.7 291.8,577.6 292.3,578.4 292.8,578.7 293.3,577.7 293.8,578.6 294.3,577.8 294.8,578.0 295.3,578.1 295.8,578.6 296.3,578.4 296.8,577.9 297.3,578.3 297.8,578.3 298.3,578.6 298.8,578.6 299.3,578.6 299.8,578.7 300.3,578.7 300.8,578.3 301.3,578.6 301.8,578.4 302.3,578.4 302.8,577.7 303.3,578.3 303.8,578.5 304.3,578.1 304.8,578.7 305.3,578.2 305.8,577.9 306.3,578.2 306.8,578.5 307.3,578.4 307.8,578.6 308.3,578.6 308.8,578.0 309.3,578.6 309.8,578.3 310.3,578.6 310.8,578.2 311.3,578.3 311.8,577.7 312.3,577.8 312.8,578.2 313.3,578.4 313.8,578.7 314.3,578.4 314.8,578.2 315.3,578.7 315.8,578.7 316.3,578.5 316.8,578.7 317.3,578.4 317.8,578.0 318.3,577.8 318.8,578.7 319.3,578.3 319.8,578.5 320.3,578.7 320.8,578.6 321.3,578.5 321.8,578.7 322.3,578.4 322.8,578.2 323.3,578.4 323.8,578.7 324.3,578.6 324.8,578.1 325.3,578.3 325.8,578.0 326.3,577.8 326.8,578.4 327.3,578.4 327.8,578.3 328.3,578.7 328.8,578.1 329.3,578.4 329.8,578.4 330.3,578.6 330.8,578.5 331.3,578.7 331.8,578.7 332.3,578.7 332.8,578.1 333.3,578.7 333.8,578.4 334.3,578.6 334.8,578.6 335.3,578.4 335.8,578.5 336.3,578.6 336.8,578.7 337.3,578.5 337.8,578.6 338.3,578.6 338.8,578.7 339.3,578.7 339.8,578.3 340.3,577.8 340.8,578.6 341.3,577.9 341.8,578.5 342.3,578.7 342.8,578.7 343.3,578.4 343.8,578.6 344.3,577.6 344.8,578.3 345.3,578.1 345.8,578.1 346.3,578.7 346.8,578.1 347.3,577.9 347.8,577.9 348.3,578.6 348.8,578.7 349.3,578.7 349.8,578.3 350.3,578.6 350.8,578.3 351.3,578.5 351.8,578.2 352.3,578.7 352.8,578.7 353.3,578.7 353.8,578.4 354.3,578.6 354.8,578.7 355.3,578.2 355.8,578.7 356.3,578.7 356.8,578.7 357.3,578.0 357.8,578.4 358.3,578.6 358.8,578.4 359.3,578.6 359.8,578.7 360.3,578.5 360.8,578.4 361.3,578.1 361.8,578.6 362.3,578.5 362.8,578.6 363.3,578.0 363.8,578.7 364.3,578.6 364.8,578.7 365.3,578.6 365.8,578.7 366.3,578.2 366.8,578.6 367.3,578.4 367.8,578.7 368.3,578.6 368.8,578.4 369.3,578.5 369.8,578.2 370.3,578.6 370.8,578.5 371.3,578.2 371.8,578.5 372.3,578.4 372.8,578.0 373.3,578.5 373.8,578.4 374.3,578.3 374.8,578.3 375.3,578.5 375.8,578.7 376.3,577.7 376.8,578.4 377.3,578.6 377.8,578.2 378.3,577.8 378.8,578.6 379.3,578.6 379.8,577.7 380.3,578.5 380.8,578.7 381.3,578.4 381.8,578.7 382.3,578.5 382.8,578.6 383.3,578.7 383.8,578.5 384.3,578.3 384.8,578.7 385.3,578.7 385.8,578.0 386.3,578.6 386.8,578.1 387.3,578.6 387.8,578.3 388.3,578.4 388.8,578.4 389.3,578.6 389.8,578.4 390.3,578.7 390.8,578.4 391.3,578.6 391.8,578.3 392.3,578.7 392.8,578.5 393.3,578.5 393.8,578.7 394.3,578.1 394.8,578.7 395.3,578.7 395.8,578.6 396.3,578.3 396.8,578.4 397.3,578.5 397.8,578.3 398.3,578.1 398.8,578.6 399.3,578.5 399.8,578.2 400.3,578.0 400.8,578.7 401.3,578.1 401.8,578.4 402.3,578.7 402.8,578.4 403.3,578.5 403.8,578.5 404.3,578.6 404.8,578.2 405.3,577.8 405.8,578.1 406.3,578.6 406.8,578.6 407.3,578.3 407.8,578.6 408.3,578.1 408.8,578.3 409.3,578.7 409.8,578.6 410.3,578.3 410.8,578.7 411.3,578.3 411.8,577.9 412.3,578.6 412.8,578.3 413.3,578.5 413.8,578.1 414.3,578.6 414.8,578.5 415.3,578.5 415.8,578.3 416.3,578.5 416.8,578.7 417.3,578.5 417.8,578.0 418.3,578.7 418.8,578.7 419.3,578.6 419.8,578.7 420.3,578.3 420.8,577.9 421.3,578.5 421.8,578.3 422.3,578.5 422.8,578.7 423.3,578.5 423.8,577.8 424.3,578.5 424.8,578.5 425.3,578.7 425.8,578.3 426.3,578.4 426.8,578.5 427.3,578.7 427.8,578.0 428.3,578.2 428.8,578.4 429.3,578.7 429.8,578.4 430.3,578.6 430.8,578.5 431.3,578.4 431.8,578.5 432.3,578.6 432.8,578.3 433.3,578.6 433.8,578.2 434.3,578.6 434.8,578.2 435.3,578.5 435.8,578.5 436.3,578.4 436.8,578.7 437.3,578.6 437.8,578.4 438.3,578.5 438.8,578.2 439.3,578.7 439.8,578.0 440.3,578.1 440.8,578.5 441.3,578.6 441.8,578.6 442.3,578.5 442.8,578.7 443.3,578.6 443.8,578.3 444.3,578.5 444.8,578.6 445.3,578.7 445.8,578.3 446.3,578.7 446.8,578.4 447.3,578.4 447.8,578.3 448.3,577.1 448.8,578.2 449.3,578.2 449.8,578.4 450.3,578.7 450.8,578.7 451.3,578.6 451.8,578.6 452.3,578.5 452.8,578.1 453.3,577.6 453.8,578.5 454.3,578.5 454.8,578.6 455.3,578.7 455.8,578.2 456.3,578.7 456.8,578.0 457.3,578.7 457.8,578.7 458.3,578.3 458.8,578.0 459.3,578.6 459.8,578.7 460.3,578.6 460.8,578.2 461.3,578.5 461.8,578.7 462.3,578.7 462.8,578.4 463.3,578.1 463.8,578.2 464.3,578.6 464.8,578.7 465.3,578.6 465.8,578.1 466.3,577.6 466.8,578.7 467.3,578.6 467.8,578.0 468.3,577.6 468.8,578.3 469.3,578.4 469.8,578.5 470.3,578.2 470.8,578.4 471.3,578.1 471.8,578.7 472.3,578.6 472.8,578.3 473.3,578.1 473.8,578.6 474.3,578.6 474.8,578.2 475.3,578.7 475.8,578.4 476.3,578.7 476.8,578.2 477.3,578.6 477.8,578.4 478.3,578.5 478.8,578.4 479.3,578.1 479.8,578.6 480.3,578.5 480.8,578.6 481.3,578.7 481.8,578.4 482.3,578.3 482.8,578.6 483.3,578.4 483.8,578.7 484.3,578.7 484.8,578.5 485.3,578.4 485.8,578.5 486.3,578.6 486.8,577.9 487.3,578.6 487.8,578.2 488.3,578.7 488.8,578.4 489.3,578.0 489.8,578.5 490.3,578.5 490.8,578.6 491.3,578.2 491.8,578.3 492.3,578.4 492.8,578.6 493.3,578.7 493.8,578.7 494.3,578.2 494.8,578.5 495.3,578.5 495.8,578.1 496.3,578.5 496.8,578.6 497.3,578.7 497.8,578.7 498.3,578.7 498.8,578.4 499.3,578.6 499.8,578.7 500.3,578.5 500.8,578.1 501.3,578.6 501.8,578.3 502.3,578.7 502.8,578.5 503.3,578.7 503.8,578.4 504.3,578.6 504.8,577.9 505.3,578.0 505.8,578.3 506.3,578.4 506.8,578.7 507.3,578.3 507.8,578.7 508.3,578.6 508.8,578.4 509.3,578.7 509.8,578.5 510.3,578.6 510.8,577.6 511.3,578.4 511.8,578.3 512.3,578.5 512.8,578.7 513.3,578.5 513.8,578.7 514.3,578.7 514.8,578.4 515.3,578.5 515.8,578.6 516.3,578.5 516.8,578.6 517.3,578.6 517.8,578.3 518.3,578.4 518.8,578.5 519.3,578.3 519.8,578.7 520.3,578.0 520.8,578.7 521.3,578.6 521.8,578.6 522.3,578.7 522.8,577.9 523.3,578.2 523.8,578.4 524.3,578.5 524.8,578.5 525.3,578.7 525.8,578.6 526.3,578.7 526.8,578.7 527.3,578.4 527.8,578.1 528.3,578.3 528.8,578.6 529.3,578.3 529.8,578.7 530.3,578.5 530.8,578.7 531.3,578.0 531.8,578.5 532.3,578.6 532.8,578.5 533.3,578.7 533.8,578.0 534.3,578.7 534.8,578.3 535.3,578.3 535.8,578.7 536.3,578.2 536.8,578.3 537.3,578.7 537.8,578.5 538.3,578.3 538.8,578.6 539.3,578.7 539.8,578.5 540.3,578.6 540.8,578.7 541.3,578.6 541.8,578.6 542.3,578.0 542.8,578.3 543.3,578.7 543.8,578.5 544.3,578.5 544.8,578.3 545.3,578.5 545.8,578.1 546.3,578.3 546.8,578.3 547.3,578.2 547.8,578.7 548.3,577.9 548.8,578.6 549.3,578.7 549.8,578.7 550.3,578.3 550.8,578.5 551.3,578.7 551.8,578.4 552.3,578.7 552.8,578.5 553.3,578.6 553.8,578.2 554.3,578.4 554.8,578.6 555.3,578.5 555.8,578.2 556.3,578.7 556.8,578.1 557.3,578.5 557.8,578.6 558.3,578.6 558.8,578.5 559.3,578.7 559.8,578.7 560.3,578.7 560.8,578.2 561.3,578.2 561.8,578.1 562.3,578.7 562.8,578.3 563.3,578.6 563.8,578.7 564.3,578.5 564.8,578.2 565.3,578.7 565.8,578.6 566.3,578.7 566.8,578.1 567.3,578.3 567.8,578.7 568.3,578.5 568.8,578.6 569.3,578.3 569.8,578.5 570.3,578.6 570.8,578.7 571.3,578.5 571.8,578.7 572.3,578.6 572.8,578.7 573.3,578.2 573.8,578.7 574.3,578.5 574.8,578.0 575.3,578.5 575.8,578.4 576.3,578.5 576.8,578.7 577.3,578.7 577.8,578.3 578.3,578.6 578.8,578.1 579.3,578.7 579.8,578.6 580.3,578.5 580.8,578.4 581.3,578.2 581.8,578.7 582.3,578.5 582.8,578.5 583.3,578.6 583.8,578.1 584.3,578.7 584.8,578.4 585.3,578.3 585.8,578.3 586.3,578.3 586.8,578.4 587.3,578.2 587.8,578.7 588.3,577.9 588.8,578.2 589.3,578.5 589.8,578.5 590.3,578.4 590.8,578.6 591.3,578.6 591.8,578.3 592.3,578.7 592.8,578.5 593.3,578.7 593.8,578.6 594.3,578.7 594.8,578.3 595.3,578.7 595.8,578.0 596.3,578.5 596.8,578.3 597.3,578.0 597.8,578.6 598.3,577.8 598.8,578.2 599.3,578.5 599.8,578.7 600.3,578.4 600.8,578.5 601.3,578.3 601.8,578.3 602.3,578.3 602.8,577.9 603.3,578.5 603.8,578.6 604.3,578.3 604.8,578.0 605.3,578.2 605.8,578.1 606.3,578.4 606.8,578.5 607.3,578.3 607.8,578.7 608.3,578.4 608.8,578.7 609.3,578.1 609.8,578.6 610.3,577.9 610.8,578.5 611.3,578.7 611.8,578.5 612.3,578.1 612.8,578.6 613.3,578.5 613.8,578.7 614.3,578.7 614.8,578.7 615.3,578.0 615.8,578.1 616.3,578.6 616.8,578.7 617.3,578.6 617.8,578.6 618.3,578.2 618.8,578.5 619.3,578.3 619.8,578.3 620.3,577.8 620.8,578.7 621.3,578.5 621.8,578.3 622.3,578.7 622.8,578.4 623.3,578.4 623.8,578.5 624.3,578.7 624.8,578.5 625.3,578.1 625.8,578.3 626.3,577.9 626.8,578.5 627.3,578.4 627.8,578.5 628.3,578.5 628.8,578.4 629.3,578.7 629.8,578.3 630.3,578.5 630.8,578.1 631.3,578.6 631.8,578.3 632.3,578.6 632.8,578.7 633.3,578.2 633.8,578.3 634.3,578.5 634.8,578.7 635.3,578.6 635.8,578.5 636.3,578.3 636.8,578.7 637.3,578.6 637.8,578.3 638.3,578.7 638.8,578.5 639.3,578.4 639.8,578.4 640.3,578.4 640.8,578.6 641.3,578.7 641.8,578.5 642.3,578.4 642.8,578.5 643.3,578.6 643.8,578.6 644.3,578.4 644.8,578.3 645.3,578.4 645.8,578.7 646.3,578.2 646.8,578.6 647.3,578.5 647.8,578.7 648.3,578.6 648.8,578.7 649.3,578.2 649.8,577.9 650.3,578.2 650.8,578.5 651.3,578.6 651.8,578.6 652.3,578.4 652.8,578.7 653.3,578.7 653.8,577.6 654.3,578.2 654.8,578.7 655.3,578.2 655.8,578.7 656.3,578.6 656.8,578.5 657.3,577.9 657.8,578.7 658.3,578.0 658.8,578.7 659.3,578.1 659.8,578.4 660.3,578.3 660.8,578.6 661.3,578.2 661.8,578.7 662.3,578.3 662.8,578.3 663.3,578.5 663.8,578.6 664.3,578.6 664.8,578.7 664.8,580.7 664.3,580.9 663.8,580.6 663.3,580.7 662.8,580.4 662.3,580.4 661.8,580.7 661.3,580.3 660.8,580.8 660.3,580.5 659.8,580.3 659.3,580.3 658.8,580.5 658.3,580.7 657.8,580.5 657.3,580.5 656.8,580.5 656.3,580.5 655.8,580.7 655.3,580.7 654.8,580.3 654.3,580.3 653.8,580.5 653.3,580.4 652.8,581.7 652.3,580.5 651.8,580.7 651.3,580.6 650.8,580.4 650.3,580.4 649.8,580.4 649.3,580.3 648.8,580.3 648.3,580.7 647.8,580.3 647.3,580.3 646.8,580.6 646.3,580.7 645.8,581.1 645.3,580.8 644.8,580.3 644.3,580.5 643.8,580.7 643.3,580.6 642.8,580.8 642.3,580.5 641.8,580.4 641.3,580.3 640.8,580.9 640.3,580.5 639.8,580.7 639.3,580.3 638.8,580.9 638.3,580.4 637.8,580.3 637.3,580.6 636.8,580.3 636.3,580.4 635.8,580.3 635.3,580.3 634.8,581.0 634.3,580.9 633.8,580.5 633.3,580.3 632.8,580.5 632.3,580.3 631.8,580.6 631.3,580.3 630.8,581.0 630.3,580.5 629.8,580.8 629.3,580.3 628.8,580.5 628.3,580.3 627.8,580.7 627.3,580.3 626.8,580.3 626.3,580.5 625.8,580.8 625.3,580.7 624.8,581.1 624.3,580.5 623.8,581.3 623.3,580.9 622.8,580.7 622.3,580.5 621.8,580.3 621.3,580.5 620.8,580.7 620.3,580.8 619.8,580.3 619.3,581.1 618.8,580.4 618.3,581.0 617.8,580.5 617.3,580.3 616.8,580.3 616.3,580.6 615.8,580.5 615.3,580.3 614.8,580.4 614.3,580.6 613.8,580.3 613.3,580.3 612.8,580.3 612.3,580.3 611.8,580.6 611.3,580.5 610.8,580.6 610.3,580.3 609.8,581.0 609.3,580.3 608.8,580.9 608.3,580.7 607.8,581.4 607.3,580.7 606.8,581.1 606.3,580.7 605.8,580.6 605.3,580.3 604.8,580.8 604.3,580.6 603.8,580.4 603.3,580.8 602.8,580.6 602.3,580.3 601.8,580.4 601.3,580.4 600.8,580.7 600.3,580.4 599.8,580.6 599.3,580.7 598.8,580.3 598.3,580.5 597.8,580.8 597.3,580.6 596.8,580.7 596.3,580.3 595.8,580.6 595.3,580.9 594.8,581.0 594.3,580.4 593.8,580.3 593.3,580.5 592.8,580.4 592.3,580.4 591.8,580.8 591.3,580.6 590.8,580.6 590.3,580.3 589.8,580.6 589.3,580.6 588.8,580.4 588.3,580.6 587.8,581.0 587.3,580.6 586.8,580.3 586.3,580.7 585.8,580.6 585.3,580.3 584.8,580.4 584.3,580.3 583.8,580.7 583.3,580.3 582.8,580.3 582.3,580.9 581.8,580.6 581.3,580.4 580.8,580.5 580.3,581.0 579.8,580.6 579.3,580.4 578.8,580.3 578.3,580.6 577.8,580.6 577.3,580.9 576.8,580.3 576.3,580.5 575.8,580.4 575.3,580.3 574.8,580.6 574.3,580.8 573.8,580.7 573.3,580.8 572.8,580.5 572.3,580.7 571.8,580.5 571.3,580.5 570.8,580.8 570.3,580.6 569.8,580.4 569.3,580.3 568.8,580.5 568.3,580.3 567.8,581.0 567.3,580.6 566.8,580.8 566.3,580.8 565.8,580.8 565.3,580.4 564.8,580.6 564.3,580.8 563.8,580.8 563.3,580.6 562.8,580.4 562.3,580.6 561.8,581.1 561.3,580.3 560.8,581.1 560.3,580.4 559.8,580.5 559.3,580.3 558.8,580.7 558.3,580.5 557.8,580.5 557.3,580.4 556.8,580.9 556.3,580.5 555.8,580.6 555.3,580.3 554.8,580.9 554.3,581.1 553.8,580.9 553.3,581.1 552.8,580.3 552.3,580.4 551.8,580.3 551.3,580.3 550.8,580.8 550.3,580.5 549.8,580.4 549.3,580.6 548.8,580.7 548.3,581.3 547.8,580.5 547.3,580.3 546.8,581.1 546.3,580.6 545.8,580.8 545.3,580.3 544.8,580.5 544.3,580.4 543.8,580.8 543.3,580.7 542.8,580.4 542.3,580.5 541.8,580.6 541.3,580.6 540.8,580.4 540.3,580.9 539.8,580.8 539.3,580.6 538.8,580.7 538.3,580.6 537.8,580.6 537.3,580.6 536.8,580.6 536.3,580.6 535.8,581.0 535.3,580.5 534.8,580.5 534.3,580.4 533.8,580.8 533.3,580.4 532.8,580.4 532.3,580.6 531.8,580.3 531.3,581.0 530.8,580.4 530.3,580.5 529.8,580.4 529.3,580.3 528.8,581.0 528.3,580.5 527.8,580.5 527.3,580.5 526.8,580.7 526.3,580.4 525.8,580.4 525.3,580.7 524.8,580.8 524.3,580.5 523.8,580.5 523.3,580.3 522.8,580.6 522.3,580.3 521.8,580.3 521.3,580.6 520.8,580.8 520.3,580.9 519.8,580.4 519.3,580.6 518.8,580.3 518.3,580.4 517.8,580.5 517.3,580.4 516.8,580.4 516.3,581.0 515.8,580.3 515.3,580.8 514.8,580.3 514.3,580.5 513.8,580.6 513.3,580.3 512.8,581.0 512.3,580.7 511.8,580.4 511.3,580.8 510.8,580.7 510.3,580.7 509.8,580.7 509.3,580.8 508.8,580.4 508.3,580.4 507.8,580.4 507.3,581.1 506.8,580.4 506.3,580.9 505.8,581.2 505.3,580.7 504.8,580.4 504.3,580.4 503.8,580.6 503.3,580.6 502.8,580.5 502.3,580.4 501.8,580.5 501.3,580.5 500.8,580.7 500.3,580.4 499.8,580.7 499.3,580.7 498.8,580.3 498.3,580.5 497.8,580.8 497.3,580.7 496.8,580.4 496.3,580.5 495.8,580.5 495.3,580.4 494.8,580.4 494.3,581.0 493.8,580.5 493.3,580.6 492.8,580.3 492.3,580.8 491.8,580.5 491.3,580.9 490.8,580.3 490.3,580.7 489.8,580.6 489.3,580.7 488.8,581.2 488.3,580.3 487.8,580.4 487.3,580.4 486.8,580.5 486.3,580.3 485.8,580.8 485.3,580.5 484.8,580.6 484.3,580.4 483.8,580.5 483.3,580.3 482.8,580.3 482.3,580.5 481.8,580.7 481.3,580.6 480.8,580.3 480.3,580.5 479.8,581.1 479.3,580.5 478.8,580.5 478.3,580.5 477.8,581.0 477.3,580.9 476.8,580.3 476.3,580.3 475.8,580.9 475.3,580.4 474.8,580.3 474.3,580.5 473.8,580.7 473.3,580.6 472.8,580.6 472.3,580.5 471.8,580.4 471.3,580.3 470.8,580.6 470.3,580.3 469.8,580.6 469.3,580.3 468.8,580.3 468.3,581.1 467.8,580.4 467.3,580.4 466.8,580.4 466.3,580.7 465.8,580.3 465.3,580.7 464.8,581.0 464.3,580.9 463.8,580.4 463.3,580.7 462.8,580.5 462.3,580.5 461.8,580.3 461.3,580.4 460.8,580.7 460.3,580.3 459.8,580.3 459.3,580.4 458.8,580.3 458.3,580.9 457.8,580.3 457.3,581.0 456.8,580.3 456.3,580.4 455.8,580.5 455.3,580.6 454.8,580.5 454.3,580.6 453.8,580.5 453.3,580.7 452.8,580.3 452.3,580.4 451.8,580.4 451.3,580.8 450.8,580.5 450.3,580.5 449.8,580.3 449.3,580.6 448.8,580.4 448.3,580.4 447.8,580.3 447.3,580.6 446.8,580.4 446.3,580.4 445.8,581.0 445.3,580.4 444.8,581.3 444.3,580.3 443.8,580.5 443.3,580.5 442.8,580.8 442.3,580.3 441.8,580.9 441.3,580.5 440.8,581.2 440.3,581.2 439.8,580.3 439.3,580.8 438.8,580.3 438.3,580.5 437.8,580.3 437.3,580.4 436.8,580.7 436.3,580.3 435.8,580.6 435.3,580.5 434.8,580.5 434.3,580.4 433.8,581.1 433.3,580.6 432.8,580.7 432.3,580.7 431.8,580.4 431.3,580.7 430.8,580.5 430.3,580.6 429.8,581.1 429.3,580.7 428.8,580.5 428.3,580.4 427.8,580.7 427.3,580.9 426.8,580.6 426.3,580.3 425.8,580.7 425.3,580.5 424.8,580.3 424.3,580.5 423.8,580.9 423.3,580.6 422.8,580.9 422.3,580.6 421.8,580.8 421.3,580.6 420.8,580.5 420.3,580.5 419.8,580.5 419.3,580.9 418.8,580.4 418.3,580.5 417.8,580.3 417.3,580.6 416.8,580.5 416.3,580.7 415.8,580.4 415.3,580.5 414.8,580.4 414.3,580.6 413.8,580.8 413.3,581.0 412.8,580.3 412.3,580.3 411.8,580.3 411.3,580.5 410.8,580.4 410.3,580.5 409.8,580.7 409.3,580.3 408.8,580.5 408.3,580.3 407.8,580.4 407.3,580.5 406.8,580.4 406.3,580.3 405.8,581.6 405.3,580.8 404.8,580.3 404.3,580.5 403.8,580.3 403.3,580.3 402.8,580.6 402.3,580.3 401.8,580.3 401.3,580.8 400.8,580.7 400.3,580.6 399.8,580.6 399.3,580.5 398.8,580.6 398.3,580.3 397.8,580.3 397.3,581.1 396.8,580.5 396.3,580.5 395.8,580.4 395.3,580.9 394.8,580.5 394.3,580.3 393.8,580.4 393.3,580.6 392.8,580.5 392.3,580.4 391.8,580.6 391.3,580.5 390.8,580.7 390.3,580.3 389.8,580.5 389.3,580.6 388.8,580.5 388.3,580.8 387.8,580.5 387.3,580.5 386.8,580.3 386.3,580.8 385.8,580.4 385.3,580.5 384.8,580.7 384.3,580.3 383.8,580.4 383.3,580.5 382.8,580.3 382.3,580.4 381.8,580.5 381.3,580.3 380.8,580.5 380.3,581.2 379.8,580.4 379.3,580.5 378.8,580.7 378.3,580.4 377.8,580.6 377.3,580.3 376.8,581.0 376.3,580.6 375.8,580.9 375.3,580.4 374.8,580.4 374.3,580.5 373.8,580.3 373.3,580.6 372.8,580.3 372.3,580.5 371.8,580.7 371.3,580.5 370.8,580.9 370.3,580.3 369.8,581.0 369.3,580.4 368.8,581.0 368.3,580.5 367.8,580.4 367.3,580.4 366.8,580.4 366.3,580.3 365.8,580.3 365.3,580.5 364.8,580.3 364.3,580.3 363.8,580.5 363.3,580.4 362.8,580.3 362.3,580.4 361.8,580.4 361.3,580.4 360.8,580.3 360.3,580.5 359.8,580.3 359.3,580.4 358.8,580.5 358.3,580.6 357.8,580.4 357.3,580.4 356.8,580.3 356.3,581.1 355.8,580.9 355.3,580.4 354.8,580.9 354.3,580.8 353.8,580.6 353.3,580.5 352.8,581.5 352.3,580.9 351.8,580.9 351.3,580.6 350.8,580.5 350.3,581.3 349.8,580.5 349.3,581.1 348.8,580.6 348.3,580.4 347.8,580.7 347.3,580.5 346.8,580.4 346.3,580.5 345.8,581.2 345.3,580.9 344.8,580.6 344.3,580.7 343.8,580.5 343.3,580.5 342.8,580.4 342.3,580.6 341.8,580.5 341.3,580.5 340.8,580.6 340.3,580.9 339.8,580.6 339.3,580.7 338.8,580.9 338.3,580.4 337.8,580.6 337.3,580.3 336.8,580.5 336.3,580.4 335.8,580.5 335.3,580.5 334.8,580.7 334.3,580.7 333.8,580.5 333.3,581.0 332.8,580.5 332.3,580.5 331.8,580.4 331.3,580.9 330.8,580.3 330.3,580.5 329.8,580.8 329.3,580.5 328.8,580.6 328.3,580.5 327.8,580.6 327.3,580.4 326.8,580.7 326.3,580.6 325.8,580.5 325.3,580.4 324.8,580.4 324.3,580.6 323.8,580.5 323.3,580.6 322.8,580.5 322.3,581.1 321.8,580.3 321.3,580.3 320.8,580.7 320.3,580.5 319.8,580.4 319.3,580.7 318.8,580.7 318.3,580.3 317.8,581.0 317.3,580.4 316.8,580.3 316.3,580.3 315.8,580.4 315.3,580.7 314.8,580.4 314.3,580.3 313.8,580.3 313.3,580.6 312.8,580.4 312.3,580.3 311.8,580.3 311.3,580.8 310.8,580.3 310.3,580.5 309.8,580.3 309.3,580.5 308.8,580.5 308.3,580.4 307.8,580.5 307.3,580.5 306.8,580.4 306.3,580.6 305.8,580.4 305.3,580.7 304.8,580.5 304.3,580.3 303.8,580.5 303.3,580.5 302.8,580.6 302.3,580.4 301.8,580.6 301.3,581.1 300.8,581.0 300.3,580.9 299.8,580.4 299.3,580.3 298.8,580.3 298.3,580.8 297.8,580.4 297.3,580.5 296.8,580.6 296.3,580.3 295.8,580.5 295.3,580.4 294.8,580.6 294.3,580.3 293.8,581.0 293.3,581.0 292.8,580.4 292.3,580.3 291.8,581.0 291.3,580.6 290.8,580.6 290.3,580.7 289.8,580.4 289.3,581.0 288.8,580.8 288.3,580.3 287.8,580.5 287.3,580.4 286.8,580.6 286.3,580.8 285.8,580.3 285.3,580.6 284.8,580.3 284.3,580.5 283.8,581.1 283.3,580.7 282.8,580.5 282.3,580.5 281.8,580.6 281.3,580.3 280.8,580.3 280.3,580.7 279.8,580.6 279.3,580.3 278.8,580.4 278.3,580.3 277.8,580.7 277.3,580.4 276.8,581.2 276.3,580.3 275.8,580.3 275.3,580.5 274.8,580.6 274.3,580.6 273.8,580.5 273.3,580.3 272.8,580.4 272.3,580.6 271.8,580.7 271.3,580.4 270.8,580.7 270.3,580.4 269.8,580.6 269.3,580.4 268.8,580.3 268.3,580.8 267.8,580.4 267.3,580.4 266.8,580.8 266.3,580.6 265.8,580.8 265.3,580.5 264.8,580.3 264.3,580.5 263.8,580.6 263.3,580.5 262.8,580.3 262.3,580.6 261.8,580.7 261.3,580.6 260.8,580.6 260.3,580.3 259.8,580.7 259.3,580.3 258.8,580.5 258.3,580.9 257.8,580.6 257.3,580.8 256.8,580.4 256.3,580.6 255.8,580.4 255.3,580.7 254.8,580.3 254.3,580.4 253.8,580.3 253.3,580.7 252.8,580.3 252.3,580.8 251.8,580.7 251.3,580.3 250.8,580.4 250.3,580.4 249.8,580.5 249.3,580.6 248.8,580.3 248.3,580.6 247.8,580.8 247.3,580.5 246.8,581.0 246.3,580.4 245.8,580.9 245.3,581.1 244.8,580.4 244.3,580.6 243.8,580.8 243.3,580.4 242.8,580.4 242.3,580.3 241.8,580.6 241.3,580.3 240.8,580.5 240.3,580.9 239.8,580.4 239.3,580.3 238.8,580.3 238.3,580.9 237.8,580.3 237.3,580.3 236.8,580.6 236.3,580.8 235.8,581.2 235.3,580.7 234.8,581.0 234.3,581.0 233.8,580.4 233.3,580.7 232.8,580.8 232.3,580.6 231.8,580.5 231.3,580.5 230.8,581.1 230.3,580.7 229.8,581.3 229.3,580.7 228.8,580.6 228.3,580.9 227.8,580.5 227.3,580.8 226.8,580.7 226.3,580.5 225.8,581.1 225.3,580.6 224.8,580.6 224.3,580.7 223.8,580.7 223.3,580.5 222.8,580.3 222.3,580.4 221.8,580.8 221.3,580.5 220.8,580.3 220.3,580.3 219.8,580.4 219.3,580.8 218.8,580.7 218.3,580.4 217.8,580.4 217.3,580.3 216.8,580.3 216.3,580.7 215.8,580.4 215.3,580.3 214.8,580.5 214.3,580.3 213.8,580.4z" fill="#169c70"/><path d="M221.3 576V583M225.1 579V594M232.6 579V589.5M245.5 568.6V580M258.1 575.3V580M261.6 579V586M267.5 566V580M272.1 568.6V592.7M283.6 579V583.3M287.7 566V580M311.8 579V589.5M401 566.5V580M440.8 576V583M465.3 568V580M498.4 570V580M562.8 570V590M626 579V590M643.4 562.4V580" stroke="#169c70" stroke-width="0.9"/><path d="M645 579.5 L646.5 574 L648 586 L649.5 576 L651 589 L652.5 573 L654 590 L655.5 577 L657 588 L658.5 578 L660 584 L662 579.5" fill="none" stroke="#169c70" stroke-width="0.8"/><path d="M438 579.5 q2.5-5 5-1 q2 4 5 1" fill="none" stroke="#169c70" stroke-width="1"/><path d="M212.8 457.9V652.4" stroke="#7cdc7c" stroke-width="1.3"/></svg>
<div class="t" style="right:1071px;top:458.30px;font-size:6.3px;color:#333;font-weight:normal;">400</div>
<div class="t" style="right:1071px;top:497.70px;font-size:6.3px;color:#333;font-weight:normal;">-400</div>
<div class="t" style="right:1071px;top:506.60px;font-size:6.3px;color:#333;font-weight:normal;">200</div>
<div class="t" style="right:1071px;top:546.00px;font-size:6.3px;color:#333;font-weight:normal;">-200</div>
<div class="t" style="right:1071px;top:555.50px;font-size:6.3px;color:#333;font-weight:normal;">60</div>
<div class="t" style="right:1071px;top:595.20px;font-size:6.3px;color:#333;font-weight:normal;">-60</div>
<div style="left:203px;top:478.40000000000003px;width:10px;height:8.4px;background:#fff;border:0.8px solid #7aa8d8;box-sizing:border-box"></div>
<div class="t" style="left:108px;width:200px;text-align:center;top:477.60px;font-size:6.2px;color:#1f6fb8;font-weight:bold;">A5</div>
<div style="left:203px;top:527.0px;width:10px;height:8.4px;background:#fff;border:0.8px solid #f6dcb0;box-sizing:border-box"></div>
<div class="t" style="left:108px;width:200px;text-align:center;top:526.20px;font-size:6.2px;color:#f2c070;font-weight:normal;">A6</div>
<div style="left:203px;top:575.4px;width:10px;height:8.4px;background:#fff;border:0.8px solid #c0e4d4;box-sizing:border-box"></div>
<div class="t" style="left:108px;width:200px;text-align:center;top:574.60px;font-size:6.2px;color:#7cc8a8;font-weight:normal;">A7</div>
<div class="t" style="left:113.80000000000001px;width:200px;text-align:center;top:652.30px;font-size:6.3px;color:#333;font-weight:normal;">0</div>
<div class="t" style="left:237.8px;width:200px;text-align:center;top:652.30px;font-size:6.3px;color:#333;font-weight:normal;">600</div>
<div class="t" style="left:362.79999999999995px;width:200px;text-align:center;top:652.30px;font-size:6.3px;color:#333;font-weight:normal;">1200</div>
<div class="t" style="left:487.79999999999995px;width:200px;text-align:center;top:652.30px;font-size:6.3px;color:#333;font-weight:normal;">1800</div>
<div class="t" style="right:570px;top:652.30px;font-size:6.3px;color:#333;font-weight:normal;">2400</div>
<svg style="left:0;top:0" width="1284" height="856"><path d="M715 227.6H1050.5M715 276.4H1050.5M715 325.5H1050.5M715 374.5H1050.5" stroke="#555" stroke-width="1.2"/><path d="M882.5 227.6V374.5M1050.3 227V671" stroke="#555" stroke-width="1.1"/></svg>
<div class="t" style="left:717px;top:236.20px;font-size:8.5px;color:#222;font-weight:normal;">A4</div>
<div class="t" style="left:800.8px;top:236.20px;font-size:7.989999999999999px;color:#222;font-weight:normal;"></div>
<div class="t" style="right:487.29999999999995px;top:259.80px;font-size:8.5px;color:#222;font-weight:normal;">0.4950</div>
<div class="t" style="left:801px;top:259.80px;font-size:8.5px;color:#222;font-weight:normal;">με</div>
<div class="t" style="left:717px;top:285.20px;font-size:8.5px;color:#222;font-weight:normal;">A5</div>
<div class="t" style="left:800.8px;top:285.20px;font-size:7.989999999999999px;color:#222;font-weight:normal;">GSAT_X</div>
<div class="t" style="right:487.29999999999995px;top:308.80px;font-size:8.5px;color:#222;font-weight:normal;">-0.0988</div>
<div class="t" style="left:801px;top:308.80px;font-size:8.5px;color:#222;font-weight:normal;">deg/s</div>
<div class="t" style="left:717px;top:334.20px;font-size:8.5px;color:#222;font-weight:normal;">A6</div>
<div class="t" style="left:800.8px;top:334.20px;font-size:7.989999999999999px;color:#222;font-weight:normal;">GSAT_Y</div>
<div class="t" style="right:487.29999999999995px;top:357.80px;font-size:8.5px;color:#222;font-weight:normal;">-0.1384</div>
<div class="t" style="left:801px;top:357.80px;font-size:8.5px;color:#222;font-weight:normal;">deg/s</div>
<div class="t" style="left:884.4px;top:236.20px;font-size:8.5px;color:#222;font-weight:normal;">A7</div>
<div style="left:968.4px;top:236.2px;width:81px;height:10px;overflow:hidden"><div class="t" style="left:0;top:0;font-size:7.989999999999999px;color:#222">GSAT_Z</div></div>
<div class="t" style="right:320px;top:259.80px;font-size:8.5px;color:#222;font-weight:normal;">0.0494</div>
<div class="t" style="left:968.4px;top:259.80px;font-size:8.5px;color:#222;font-weight:normal;">deg/s</div>
<div class="t" style="left:884.4px;top:285.20px;font-size:8.5px;color:#222;font-weight:normal;">A8</div>
<div style="left:968.4px;top:285.2px;width:81px;height:10px;overflow:hidden"><div class="t" style="left:0;top:0;font-size:7.989999999999999px;color:#222"></div></div>
<div class="t" style="right:320px;top:308.80px;font-size:8.5px;color:#222;font-weight:normal;">-0.0627</div>
<div class="t" style="left:968.4px;top:308.80px;font-size:8.5px;color:#222;font-weight:normal;">με</div>
<div class="t" style="left:884.4px;top:334.20px;font-size:8.5px;color:#222;font-weight:normal;">S0-14</div>
<div style="left:968.4px;top:334.2px;width:81px;height:10px;overflow:hidden"><div class="t" style="left:0;top:0;font-size:7.989999999999999px;color:#222">S1_PID_0D_VehicleSpeed</div></div>
<div class="t" style="right:320px;top:357.80px;font-size:8.5px;color:#222;font-weight:normal;">0.0000</div>
<div class="t" style="left:968.4px;top:357.80px;font-size:8.5px;color:#222;font-weight:normal;">km/h</div>
<div style="left:715px;top:522px;width:335.5px;height:1.3px;background:#888"></div>
<svg style="left:752px;top:376px;overflow:hidden" width="261.5" height="145" viewBox="0 0 261.5 145"><defs>
<linearGradient id="sky" x1="0" y1="0" x2="1" y2="0.3"><stop offset="0" stop-color="#8ccbf2"/><stop offset="0.4" stop-color="#4fb0ee"/><stop offset="1" stop-color="#1a8de6"/></linearGradient>
<linearGradient id="skyb" x1="0" y1="0" x2="0" y2="1"><stop offset="0.35" stop-color="#fff" stop-opacity="0"/><stop offset="1" stop-color="#cde6f6" stop-opacity="0.8"/></linearGradient>
<linearGradient id="road" x1="0" y1="0" x2="0" y2="1"><stop offset="0" stop-color="#d8d9db"/><stop offset="0.45" stop-color="#c4c6c9"/><stop offset="1" stop-color="#b2b4b8"/></linearGradient>
<linearGradient id="car" x1="0" y1="0" x2="0" y2="1"><stop offset="0" stop-color="#f2f4f7"/><stop offset="1" stop-color="#d2d8e0"/></linearGradient>
<filter id="bl" x="-5%" y="-5%" width="110%" height="110%"><feGaussianBlur stdDeviation="0.6"/></filter>
</defs>
<rect width="261.5" height="145" fill="url(#sky)"/>
<rect width="261.5" height="105" fill="url(#skyb)"/>
<g filter="url(#bl)">
<ellipse cx="96" cy="16" rx="4.5" ry="5.2" fill="#eef7fd" opacity="0.9"/>
<path d="M36 60 q2-8 8-10 q6-2 10 2 q5 4 6 12 q0 6 -2 14 L61 76 q4-2 8 0 q3-4 7-1 q3-3 6 0 q4-2 7 3 q5-2 9 3 q6-2 10 3 q8-1 12 2 q6 0 10 3 l2 4 L136 102 H60 L58 90z" fill="#3f8f3a"/>
<path d="M62 84 q6-6 12-4 q4-4 8 0 q5-2 9 3 q6-1 10 4 q8 0 12 4 l-2 12 H62z" fill="#2f7c30"/>
<path d="M167 103 q1-14 6-26 q4-6 7-5 q5 0 8 3 q1-12 5-19 q6-3 10-2 q6-1 12 0 q6-4 11-3 q5-4 10-3 q8-2 14-2 q6-3 10-4 V104z" fill="#327f30"/>
<path d="M180 80 q6-10 14-6 q10-6 16 2 q10-4 14 4 q10-2 16 6 q8 0 14 6 V100 H180z" fill="#256f28"/>
<path d="M249 24 q3-6 8-4 q2-4 4.5-3 V44 q-6 2-9 0 q-5-8-3.5-17z" fill="#3f9040"/>
<path d="M251 1.5 q5-2 10.5 0 V7 q-6 1-10.5-2z" fill="#3f9040"/>
<rect x="254" y="43" width="8" height="61" fill="#327f30"/><circle cx="214.8" cy="82.7" r="2.2" fill="#1e4e22" opacity="0.6"/><circle cx="225.1" cy="81.5" r="1.8" fill="#1e4e22" opacity="0.6"/><circle cx="219.4" cy="77.3" r="2.4" fill="#3f8c38" opacity="0.6"/><circle cx="190.2" cy="81.2" r="2.0" fill="#1e4e22" opacity="0.6"/><circle cx="192.5" cy="74.3" r="3.1" fill="#22582a" opacity="0.6"/><circle cx="240.2" cy="49.9" r="1.8" fill="#5aa444" opacity="0.6"/><circle cx="233.4" cy="74.0" r="3.0" fill="#2a6a28" opacity="0.6"/><circle cx="225.9" cy="82.3" r="2.4" fill="#3f8c38" opacity="0.6"/><circle cx="229.0" cy="77.9" r="1.6" fill="#2a6a28" opacity="0.6"/><circle cx="190.8" cy="71.2" r="1.4" fill="#3f8c38" opacity="0.6"/><circle cx="193.5" cy="84.7" r="1.9" fill="#5aa444" opacity="0.6"/><circle cx="258.2" cy="63.8" r="1.7" fill="#22582a" opacity="0.6"/><circle cx="232.0" cy="80.8" r="2.7" fill="#347c30" opacity="0.6"/><circle cx="193.4" cy="99.8" r="2.3" fill="#5aa444" opacity="0.6"/><circle cx="234.9" cy="85.9" r="2.7" fill="#3f8c38" opacity="0.6"/><circle cx="205.8" cy="57.0" r="2.2" fill="#347c30" opacity="0.6"/><circle cx="251.6" cy="54.4" r="2.8" fill="#5aa444" opacity="0.6"/><circle cx="233.7" cy="61.1" r="1.4" fill="#5aa444" opacity="0.6"/><circle cx="192.3" cy="87.2" r="2.0" fill="#347c30" opacity="0.6"/><circle cx="204.5" cy="90.7" r="1.7" fill="#347c30" opacity="0.6"/><circle cx="218.5" cy="74.4" r="3.2" fill="#1e4e22" opacity="0.6"/><circle cx="235.3" cy="79.1" r="2.0" fill="#1e4e22" opacity="0.6"/><circle cx="231.1" cy="95.5" r="1.5" fill="#1e4e22" opacity="0.6"/><circle cx="210.4" cy="68.3" r="3.0" fill="#2a6a28" opacity="0.6"/><circle cx="191.9" cy="100.3" r="2.2" fill="#3f8c38" opacity="0.6"/><circle cx="209.8" cy="90.1" r="3.2" fill="#1e4e22" opacity="0.6"/><circle cx="182.7" cy="81.3" r="2.2" fill="#1e4e22" opacity="0.6"/><circle cx="242.7" cy="99.7" r="2.3" fill="#3f8c38" opacity="0.6"/><circle cx="179.5" cy="84.9" r="1.8" fill="#5aa444" opacity="0.6"/><circle cx="191.0" cy="69.9" r="2.2" fill="#1e4e22" opacity="0.6"/><circle cx="193.4" cy="80.2" r="1.9" fill="#3f8c38" opacity="0.6"/><circle cx="191.4" cy="93.3" r="1.4" fill="#22582a" opacity="0.6"/><circle cx="240.8" cy="103.8" r="1.8" fill="#22582a" opacity="0.6"/><circle cx="225.8" cy="81.5" r="1.7" fill="#1e4e22" opacity="0.6"/><circle cx="230.3" cy="74.2" r="2.4" fill="#347c30" opacity="0.6"/><circle cx="240.9" cy="77.3" r="1.9" fill="#3f8c38" opacity="0.6"/><circle cx="197.1" cy="82.9" r="3.1" fill="#5aa444" opacity="0.6"/><circle cx="169.0" cy="100.4" r="1.6" fill="#3f8c38" opacity="0.6"/><circle cx="252.8" cy="78.8" r="2.8" fill="#2a6a28" opacity="0.6"/><circle cx="168.1" cy="103.7" r="2.1" fill="#347c30" opacity="0.6"/><circle cx="188.4" cy="100.3" r="2.9" fill="#5aa444" opacity="0.6"/><circle cx="250.7" cy="101.6" r="1.7" fill="#1e4e22" opacity="0.6"/><circle cx="189.9" cy="74.6" r="2.7" fill="#347c30" opacity="0.6"/><circle cx="230.3" cy="93.4" r="1.7" fill="#3f8c38" opacity="0.6"/><circle cx="260.8" cy="79.5" r="3.0" fill="#2a6a28" opacity="0.6"/><circle cx="253.1" cy="74.1" r="2.8" fill="#5aa444" opacity="0.6"/><circle cx="202.7" cy="55.2" r="2.7" fill="#1e4e22" opacity="0.6"/><circle cx="256.3" cy="78.2" r="1.9" fill="#2a6a28" opacity="0.6"/><circle cx="239.9" cy="101.3" r="2.0" fill="#1e4e22" opacity="0.6"/><circle cx="207.2" cy="61.1" r="1.5" fill="#1e4e22" opacity="0.6"/><circle cx="247.5" cy="72.9" r="1.9" fill="#347c30" opacity="0.6"/><circle cx="199.8" cy="69.9" r="2.8" fill="#347c30" opacity="0.6"/><circle cx="233.5" cy="81.8" r="2.8" fill="#1e4e22" opacity="0.6"/><circle cx="246.2" cy="60.8" r="1.4" fill="#2a6a28" opacity="0.6"/><circle cx="216.4" cy="72.7" r="2.6" fill="#347c30" opacity="0.6"/><circle cx="246.8" cy="57.1" r="2.5" fill="#22582a" opacity="0.6"/><circle cx="199.3" cy="88.1" r="2.7" fill="#5aa444" opacity="0.6"/><circle cx="208.1" cy="79.6" r="2.3" fill="#22582a" opacity="0.6"/><circle cx="218.0" cy="94.6" r="1.9" fill="#5aa444" opacity="0.6"/><circle cx="181.6" cy="95.3" r="2.7" fill="#1e4e22" opacity="0.6"/><circle cx="223.2" cy="65.9" r="2.4" fill="#347c30" opacity="0.6"/><circle cx="171.7" cy="99.7" r="2.0" fill="#347c30" opacity="0.6"/><circle cx="189.6" cy="95.6" r="1.9" fill="#2a6a28" opacity="0.6"/><circle cx="196.4" cy="62.9" r="1.6" fill="#1e4e22" opacity="0.6"/><circle cx="193.7" cy="80.6" r="2.5" fill="#1e4e22" opacity="0.6"/><circle cx="222.9" cy="102.3" r="1.5" fill="#1e4e22" opacity="0.6"/><circle cx="174.9" cy="79.6" r="2.0" fill="#347c30" opacity="0.6"/><circle cx="241.9" cy="49.2" r="2.4" fill="#5aa444" opacity="0.6"/><circle cx="259.0" cy="64.5" r="2.3" fill="#1e4e22" opacity="0.6"/><circle cx="225.1" cy="80.2" r="2.0" fill="#5aa444" opacity="0.6"/><circle cx="204.1" cy="61.3" r="2.8" fill="#1e4e22" opacity="0.6"/><circle cx="182.5" cy="78.1" r="3.2" fill="#347c30" opacity="0.6"/><circle cx="167.5" cy="103.8" r="3.1" fill="#1e4e22" opacity="0.6"/><circle cx="191.2" cy="95.4" r="2.4" fill="#22582a" opacity="0.6"/><circle cx="235.4" cy="75.6" r="1.8" fill="#1e4e22" opacity="0.6"/><circle cx="220.1" cy="70.9" r="1.6" fill="#1e4e22" opacity="0.6"/><circle cx="230.9" cy="56.1" r="2.4" fill="#347c30" opacity="0.6"/><circle cx="258.9" cy="93.3" r="1.9" fill="#5aa444" opacity="0.6"/><circle cx="211.4" cy="103.2" r="2.9" fill="#347c30" opacity="0.6"/><circle cx="234.5" cy="91.8" r="3.2" fill="#2a6a28" opacity="0.6"/><circle cx="244.1" cy="100.4" r="3.1" fill="#3f8c38" opacity="0.6"/><circle cx="254.5" cy="46.9" r="2.6" fill="#3f8c38" opacity="0.6"/><circle cx="247.3" cy="69.5" r="2.9" fill="#5aa444" opacity="0.6"/><circle cx="228.6" cy="82.2" r="1.5" fill="#22582a" opacity="0.6"/><circle cx="259.2" cy="85.1" r="2.9" fill="#22582a" opacity="0.6"/><circle cx="180.6" cy="94.1" r="1.6" fill="#3f8c38" opacity="0.6"/><circle cx="238.0" cy="82.6" r="3.0" fill="#5aa444" opacity="0.6"/><circle cx="199.4" cy="67.8" r="1.3" fill="#1e4e22" opacity="0.6"/><circle cx="217.4" cy="55.2" r="2.2" fill="#1e4e22" opacity="0.6"/><circle cx="198.0" cy="97.7" r="2.7" fill="#3f8c38" opacity="0.6"/><circle cx="230.0" cy="73.9" r="2.3" fill="#1e4e22" opacity="0.6"/><circle cx="195.9" cy="95.0" r="1.4" fill="#5aa444" opacity="0.6"/><circle cx="176.0" cy="77.2" r="3.0" fill="#3f8c38" opacity="0.6"/><circle cx="174.3" cy="94.0" r="2.5" fill="#347c30" opacity="0.6"/><circle cx="186.8" cy="103.3" r="1.7" fill="#347c30" opacity="0.6"/><circle cx="220.6" cy="87.5" r="2.0" fill="#3f8c38" opacity="0.6"/><circle cx="185.0" cy="87.1" r="2.1" fill="#1e4e22" opacity="0.6"/><circle cx="256.1" cy="101.4" r="3.1" fill="#22582a" opacity="0.6"/><circle cx="210.7" cy="65.4" r="2.3" fill="#1e4e22" opacity="0.6"/><circle cx="212.7" cy="84.3" r="2.7" fill="#347c30" opacity="0.6"/><circle cx="223.0" cy="68.9" r="3.2" fill="#3f8c38" opacity="0.6"/><circle cx="260.3" cy="57.9" r="1.7" fill="#3f8c38" opacity="0.6"/><circle cx="243.2" cy="65.1" r="1.2" fill="#5aa444" opacity="0.6"/><circle cx="259.3" cy="45.6" r="1.9" fill="#5aa444" opacity="0.6"/><circle cx="216.4" cy="85.6" r="1.7" fill="#1e4e22" opacity="0.6"/><circle cx="230.7" cy="98.2" r="3.1" fill="#22582a" opacity="0.6"/><circle cx="207.4" cy="60.9" r="1.6" fill="#347c30" opacity="0.6"/><circle cx="209.5" cy="81.7" r="3.2" fill="#22582a" opacity="0.6"/><circle cx="239.7" cy="63.2" r="3.2" fill="#1e4e22" opacity="0.6"/><circle cx="238.8" cy="68.4" r="2.7" fill="#347c30" opacity="0.6"/><circle cx="211.6" cy="78.4" r="1.9" fill="#5aa444" opacity="0.6"/><circle cx="259.3" cy="54.4" r="2.9" fill="#5aa444" opacity="0.6"/><circle cx="168.3" cy="101.2" r="3.0" fill="#1e4e22" opacity="0.6"/><circle cx="198.6" cy="66.3" r="2.6" fill="#1e4e22" opacity="0.6"/><circle cx="242.5" cy="53.2" r="2.3" fill="#5aa444" opacity="0.6"/><circle cx="222.2" cy="91.6" r="1.8" fill="#347c30" opacity="0.6"/><circle cx="249.3" cy="52.1" r="1.6" fill="#347c30" opacity="0.6"/><circle cx="258.2" cy="75.7" r="2.8" fill="#2a6a28" opacity="0.6"/><circle cx="243.2" cy="85.0" r="2.8" fill="#3f8c38" opacity="0.6"/><circle cx="197.7" cy="94.1" r="1.9" fill="#3f8c38" opacity="0.6"/><circle cx="194.5" cy="91.4" r="1.8" fill="#347c30" opacity="0.6"/><circle cx="258.1" cy="56.0" r="1.6" fill="#22582a" opacity="0.6"/><circle cx="201.1" cy="56.1" r="1.4" fill="#5aa444" opacity="0.6"/><circle cx="229.6" cy="92.0" r="2.5" fill="#347c30" opacity="0.6"/><circle cx="228.5" cy="92.8" r="1.8" fill="#1e4e22" opacity="0.6"/><circle cx="249.1" cy="53.2" r="2.5" fill="#1e4e22" opacity="0.6"/><circle cx="210.6" cy="77.7" r="2.2" fill="#3f8c38" opacity="0.6"/><circle cx="236.1" cy="66.6" r="1.7" fill="#3f8c38" opacity="0.6"/><circle cx="215.8" cy="93.9" r="2.9" fill="#347c30" opacity="0.6"/><circle cx="203.2" cy="67.4" r="1.2" fill="#347c30" opacity="0.6"/><circle cx="196.4" cy="69.0" r="2.9" fill="#22582a" opacity="0.6"/><circle cx="261.3" cy="48.1" r="1.2" fill="#3f8c38" opacity="0.6"/><circle cx="240.6" cy="61.2" r="1.5" fill="#22582a" opacity="0.6"/><circle cx="252.8" cy="63.7" r="2.1" fill="#1e4e22" opacity="0.6"/><circle cx="184.7" cy="94.0" r="3.2" fill="#1e4e22" opacity="0.6"/><circle cx="167.8" cy="102.6" r="2.5" fill="#3f8c38" opacity="0.6"/><circle cx="199.9" cy="102.7" r="3.0" fill="#5aa444" opacity="0.6"/><circle cx="259.4" cy="97.5" r="2.1" fill="#2a6a28" opacity="0.6"/><circle cx="228.0" cy="81.4" r="2.3" fill="#3f8c38" opacity="0.6"/><circle cx="250.1" cy="50.8" r="2.9" fill="#3f8c38" opacity="0.6"/><circle cx="169.5" cy="101.8" r="3.0" fill="#347c30" opacity="0.6"/><circle cx="226.0" cy="58.7" r="2.1" fill="#347c30" opacity="0.6"/><circle cx="195.8" cy="103.9" r="1.3" fill="#5aa444" opacity="0.6"/><circle cx="194.3" cy="69.5" r="1.4" fill="#5aa444" opacity="0.6"/><circle cx="181.1" cy="96.4" r="2.4" fill="#347c30" opacity="0.6"/><circle cx="237.3" cy="61.4" r="2.3" fill="#3f8c38" opacity="0.6"/><circle cx="224.3" cy="58.8" r="3.1" fill="#3f8c38" opacity="0.6"/><circle cx="176.1" cy="81.4" r="2.4" fill="#5aa444" opacity="0.6"/><circle cx="234.8" cy="73.3" r="1.5" fill="#22582a" opacity="0.6"/><circle cx="239.5" cy="77.0" r="1.9" fill="#22582a" opacity="0.6"/><circle cx="234.5" cy="60.4" r="1.4" fill="#3f8c38" opacity="0.6"/><circle cx="255.6" cy="58.5" r="1.6" fill="#3f8c38" opacity="0.6"/><circle cx="185.4" cy="99.4" r="2.3" fill="#22582a" opacity="0.6"/><circle cx="239.2" cy="73.0" r="2.7" fill="#1e4e22" opacity="0.6"/><circle cx="241.2" cy="96.6" r="2.3" fill="#22582a" opacity="0.6"/><circle cx="219.5" cy="71.6" r="2.9" fill="#22582a" opacity="0.6"/><circle cx="193.2" cy="59.4" r="2.1" fill="#3f8c38" opacity="0.6"/><circle cx="185.1" cy="99.9" r="1.9" fill="#5aa444" opacity="0.6"/><circle cx="196.5" cy="100.5" r="1.6" fill="#2a6a28" opacity="0.6"/><circle cx="197.8" cy="97.1" r="2.7" fill="#347c30" opacity="0.6"/><circle cx="248.6" cy="70.2" r="2.7" fill="#5aa444" opacity="0.6"/><circle cx="191.1" cy="72.2" r="3.1" fill="#5aa444" opacity="0.6"/><circle cx="228.7" cy="71.6" r="1.4" fill="#3f8c38" opacity="0.6"/><circle cx="187.9" cy="92.7" r="2.3" fill="#22582a" opacity="0.6"/><circle cx="254.7" cy="97.4" r="3.1" fill="#3f8c38" opacity="0.6"/><circle cx="231.9" cy="57.4" r="2.6" fill="#1e4e22" opacity="0.6"/><circle cx="250.9" cy="47.3" r="2.6" fill="#1e4e22" opacity="0.6"/><circle cx="250.7" cy="95.4" r="2.2" fill="#5aa444" opacity="0.6"/><circle cx="201.0" cy="83.1" r="2.7" fill="#2a6a28" opacity="0.6"/><circle cx="246.5" cy="67.7" r="2.8" fill="#5aa444" opacity="0.6"/><circle cx="211.2" cy="72.6" r="2.3" fill="#1e4e22" opacity="0.6"/><circle cx="238.2" cy="78.3" r="2.5" fill="#1e4e22" opacity="0.6"/><circle cx="174.3" cy="99.2" r="3.1" fill="#1e4e22" opacity="0.6"/><circle cx="251.5" cy="59.2" r="2.2" fill="#1e4e22" opacity="0.6"/><circle cx="223.6" cy="92.2" r="3.2" fill="#22582a" opacity="0.6"/><circle cx="192.3" cy="102.3" r="1.8" fill="#5aa444" opacity="0.6"/><circle cx="225.2" cy="85.9" r="1.4" fill="#5aa444" opacity="0.6"/><circle cx="203.9" cy="77.0" r="1.4" fill="#1e4e22" opacity="0.6"/><circle cx="172.0" cy="91.9" r="3.1" fill="#5aa444" opacity="0.6"/><circle cx="207.0" cy="99.6" r="2.4" fill="#1e4e22" opacity="0.6"/><circle cx="228.4" cy="69.8" r="3.0" fill="#1e4e22" opacity="0.6"/><circle cx="188.0" cy="88.1" r="1.6" fill="#347c30" opacity="0.6"/><circle cx="205.7" cy="61.2" r="1.6" fill="#5aa444" opacity="0.6"/><circle cx="206.2" cy="82.4" r="2.8" fill="#3f8c38" opacity="0.6"/><circle cx="207.3" cy="98.7" r="1.8" fill="#3f8c38" opacity="0.6"/><circle cx="198.5" cy="84.2" r="1.9" fill="#22582a" opacity="0.6"/><circle cx="261.4" cy="45.0" r="2.0" fill="#1e4e22" opacity="0.6"/><circle cx="232.6" cy="97.3" r="3.1" fill="#3f8c38" opacity="0.6"/><circle cx="219.9" cy="78.4" r="3.0" fill="#5aa444" opacity="0.6"/><circle cx="190.2" cy="102.4" r="2.0" fill="#5aa444" opacity="0.6"/><circle cx="206.3" cy="95.2" r="1.4" fill="#5aa444" opacity="0.6"/><circle cx="227.3" cy="89.0" r="2.8" fill="#1e4e22" opacity="0.6"/><circle cx="222.5" cy="94.6" r="3.0" fill="#22582a" opacity="0.6"/><circle cx="229.2" cy="54.8" r="2.1" fill="#347c30" opacity="0.6"/><circle cx="207.6" cy="72.3" r="2.6" fill="#2a6a28" opacity="0.6"/><circle cx="221.2" cy="98.2" r="2.4" fill="#347c30" opacity="0.6"/><circle cx="239.8" cy="73.3" r="1.5" fill="#347c30" opacity="0.6"/><circle cx="241.7" cy="99.4" r="2.3" fill="#22582a" opacity="0.6"/><circle cx="204.5" cy="98.8" r="3.0" fill="#3f8c38" opacity="0.6"/><circle cx="247.3" cy="57.1" r="2.4" fill="#347c30" opacity="0.6"/><circle cx="183.4" cy="82.2" r="1.6" fill="#1e4e22" opacity="0.6"/><circle cx="222.6" cy="103.0" r="1.6" fill="#5aa444" opacity="0.6"/><circle cx="233.6" cy="94.7" r="2.9" fill="#347c30" opacity="0.6"/><circle cx="185.6" cy="84.5" r="2.3" fill="#2a6a28" opacity="0.6"/><circle cx="203.3" cy="102.1" r="2.6" fill="#22582a" opacity="0.6"/><circle cx="259.8" cy="92.9" r="2.8" fill="#347c30" opacity="0.6"/><circle cx="200.8" cy="99.6" r="2.7" fill="#5aa444" opacity="0.6"/><circle cx="242.6" cy="101.9" r="2.6" fill="#2a6a28" opacity="0.6"/><circle cx="216.7" cy="100.9" r="2.2" fill="#2a6a28" opacity="0.6"/><circle cx="257.4" cy="62.4" r="3.0" fill="#22582a" opacity="0.6"/><circle cx="201.9" cy="86.6" r="2.7" fill="#3f8c38" opacity="0.6"/><circle cx="232.1" cy="70.8" r="2.2" fill="#5aa444" opacity="0.6"/><circle cx="244.8" cy="100.6" r="1.2" fill="#2a6a28" opacity="0.6"/><circle cx="193.4" cy="87.5" r="1.6" fill="#5aa444" opacity="0.6"/><circle cx="171.2" cy="90.2" r="3.0" fill="#347c30" opacity="0.6"/><circle cx="207.8" cy="56.6" r="2.7" fill="#5aa444" opacity="0.6"/><circle cx="208.5" cy="99.3" r="1.8" fill="#1e4e22" opacity="0.6"/><circle cx="232.3" cy="78.7" r="1.5" fill="#2a6a28" opacity="0.6"/><circle cx="178.1" cy="100.4" r="2.1" fill="#5aa444" opacity="0.6"/><circle cx="167.1" cy="104.0" r="2.5" fill="#3f8c38" opacity="0.6"/><circle cx="188.8" cy="99.1" r="3.1" fill="#1e4e22" opacity="0.6"/><circle cx="176.8" cy="99.2" r="3.2" fill="#5aa444" opacity="0.6"/><circle cx="207.5" cy="91.8" r="2.3" fill="#3f8c38" opacity="0.6"/><circle cx="234.7" cy="91.1" r="1.7" fill="#22582a" opacity="0.6"/><circle cx="224.4" cy="71.6" r="1.6" fill="#1e4e22" opacity="0.6"/><circle cx="260.1" cy="54.6" r="1.3" fill="#1e4e22" opacity="0.6"/><circle cx="256.6" cy="60.7" r="2.7" fill="#3f8c38" opacity="0.6"/><circle cx="223.8" cy="85.7" r="2.3" fill="#347c30" opacity="0.6"/><circle cx="252.9" cy="54.2" r="1.7" fill="#3f8c38" opacity="0.6"/><circle cx="176.3" cy="94.5" r="1.4" fill="#347c30" opacity="0.6"/><circle cx="241.3" cy="48.8" r="1.8" fill="#5aa444" opacity="0.6"/><circle cx="175.3" cy="89.2" r="2.6" fill="#2a6a28" opacity="0.6"/><circle cx="255.1" cy="53.0" r="2.9" fill="#347c30" opacity="0.6"/><circle cx="181.5" cy="91.3" r="2.4" fill="#5aa444" opacity="0.6"/><circle cx="223.6" cy="54.5" r="1.8" fill="#3f8c38" opacity="0.6"/><circle cx="246.0" cy="91.4" r="1.9" fill="#5aa444" opacity="0.6"/><circle cx="261.2" cy="48.2" r="2.1" fill="#3f8c38" opacity="0.6"/><circle cx="196.1" cy="82.9" r="3.0" fill="#3f8c38" opacity="0.6"/><circle cx="198.5" cy="91.5" r="2.5" fill="#347c30" opacity="0.6"/><circle cx="175.4" cy="91.6" r="2.8" fill="#2a6a28" opacity="0.6"/><circle cx="253.8" cy="75.2" r="3.0" fill="#1e4e22" opacity="0.6"/><circle cx="201.6" cy="71.0" r="2.8" fill="#347c30" opacity="0.6"/><circle cx="198.7" cy="96.6" r="1.5" fill="#3f8c38" opacity="0.6"/><circle cx="248.1" cy="54.8" r="2.7" fill="#5aa444" opacity="0.6"/><circle cx="204.2" cy="57.7" r="2.8" fill="#3f8c38" opacity="0.6"/><circle cx="190.4" cy="77.2" r="1.3" fill="#347c30" opacity="0.6"/><circle cx="250.5" cy="58.4" r="2.3" fill="#3f8c38" opacity="0.6"/><circle cx="256.2" cy="78.5" r="3.0" fill="#2a6a28" opacity="0.6"/><circle cx="215.3" cy="92.5" r="2.7" fill="#1e4e22" opacity="0.6"/><circle cx="258.0" cy="67.8" r="2.0" fill="#3f8c38" opacity="0.6"/><circle cx="235.5" cy="62.5" r="2.7" fill="#22582a" opacity="0.6"/><circle cx="172.6" cy="95.7" r="1.6" fill="#2a6a28" opacity="0.6"/><circle cx="177.3" cy="84.9" r="2.5" fill="#347c30" opacity="0.6"/><circle cx="218.1" cy="56.8" r="2.5" fill="#3f8c38" opacity="0.6"/><circle cx="183.0" cy="77.8" r="2.5" fill="#3f8c38" opacity="0.6"/><circle cx="205.5" cy="82.6" r="2.5" fill="#5aa444" opacity="0.6"/><circle cx="186.4" cy="90.7" r="1.4" fill="#1e4e22" opacity="0.6"/><circle cx="237.7" cy="50.1" r="2.3" fill="#3f8c38" opacity="0.6"/><circle cx="248.0" cy="78.6" r="1.5" fill="#2a6a28" opacity="0.6"/><circle cx="205.8" cy="73.9" r="1.7" fill="#3f8c38" opacity="0.6"/><circle cx="106.9" cy="98.3" r="2.0" fill="#1e4e22" opacity="0.6"/><circle cx="96.7" cy="87.4" r="2.5" fill="#1e4e22" opacity="0.6"/><circle cx="51.5" cy="71.8" r="1.7" fill="#347c30" opacity="0.6"/><circle cx="88.5" cy="85.8" r="1.2" fill="#3f8c38" opacity="0.6"/><circle cx="104.4" cy="89.8" r="2.2" fill="#347c30" opacity="0.6"/><circle cx="106.3" cy="91.4" r="1.9" fill="#2a6a28" opacity="0.6"/><circle cx="127.1" cy="99.7" r="1.7" fill="#3f8c38" opacity="0.6"/><circle cx="85.7" cy="92.4" r="1.2" fill="#22582a" opacity="0.6"/><circle cx="54.5" cy="64.4" r="2.2" fill="#3f8c38" opacity="0.6"/><circle cx="55.3" cy="96.0" r="1.4" fill="#3f8c38" opacity="0.6"/><circle cx="83.0" cy="85.9" r="1.5" fill="#5aa444" opacity="0.6"/><circle cx="104.1" cy="92.0" r="1.8" fill="#347c30" opacity="0.6"/><circle cx="77.0" cy="87.6" r="2.0" fill="#1e4e22" opacity="0.6"/><circle cx="79.5" cy="85.3" r="1.3" fill="#1e4e22" opacity="0.6"/><circle cx="86.2" cy="95.9" r="2.3" fill="#5aa444" opacity="0.6"/><circle cx="54.6" cy="87.3" r="1.4" fill="#3f8c38" opacity="0.6"/><circle cx="48.3" cy="62.1" r="1.9" fill="#1e4e22" opacity="0.6"/><circle cx="114.2" cy="95.9" r="1.6" fill="#3f8c38" opacity="0.6"/><circle cx="56.7" cy="93.6" r="1.3" fill="#2a6a28" opacity="0.6"/><circle cx="85.4" cy="92.8" r="2.5" fill="#1e4e22" opacity="0.6"/><circle cx="127.0" cy="97.3" r="2.5" fill="#22582a" opacity="0.6"/><circle cx="50.3" cy="56.0" r="2.1" fill="#3f8c38" opacity="0.6"/><circle cx="88.8" cy="98.3" r="1.9" fill="#5aa444" opacity="0.6"/><circle cx="132.5" cy="100.0" r="1.1" fill="#22582a" opacity="0.6"/><circle cx="134.2" cy="99.2" r="1.7" fill="#2a6a28" opacity="0.6"/><circle cx="114.7" cy="98.7" r="2.0" fill="#22582a" opacity="0.6"/><circle cx="101.6" cy="95.0" r="2.4" fill="#5aa444" opacity="0.6"/><circle cx="39.8" cy="60.8" r="1.5" fill="#5aa444" opacity="0.6"/><circle cx="39.5" cy="62.1" r="1.3" fill="#3f8c38" opacity="0.6"/><circle cx="89.8" cy="97.0" r="2.6" fill="#2a6a28" opacity="0.6"/><circle cx="110.5" cy="95.2" r="2.0" fill="#347c30" opacity="0.6"/><circle cx="96.1" cy="90.5" r="1.1" fill="#5aa444" opacity="0.6"/><circle cx="65.8" cy="80.4" r="1.5" fill="#22582a" opacity="0.6"/><circle cx="83.5" cy="95.6" r="2.5" fill="#5aa444" opacity="0.6"/><circle cx="67.2" cy="95.7" r="2.2" fill="#22582a" opacity="0.6"/><circle cx="123.7" cy="98.4" r="2.2" fill="#22582a" opacity="0.6"/><circle cx="49.5" cy="78.0" r="1.7" fill="#3f8c38" opacity="0.6"/><circle cx="84.4" cy="97.9" r="2.1" fill="#2a6a28" opacity="0.6"/><circle cx="53.2" cy="85.6" r="1.8" fill="#22582a" opacity="0.6"/><circle cx="38.1" cy="78.5" r="2.0" fill="#2a6a28" opacity="0.6"/><circle cx="123.1" cy="94.8" r="2.3" fill="#22582a" opacity="0.6"/><circle cx="71.5" cy="79.8" r="1.7" fill="#347c30" opacity="0.6"/><circle cx="57.3" cy="88.6" r="2.2" fill="#1e4e22" opacity="0.6"/><circle cx="93.0" cy="86.5" r="2.5" fill="#5aa444" opacity="0.6"/><circle cx="135.5" cy="99.4" r="2.5" fill="#1e4e22" opacity="0.6"/><circle cx="41.1" cy="97.3" r="1.1" fill="#347c30" opacity="0.6"/><circle cx="54.5" cy="55.1" r="2.2" fill="#22582a" opacity="0.6"/><circle cx="62.6" cy="81.2" r="1.1" fill="#347c30" opacity="0.6"/><circle cx="125.0" cy="97.8" r="1.8" fill="#5aa444" opacity="0.6"/><circle cx="133.7" cy="98.5" r="1.2" fill="#3f8c38" opacity="0.6"/><circle cx="102.6" cy="88.6" r="1.4" fill="#22582a" opacity="0.6"/><circle cx="76.7" cy="90.8" r="1.6" fill="#5aa444" opacity="0.6"/><circle cx="80.8" cy="90.6" r="1.7" fill="#347c30" opacity="0.6"/><circle cx="70.4" cy="82.9" r="1.9" fill="#3f8c38" opacity="0.6"/><circle cx="39.6" cy="65.9" r="2.1" fill="#3f8c38" opacity="0.6"/><circle cx="103.8" cy="99.4" r="1.3" fill="#2a6a28" opacity="0.6"/><circle cx="72.6" cy="92.1" r="2.0" fill="#2a6a28" opacity="0.6"/><circle cx="93.9" cy="89.2" r="1.6" fill="#347c30" opacity="0.6"/><circle cx="100.7" cy="86.9" r="2.0" fill="#5aa444" opacity="0.6"/><circle cx="39.8" cy="66.7" r="2.1" fill="#1e4e22" opacity="0.6"/><circle cx="47.6" cy="77.5" r="1.8" fill="#347c30" opacity="0.6"/><circle cx="131.6" cy="98.9" r="1.4" fill="#5aa444" opacity="0.6"/><circle cx="41.8" cy="62.4" r="2.1" fill="#2a6a28" opacity="0.6"/><circle cx="102.1" cy="96.3" r="2.4" fill="#3f8c38" opacity="0.6"/><circle cx="103.2" cy="91.6" r="1.7" fill="#3f8c38" opacity="0.6"/><circle cx="44.7" cy="92.8" r="1.7" fill="#22582a" opacity="0.6"/><circle cx="100.2" cy="92.7" r="2.0" fill="#5aa444" opacity="0.6"/><circle cx="85.4" cy="99.4" r="1.1" fill="#2a6a28" opacity="0.6"/><circle cx="126.1" cy="99.0" r="1.0" fill="#5aa444" opacity="0.6"/><circle cx="92.7" cy="96.6" r="1.8" fill="#5aa444" opacity="0.6"/><circle cx="46.3" cy="56.9" r="1.7" fill="#2a6a28" opacity="0.6"/><circle cx="120.6" cy="96.8" r="2.1" fill="#3f8c38" opacity="0.6"/><circle cx="48.0" cy="76.4" r="1.9" fill="#347c30" opacity="0.6"/><circle cx="39.6" cy="62.4" r="2.2" fill="#5aa444" opacity="0.6"/><circle cx="47.8" cy="81.1" r="2.4" fill="#5aa444" opacity="0.6"/><circle cx="110.0" cy="93.8" r="1.5" fill="#1e4e22" opacity="0.6"/><circle cx="86.9" cy="83.8" r="2.4" fill="#2a6a28" opacity="0.6"/><circle cx="84.2" cy="93.5" r="1.7" fill="#1e4e22" opacity="0.6"/><circle cx="51.0" cy="84.4" r="2.6" fill="#5aa444" opacity="0.6"/><circle cx="112.6" cy="93.9" r="1.4" fill="#2a6a28" opacity="0.6"/><circle cx="59.6" cy="82.9" r="2.0" fill="#347c30" opacity="0.6"/><circle cx="126.0" cy="98.6" r="1.5" fill="#1e4e22" opacity="0.6"/><circle cx="46.6" cy="93.4" r="1.1" fill="#3f8c38" opacity="0.6"/><circle cx="102.5" cy="89.6" r="2.5" fill="#347c30" opacity="0.6"/><circle cx="79.1" cy="91.9" r="1.3" fill="#1e4e22" opacity="0.6"/><circle cx="116.3" cy="97.2" r="1.9" fill="#22582a" opacity="0.6"/><circle cx="52.9" cy="86.7" r="2.3" fill="#3f8c38" opacity="0.6"/><circle cx="99.3" cy="88.3" r="1.0" fill="#347c30" opacity="0.6"/><circle cx="83.7" cy="97.2" r="1.1" fill="#1e4e22" opacity="0.6"/><circle cx="55.5" cy="98.5" r="1.4" fill="#1e4e22" opacity="0.6"/><circle cx="74.1" cy="83.4" r="2.2" fill="#22582a" opacity="0.6"/><circle cx="129.0" cy="96.9" r="1.0" fill="#2a6a28" opacity="0.6"/><circle cx="129.9" cy="99.1" r="1.5" fill="#1e4e22" opacity="0.6"/><circle cx="83.4" cy="98.1" r="1.9" fill="#3f8c38" opacity="0.6"/><circle cx="50.9" cy="84.3" r="1.5" fill="#22582a" opacity="0.6"/><circle cx="71.2" cy="88.0" r="1.3" fill="#22582a" opacity="0.6"/><circle cx="48.4" cy="68.4" r="2.0" fill="#3f8c38" opacity="0.6"/><circle cx="62.3" cy="95.3" r="1.4" fill="#347c30" opacity="0.6"/><circle cx="132.9" cy="99.1" r="2.1" fill="#5aa444" opacity="0.6"/><circle cx="81.4" cy="95.3" r="1.6" fill="#1e4e22" opacity="0.6"/><circle cx="125.6" cy="100.0" r="1.9" fill="#347c30" opacity="0.6"/><circle cx="112.9" cy="97.3" r="1.5" fill="#2a6a28" opacity="0.6"/><circle cx="66.2" cy="97.2" r="1.2" fill="#347c30" opacity="0.6"/><circle cx="128.4" cy="98.2" r="1.1" fill="#1e4e22" opacity="0.6"/><circle cx="41.5" cy="68.5" r="1.5" fill="#2a6a28" opacity="0.6"/><circle cx="133.1" cy="99.2" r="2.2" fill="#22582a" opacity="0.6"/><circle cx="129.4" cy="98.2" r="2.2" fill="#347c30" opacity="0.6"/><circle cx="57.4" cy="80.9" r="2.1" fill="#347c30" opacity="0.6"/><circle cx="124.1" cy="98.6" r="2.1" fill="#2a6a28" opacity="0.6"/><circle cx="47.6" cy="56.3" r="2.2" fill="#2a6a28" opacity="0.6"/><circle cx="89.0" cy="92.5" r="2.5" fill="#347c30" opacity="0.6"/><circle cx="41.6" cy="85.9" r="2.5" fill="#2a6a28" opacity="0.6"/><circle cx="75.5" cy="94.9" r="2.4" fill="#347c30" opacity="0.6"/><circle cx="39.6" cy="78.1" r="1.3" fill="#3f8c38" opacity="0.6"/><circle cx="67.0" cy="97.3" r="2.1" fill="#1e4e22" opacity="0.6"/><circle cx="66.7" cy="80.9" r="2.1" fill="#2a6a28" opacity="0.6"/><circle cx="86.3" cy="91.7" r="1.4" fill="#3f8c38" opacity="0.6"/><circle cx="50.0" cy="64.0" r="1.6" fill="#3f8c38" opacity="0.6"/><circle cx="46.5" cy="88.7" r="2.2" fill="#347c30" opacity="0.6"/><circle cx="126.0" cy="99.6" r="1.8" fill="#3f8c38" opacity="0.6"/><circle cx="40.2" cy="93.7" r="1.9" fill="#2a6a28" opacity="0.6"/><circle cx="49.2" cy="90.1" r="1.9" fill="#3f8c38" opacity="0.6"/><circle cx="129.2" cy="97.5" r="1.6" fill="#5aa444" opacity="0.6"/><circle cx="63.3" cy="80.1" r="2.3" fill="#5aa444" opacity="0.6"/><circle cx="97.6" cy="92.6" r="1.1" fill="#1e4e22" opacity="0.6"/><circle cx="128.7" cy="99.8" r="1.3" fill="#3f8c38" opacity="0.6"/><circle cx="46.9" cy="88.6" r="2.4" fill="#5aa444" opacity="0.6"/><circle cx="66.5" cy="87.6" r="1.2" fill="#3f8c38" opacity="0.6"/><circle cx="105.1" cy="87.6" r="2.3" fill="#2a6a28" opacity="0.6"/><circle cx="39.9" cy="68.7" r="1.1" fill="#1e4e22" opacity="0.6"/><circle cx="65.6" cy="96.5" r="1.2" fill="#3f8c38" opacity="0.6"/><circle cx="116.3" cy="93.8" r="1.1" fill="#5aa444" opacity="0.6"/><circle cx="115.5" cy="96.7" r="1.2" fill="#347c30" opacity="0.6"/><circle cx="110.5" cy="95.6" r="2.5" fill="#3f8c38" opacity="0.6"/><circle cx="56.7" cy="66.7" r="1.1" fill="#22582a" opacity="0.6"/><circle cx="107.6" cy="92.7" r="2.4" fill="#5aa444" opacity="0.6"/><circle cx="112.3" cy="95.0" r="2.1" fill="#22582a" opacity="0.6"/><circle cx="115.3" cy="92.2" r="1.3" fill="#3f8c38" opacity="0.6"/><circle cx="123.4" cy="99.2" r="1.1" fill="#22582a" opacity="0.6"/><circle cx="99.7" cy="90.9" r="2.0" fill="#5aa444" opacity="0.6"/><circle cx="259.3" cy="39.9" r="2.0" fill="#22582a" opacity="0.8"/><circle cx="251.0" cy="37.0" r="1.2" fill="#1e4e22" opacity="0.8"/><circle cx="251.1" cy="28.3" r="1.4" fill="#3f8c38" opacity="0.8"/><circle cx="255.3" cy="33.3" r="2.2" fill="#5aa444" opacity="0.8"/><circle cx="252.1" cy="29.5" r="2.0" fill="#5aa444" opacity="0.8"/><circle cx="249.0" cy="35.1" r="2.3" fill="#5aa444" opacity="0.8"/><circle cx="259.8" cy="43.6" r="1.6" fill="#22582a" opacity="0.8"/><circle cx="254.2" cy="22.5" r="2.2" fill="#1e4e22" opacity="0.8"/><circle cx="260.2" cy="35.0" r="1.1" fill="#22582a" opacity="0.8"/><circle cx="253.3" cy="32.7" r="1.9" fill="#2a6a28" opacity="0.8"/><circle cx="259.9" cy="21.6" r="2.1" fill="#3f8c38" opacity="0.8"/><circle cx="255.9" cy="25.8" r="1.3" fill="#3f8c38" opacity="0.8"/><circle cx="254.2" cy="44.0" r="2.0" fill="#5aa444" opacity="0.8"/><circle cx="256.2" cy="22.5" r="1.7" fill="#22582a" opacity="0.8"/><circle cx="253.9" cy="41.1" r="2.1" fill="#22582a" opacity="0.8"/><circle cx="257.1" cy="24.1" r="1.6" fill="#5aa444" opacity="0.8"/><circle cx="249.6" cy="42.4" r="1.3" fill="#2a6a28" opacity="0.8"/><circle cx="257.3" cy="24.4" r="1.9" fill="#5aa444" opacity="0.8"/><circle cx="258.9" cy="42.3" r="2.1" fill="#22582a" opacity="0.8"/><circle cx="259.8" cy="32.7" r="1.5" fill="#1e4e22" opacity="0.8"/><circle cx="258.7" cy="36.2" r="2.1" fill="#3f8c38" opacity="0.8"/><circle cx="258.6" cy="38.2" r="1.6" fill="#22582a" opacity="0.8"/><circle cx="259.0" cy="28.9" r="2.4" fill="#5aa444" opacity="0.8"/><circle cx="250.5" cy="33.5" r="1.1" fill="#22582a" opacity="0.8"/><circle cx="258.2" cy="29.6" r="2.4" fill="#1e4e22" opacity="0.8"/><circle cx="249.5" cy="29.8" r="1.4" fill="#2a6a28" opacity="0.8"/><circle cx="257.7" cy="43.8" r="2.1" fill="#347c30" opacity="0.8"/><circle cx="250.6" cy="44.4" r="1.7" fill="#5aa444" opacity="0.8"/><circle cx="259.1" cy="24.1" r="2.1" fill="#1e4e22" opacity="0.8"/><circle cx="257.6" cy="39.4" r="1.4" fill="#1e4e22" opacity="0.8"/><path d="M198 103 L261.5 91 V106 H198z" fill="#8dcb54"/>
<path d="M73 100 L136 100.5 L136 104.5 L73 105.7z" fill="#9ccc5a"/>
<path d="M128 92.6 q10-2 24 3 V101.4 H128z" fill="#3b8a3c"/>
<path d="M0 102 H261.5 V145 H0z" fill="url(#road)"/>

<rect x="135" y="98" width="9.6" height="7" rx="1.5" fill="#d8dbe0"/><rect x="136" y="99" width="7.6" height="2.5" fill="#667"/>
<rect x="151.6" y="97" width="8.8" height="8" rx="1" fill="#9aa2b0"/><rect x="152.5" y="98" width="7" height="3" fill="#3e4656"/>
<path d="M122.3 119.7 L136.3 112.7" stroke="#f6f6f6" stroke-width="1.6"/>
<path d="M198 111.9 L222.6 117.2" stroke="#f0f0f0" stroke-width="1.1"/>
<path d="M0 111.8 L82 120.6 Q70 126 59.2 131 L55.7 135.5 L0 143.3z" fill="#4d5a70"/>
<path d="M0 32 L12 38.2 L40 64.5 L48.7 75 L68 85.5 L73.3 92.5 L75.5 97 L74 104.8 L52 110 L0 102z" fill="url(#car)"/>
<path d="M0 38.2 L12 42 L40 68 L42.5 73.5 L0 57.4z" fill="#34445c"/>
<path d="M0 40 L10 43.5 L22 54 L0 48z" fill="#56667e" opacity="0.5"/>
<path d="M0 101.3 L50 106 L50 112.5 L0 112z" fill="#34363c"/>
<circle cx="61" cy="107.2" r="12.3" fill="#26282d"/>
<circle cx="61.5" cy="107.2" r="7.9" fill="#c8ccd2"/>
<circle cx="61.5" cy="107.2" r="2.6" fill="#868e96"/>
<path d="M42 71 q2-2 5 0 l1 4 -5 0z" fill="#e4e8ee"/>
<path d="M14 70 l7 3" stroke="#7a8aa0" stroke-width="1.2"/>
<path d="M8 63 q-2 20-4 38" stroke="#a8b2c0" stroke-width="0.6" fill="none"/>
<path d="M0 86 L50 94 L66 93" stroke="#c0c8d2" stroke-width="0.8" fill="none"/>
</g>
</svg>
<svg style="left:0;top:0" width="1284" height="856"><path d="M792.4 532.5V652.2" stroke="#f8d4d4" stroke-width="0.7"/><path d="M812.6 532.5V652.2" stroke="#d9dcf7" stroke-width="0.7"/><path d="M832.9 532.5V652.2" stroke="#f8d4d4" stroke-width="0.7"/><path d="M853.3 532.5V652.2" stroke="#d9dcf7" stroke-width="0.7"/><path d="M873.5 532.5V652.2" stroke="#f8d4d4" stroke-width="0.7"/><path d="M893.8 532.5V652.2" stroke="#d9dcf7" stroke-width="0.7"/><path d="M914.2 532.5V652.2" stroke="#f8d4d4" stroke-width="0.7"/><path d="M772 547.4H934.4" stroke="#f8d4d4" stroke-width="0.7"/><path d="M772 562.6H934.4" stroke="#d9dcf7" stroke-width="0.7"/><path d="M772 577.5H934.4" stroke="#f8d4d4" stroke-width="0.7"/><path d="M772 592.5H934.4" stroke="#d9dcf7" stroke-width="0.7"/><path d="M772 607.4H934.4" stroke="#f8d4d4" stroke-width="0.7"/><path d="M772 622.6H934.4" stroke="#d9dcf7" stroke-width="0.7"/><path d="M772 637.5H934.4" stroke="#f8d4d4" stroke-width="0.7"/><rect x="772" y="532.5" width="162.39999999999998" height="119.70000000000005" fill="none" stroke="#bbb" stroke-width="0.8"/><path d="M843.6 544.7 L851 550.5 L860.1 558.1 L868 562.5 L878.9 569.4 L883.4 569.4 L885 566 L886.6 556.3 L890 553.5 L896.3 551.9 L898 553 L902 553.5 L908.4 556.3 L907.5 560 L906.7 563.5 L909.9 569.4 L909.3 579.1 L893.2 572.5 L891 580 L888.7 586.8 L872 602 L855.6 618.1 L851 611 L847.5 607.4 L840 605 L832.3 603.5 L834.6 595.8 L836.8 577.8 L834.6 573.7 L837 565 L843.6 544.7" fill="none" stroke="#3c86c4" stroke-width="1.1"/><circle cx="909.7" cy="569.4" r="2.1" fill="#f01818"/></svg>
<div class="t" style="right:513px;top:532.50px;font-size:6.4px;color:#333;font-weight:normal;">N 35.67000</div>
<div class="t" style="right:513px;top:557.60px;font-size:6.4px;color:#333;font-weight:normal;">N 35.66000</div>
<div class="t" style="right:513px;top:587.50px;font-size:6.4px;color:#333;font-weight:normal;">N 35.65000</div>
<div class="t" style="right:513px;top:617.60px;font-size:6.4px;color:#333;font-weight:normal;">N 35.64000</div>
<div class="t" style="right:513px;top:643.20px;font-size:6.4px;color:#333;font-weight:normal;">N 35.63000</div>
<div class="t" style="left:689px;width:200px;text-align:center;top:652.50px;font-size:6.4px;color:#333;font-weight:normal;">E139.48000</div>
<div class="t" style="left:753px;width:200px;text-align:center;top:652.50px;font-size:6.4px;color:#333;font-weight:normal;">E139.52000</div>
<div class="t" style="left:817.4px;width:200px;text-align:center;top:652.50px;font-size:6.4px;color:#333;font-weight:normal;">E139.56000</div>
<div class="t" style="left:935.8px;top:532.30px;font-size:6.4px;color:#3de03d;font-weight:normal;">Cursor Main</div>
<div class="t" style="right:260px;top:532.30px;font-size:6.4px;color:#3de03d;font-weight:normal;">0.0 s</div>
<div style="left:935px;top:541px;width:90px;height:0.8px;background:#aaa"></div>
<svg style="left:0;top:0" width="1284" height="856"><path d="M934.9 546H1048.6" stroke="#777" stroke-width="0.75"/><path d="M934.9 555.1H1048.6" stroke="#777" stroke-width="0.75"/><path d="M934.9 564.1H1048.6" stroke="#777" stroke-width="0.75"/><path d="M934.9 572.9H1048.6" stroke="#777" stroke-width="0.75"/><path d="M934.9 582.2H1048.6" stroke="#777" stroke-width="0.75"/><path d="M934.9 591.4H1048.6" stroke="#777" stroke-width="0.75"/><path d="M934.9 600.3H1048.6" stroke="#777" stroke-width="0.75"/><path d="M934.9 609.3H1048.6" stroke="#777" stroke-width="0.75"/><path d="M934.9 618.5H1048.6" stroke="#777" stroke-width="0.75"/><path d="M934.9 546V618.5" stroke="#555" stroke-width="0.85"/><path d="M967.4 546V618.5" stroke="#555" stroke-width="0.85"/><path d="M1022.9 546V618.5" stroke="#555" stroke-width="0.85"/><path d="M1048.6 546V618.5" stroke="#555" stroke-width="0.85"/></svg>
<div class="t" style="left:936px;top:545.55px;font-size:6.5px;color:#222;font-weight:normal;">CH Name</div>
<div class="t" style="left:968.5px;top:545.55px;font-size:6.5px;color:#222;font-weight:normal;">Main cursor value</div>
<div class="t" style="left:1024px;top:545.55px;font-size:6.5px;color:#222;font-weight:normal;">CH Unit</div>
<div class="t" style="left:936px;top:554.60px;font-size:6.5px;color:#3d86cc;font-weight:normal;">Longitude</div>
<div class="t" style="right:262px;top:554.60px;font-size:6.5px;color:#3d86cc;font-weight:normal;">E139.54771</div>
<div class="t" style="left:1024px;top:554.60px;font-size:6.5px;color:#3d86cc;font-weight:normal;">deg</div>
<div class="t" style="left:936px;top:563.50px;font-size:6.5px;color:#3d86cc;font-weight:normal;">Latitude</div>
<div class="t" style="right:262px;top:563.50px;font-size:6.5px;color:#3d86cc;font-weight:normal;">N 35.65765</div>
<div class="t" style="left:1024px;top:563.50px;font-size:6.5px;color:#3d86cc;font-weight:normal;">deg</div>
<div class="t" style="left:936px;top:572.55px;font-size:6.5px;color:#f3b32e;font-weight:normal;">Altitude</div>
<div class="t" style="right:262px;top:572.55px;font-size:6.5px;color:#f3b32e;font-weight:normal;">44.20000</div>
<div class="t" style="left:1024px;top:572.55px;font-size:6.5px;color:#f3b32e;font-weight:normal;">m</div>
<div class="t" style="left:936px;top:581.80px;font-size:6.5px;color:#1eaa78;font-weight:normal;">Direction</div>
<div class="t" style="right:262px;top:581.80px;font-size:6.5px;color:#1eaa78;font-weight:normal;"></div>
<div class="t" style="left:1024px;top:581.80px;font-size:6.5px;color:#1eaa78;font-weight:normal;"></div>
<div class="t" style="left:936px;top:590.85px;font-size:6.5px;color:#d37ab8;font-weight:normal;">Velocity</div>
<div class="t" style="right:262px;top:590.85px;font-size:6.5px;color:#d37ab8;font-weight:normal;">0.41900</div>
<div class="t" style="left:1024px;top:590.85px;font-size:6.5px;color:#d37ab8;font-weight:normal;">knot</div>
<div class="t" style="left:936px;top:599.80px;font-size:6.5px;color:#5ab6f0;font-weight:normal;">Satellite</div>
<div class="t" style="right:262px;top:599.80px;font-size:6.5px;color:#5ab6f0;font-weight:normal;">6.00000</div>
<div class="t" style="left:1024px;top:599.80px;font-size:6.5px;color:#5ab6f0;font-weight:normal;"></div>
<div class="t" style="left:936px;top:608.90px;font-size:6.5px;color:#ec7a2a;font-weight:normal;">Status</div>
<div class="t" style="right:262px;top:608.90px;font-size:6.5px;color:#ec7a2a;font-weight:normal;">1.00000</div>
<div class="t" style="left:1024px;top:608.90px;font-size:6.5px;color:#ec7a2a;font-weight:normal;"></div>
<div style="left:1054.7px;top:212.5px;width:132.3px;height:12.5px;background:linear-gradient(#dfe7f1,#c7d5e4);"></div>
<div class="t" style="left:1057.7px;top:213.75px;font-size:6.4px;color:#333;font-weight:normal;">Channel</div>
<svg style="left:1160.0px;top:214.75px" width="26" height="8"><path d="M1 2.5h5l-2.5 3z" fill="#111"/><ellipse cx="12" cy="4" rx="1.8" ry="2.3" fill="#333"/><path d="M12 2.2v3.6" stroke="#bbb" stroke-width="0.6"/><path d="M18.5 1.5l5 5M23.5 1.5l-5 5" stroke="#111" stroke-width="1.1"/></svg>
<div style="left:1054.7px;top:225px;width:132.3px;height:226px;background:#fff;border-left:1px solid #d8dce4;border-right:1px solid #c8ccd4;border-bottom:1px solid #8a8a8a;box-sizing:border-box"></div>
<div style="left:1187px;top:212px;width:5px;height:516px;background:#e8e8ea"></div>
<div style="left:1187px;top:225px;width:5px;height:240px;background:#e4e4e6"></div>
<div class="t" style="left:1059px;top:228.00px;font-size:6.5px;color:#333;font-weight:normal;">CH</div>
<div class="t" style="left:1104.8px;top:228.00px;font-size:6.5px;color:#333;font-weight:normal;">Name</div>
<div style="left:1101px;top:227px;width:0.6px;height:12px;background:#e8e8e8"></div>
<div style="left:1165px;top:227px;width:0.6px;height:12px;background:#eee"></div>
<div class="t" style="left:1066.2px;top:239.30px;font-size:6.5px;color:#333;font-weight:normal;">A1</div>
<div class="t" style="left:1104.8px;top:239.30px;font-size:6.5px;color:#333;font-weight:normal;">AMA_X</div>
<div class="t" style="left:1066.2px;top:250.20px;font-size:6.5px;color:#333;font-weight:normal;">A2</div>
<div class="t" style="left:1104.8px;top:250.20px;font-size:6.5px;color:#333;font-weight:normal;">AMA_Y</div>
<div class="t" style="left:1066.2px;top:261.10px;font-size:6.5px;color:#333;font-weight:normal;">A3</div>
<div class="t" style="left:1104.8px;top:261.10px;font-size:6.5px;color:#333;font-weight:normal;">AMA_Z</div>
<div class="t" style="left:1066.2px;top:272.00px;font-size:6.5px;color:#333;font-weight:normal;">A4</div>
<div class="t" style="left:1104.8px;top:272.00px;font-size:6.5px;color:#333;font-weight:normal;"></div>
<div class="t" style="left:1066.2px;top:282.90px;font-size:6.5px;color:#333;font-weight:normal;">A5</div>
<div class="t" style="left:1104.8px;top:282.90px;font-size:6.5px;color:#333;font-weight:normal;">GSAT_X</div>
<div class="t" style="left:1066.2px;top:293.80px;font-size:6.5px;color:#333;font-weight:normal;">A6</div>
<div class="t" style="left:1104.8px;top:293.80px;font-size:6.5px;color:#333;font-weight:normal;">GSAT_Y</div>
<div class="t" style="left:1066.2px;top:304.70px;font-size:6.5px;color:#333;font-weight:normal;">A7</div>
<div class="t" style="left:1104.8px;top:304.70px;font-size:6.5px;color:#333;font-weight:normal;">GSAT_Z</div>
<div class="t" style="left:1066.2px;top:315.60px;font-size:6.5px;color:#333;font-weight:normal;">A8</div>
<div class="t" style="left:1104.8px;top:315.60px;font-size:6.5px;color:#333;font-weight:normal;"></div>
<div style="left:1065px;top:326.7px;width:8.5px;height:9.6px;background:#f0f0f0"></div>
<div class="t" style="left:1066.2px;top:326.50px;font-size:6.5px;color:#333;font-weight:normal;">G1</div>
<div class="t" style="left:1104.8px;top:326.50px;font-size:6.5px;color:#333;font-weight:normal;">Longitude</div>
<div style="left:1065px;top:337.6px;width:8.5px;height:9.6px;background:#f0f0f0"></div>
<div class="t" style="left:1066.2px;top:337.40px;font-size:6.5px;color:#333;font-weight:normal;">G2</div>
<div class="t" style="left:1104.8px;top:337.40px;font-size:6.5px;color:#333;font-weight:normal;">Latitude</div>
<div style="left:1065px;top:348.5px;width:8.5px;height:9.6px;background:#f0f0f0"></div>
<div class="t" style="left:1066.2px;top:348.30px;font-size:6.5px;color:#333;font-weight:normal;">G3</div>
<div class="t" style="left:1104.8px;top:348.30px;font-size:6.5px;color:#333;font-weight:normal;">Altitude</div>
<div style="left:1065px;top:359.40000000000003px;width:8.5px;height:9.6px;background:#f0f0f0"></div>
<div class="t" style="left:1066.2px;top:359.20px;font-size:6.5px;color:#333;font-weight:normal;">G4</div>
<div class="t" style="left:1104.8px;top:359.20px;font-size:6.5px;color:#333;font-weight:normal;">Direction</div>
<div style="left:1065px;top:370.3px;width:8.5px;height:9.6px;background:#f0f0f0"></div>
<div class="t" style="left:1066.2px;top:370.10px;font-size:6.5px;color:#333;font-weight:normal;">G5</div>
<div class="t" style="left:1104.8px;top:370.10px;font-size:6.5px;color:#333;font-weight:normal;">Velocity</div>
<div style="left:1065px;top:381.2px;width:8.5px;height:9.6px;background:#f0f0f0"></div>
<div class="t" style="left:1066.2px;top:381.00px;font-size:6.5px;color:#333;font-weight:normal;">G6</div>
<div class="t" style="left:1104.8px;top:381.00px;font-size:6.5px;color:#333;font-weight:normal;">Satellite</div>
<div style="left:1065px;top:392.09999999999997px;width:8.5px;height:9.6px;background:#f0f0f0"></div>
<div class="t" style="left:1066.2px;top:391.90px;font-size:6.5px;color:#333;font-weight:normal;">G7</div>
<div class="t" style="left:1104.8px;top:391.90px;font-size:6.5px;color:#333;font-weight:normal;">Status</div>
<div class="t" style="left:1066.2px;top:402.80px;font-size:6.5px;color:#333;font-weight:normal;">S0-14</div>
<div class="t" style="left:1104.8px;top:402.80px;font-size:6.5px;color:#333;font-weight:normal;">S1_PID_0D_Vehicl...</div>
<div style="left:1054.7px;top:451px;width:132.3px;height:16px;background:#eef1f7"></div>
<div class="t" style="left:1059px;top:453.50px;font-size:6.3px;color:#222;font-weight:normal;">ALL</div>
<svg style="left:1073.5px;top:454.5px" width="80" height="8"><rect x="0.5" y="0.5" width="6.5" height="6.5" fill="#d94848"/><path d="M1.5 3l1.5-1.5 2 3 1.5-1.5" stroke="#fff" stroke-width="0.6" fill="none"/><rect x="35.5" y="0.5" width="6.5" height="6.5" fill="#3f9a50"/><circle cx="38.75" cy="3.5" r="1.6" fill="#fff"/><rect x="59.5" y="0.5" width="6.5" height="6.5" fill="#d2b64a"/><rect x="61.3" y="2" width="2.8" height="3.5" fill="#f2e6a8"/></svg>
<div class="t" style="left:1081.5px;top:453.50px;font-size:6.3px;color:#999;font-weight:normal;">Analog</div>
<div class="t" style="left:1117.5px;top:453.50px;font-size:6.3px;color:#999;font-weight:normal;">Gps</div>
<div class="t" style="left:1141.5px;top:453.50px;font-size:6.3px;color:#999;font-weight:normal;">Signal</div>
<div style="left:1054.7px;top:467.2px;width:132.3px;height:12.2px;background:linear-gradient(#dfe7f1,#c7d5e4);"></div>
<div class="t" style="left:1057.7px;top:468.30px;font-size:6.4px;color:#333;font-weight:normal;">Property</div>
<svg style="left:1160.0px;top:469.3px" width="26" height="8"><path d="M1 2.5h5l-2.5 3z" fill="#111"/><ellipse cx="12" cy="4" rx="1.8" ry="2.3" fill="#333"/><path d="M12 2.2v3.6" stroke="#bbb" stroke-width="0.6"/><path d="M18.5 1.5l5 5M23.5 1.5l-5 5" stroke="#111" stroke-width="1.1"/></svg>
<div style="left:1054.7px;top:479.4px;width:137.3px;height:248.6px;background:#fff"></div>
<div style="left:1055px;top:479.4px;width:11px;height:152.5px;background:#eeeeee"></div>
<div style="left:1121.3px;top:479.4px;width:0.6px;height:248px;background:#f0f0f0"></div>
<div style="left:1066px;top:490.5px;width:126px;height:0.6px;background:#f2f2f2"></div>
<svg style="left:1057.5px;top:481.8px" width="7" height="7"><rect x="0.5" y="0.5" width="6" height="6" fill="#fff" stroke="#b8b8b8" stroke-width="0.6"/><path d="M2 3.5h3" stroke="#666" stroke-width="0.7"/></svg>
<div class="t" style="left:1068px;top:480.30px;font-size:6.5px;color:#333;font-weight:normal;">Linked</div>
<div style="left:1066px;top:501.4px;width:126px;height:0.6px;background:#f2f2f2"></div>
<div class="t" style="left:1078.8px;top:491.20px;font-size:6.5px;color:#444;font-weight:normal;">Group</div>
<div class="t" style="left:1123.3px;top:491.20px;font-size:6.5px;color:#333;font-weight:normal;">None</div>
<div style="left:1066px;top:512.3000000000001px;width:126px;height:0.6px;background:#f2f2f2"></div>
<svg style="left:1057.5px;top:503.6px" width="7" height="7"><rect x="0.5" y="0.5" width="6" height="6" fill="#fff" stroke="#b8b8b8" stroke-width="0.6"/><path d="M2 3.5h3" stroke="#666" stroke-width="0.7"/></svg>
<div class="t" style="left:1068px;top:502.10px;font-size:6.5px;color:#333;font-weight:normal;">XChannel</div>
<div style="left:1066px;top:523.2px;width:126px;height:0.6px;background:#f2f2f2"></div>
<div class="t" style="left:1078.8px;top:513.00px;font-size:6.5px;color:#444;font-weight:normal;">File Name</div>
<div class="t" style="left:1123.3px;top:513.00px;font-size:6.5px;color:#333;font-weight:normal;">driving_test_*</div>
<div style="left:1066px;top:534.1px;width:126px;height:0.6px;background:#f2f2f2"></div>
<div class="t" style="left:1078.8px;top:523.90px;font-size:6.5px;color:#444;font-weight:normal;">Channel Nu...</div>
<div class="t" style="left:1123.3px;top:523.90px;font-size:6.5px;color:#333;font-weight:normal;">G1</div>
<div style="left:1066px;top:545.0px;width:126px;height:0.6px;background:#f2f2f2"></div>
<div class="t" style="left:1078.8px;top:534.80px;font-size:6.5px;color:#444;font-weight:normal;">Channel Na...</div>
<div class="t" style="left:1123.3px;top:534.80px;font-size:6.5px;color:#333;font-weight:normal;">Longitude</div>
<div style="left:1066px;top:555.9000000000001px;width:126px;height:0.6px;background:#f2f2f2"></div>
<div class="t" style="left:1078.8px;top:545.70px;font-size:6.5px;color:#444;font-weight:normal;">Channel Unit</div>
<div class="t" style="left:1123.3px;top:545.70px;font-size:6.5px;color:#333;font-weight:normal;">deg</div>
<div style="left:1066px;top:566.8000000000001px;width:126px;height:0.6px;background:#f2f2f2"></div>
<div class="t" style="left:1078.8px;top:556.60px;font-size:6.5px;color:#444;font-weight:normal;">Sampling Fr...</div>
<div class="t" style="left:1123.3px;top:556.60px;font-size:6.5px;color:#333;font-weight:normal;">5 [Hz]</div>
<div style="left:1066px;top:577.7px;width:126px;height:0.6px;background:#f2f2f2"></div>
<svg style="left:1057.5px;top:569.0px" width="7" height="7"><rect x="0.5" y="0.5" width="6" height="6" fill="#fff" stroke="#b8b8b8" stroke-width="0.6"/><path d="M2 3.5h3" stroke="#666" stroke-width="0.7"/></svg>
<div class="t" style="left:1068px;top:567.50px;font-size:6.5px;color:#333;font-weight:normal;">YChannel</div>
<div style="left:1066px;top:588.6px;width:126px;height:0.6px;background:#f2f2f2"></div>
<div class="t" style="left:1078.8px;top:578.40px;font-size:6.5px;color:#444;font-weight:normal;">File Name</div>
<div class="t" style="left:1123.3px;top:578.40px;font-size:6.5px;color:#333;font-weight:normal;">driving_test_*</div>
<div style="left:1066px;top:599.5px;width:126px;height:0.6px;background:#f2f2f2"></div>
<div class="t" style="left:1078.8px;top:589.30px;font-size:6.5px;color:#444;font-weight:normal;">Channel Nu...</div>
<div class="t" style="left:1123.3px;top:589.30px;font-size:6.5px;color:#333;font-weight:normal;">G2</div>
<div style="left:1066px;top:610.4000000000001px;width:126px;height:0.6px;background:#f2f2f2"></div>
<div class="t" style="left:1078.8px;top:600.20px;font-size:6.5px;color:#444;font-weight:normal;">Channel Na...</div>
<div class="t" style="left:1123.3px;top:600.20px;font-size:6.5px;color:#333;font-weight:normal;">Latitude</div>
<div style="left:1066px;top:621.3000000000001px;width:126px;height:0.6px;background:#f2f2f2"></div>
<div class="t" style="left:1078.8px;top:611.10px;font-size:6.5px;color:#444;font-weight:normal;">Channel Unit</div>
<div class="t" style="left:1123.3px;top:611.10px;font-size:6.5px;color:#333;font-weight:normal;">deg</div>
<div style="left:1066px;top:632.2px;width:126px;height:0.6px;background:#f2f2f2"></div>
<div class="t" style="left:1078.8px;top:622.00px;font-size:6.5px;color:#444;font-weight:normal;">Sampling Fr...</div>
<div class="t" style="left:1123.3px;top:622.00px;font-size:6.5px;color:#333;font-weight:normal;">5 [Hz]</div>
<div style="left:96px;top:674.7px;width:958px;height:13.7px;background:linear-gradient(#bccdd9,#dfe6ef);border-bottom:1px solid #a8a8a8;box-sizing:border-box"></div>
<div class="t" style="left:99px;top:676.50px;font-size:6.4px;color:#333;font-weight:normal;">View Range</div>
<svg style="left:1027px;top:677.5px" width="26" height="8"><path d="M1 2.5h5l-2.5 3z" fill="#111"/><ellipse cx="12" cy="4" rx="1.8" ry="2.3" fill="#333"/><path d="M12 2.2v3.6" stroke="#bbb" stroke-width="0.6"/><path d="M18.5 1.5l5 5M23.5 1.5l-5 5" stroke="#111" stroke-width="1.1"/></svg>
<div style="left:96px;top:688.4px;width:958px;height:32.3px;background:#efefef;border-right:1px solid #d0d0d0;box-sizing:border-box"></div>
<div style="left:96px;top:720.7px;width:960px;height:7.3px;background:linear-gradient(90deg,#a9a9a9,#b3b3b3)"></div>
<div style="left:100.6px;top:697.5px;width:948.4px;height:8.4px;background:#e4e4e4"></div>
<div style="left:144.7px;top:698px;width:859.3px;height:2px;background:#6f8ff0"></div>
<div style="left:144.7px;top:700px;width:859.3px;height:2.2px;background:#f42b2b"></div>
<div style="left:144.7px;top:702.2px;width:859.3px;height:1.8px;background:#b0b0f0"></div>
<div style="left:143.5px;top:697.2px;width:3px;height:7.5px;background:#1a3ad0"></div>
<div style="left:143px;top:696.5px;width:1.2px;height:9px;background:#5ae05a"></div>
<div style="left:1001.5px;top:697.8px;width:5px;height:5.2px;background:#1a2ad8"></div>
<svg style="left:0;top:0" width="1284" height="856"><path d="M100.8 706.5V709" stroke="#555" stroke-width="0.6"/><path d="M144.5 706.5V709" stroke="#555" stroke-width="0.6"/><path d="M263.7 706.5V709" stroke="#555" stroke-width="0.6"/><path d="M382.9 706.5V709" stroke="#555" stroke-width="0.6"/><path d="M502.1 706.5V709" stroke="#555" stroke-width="0.6"/><path d="M621.3 706.5V709" stroke="#555" stroke-width="0.6"/><path d="M740.4 706.5V709" stroke="#555" stroke-width="0.6"/><path d="M859.6 706.5V709" stroke="#555" stroke-width="0.6"/><path d="M978.8 706.5V709" stroke="#555" stroke-width="0.6"/><path d="M1048.8 706.5V709" stroke="#555" stroke-width="0.6"/></svg>
<div class="t" style="left:44.5px;width:200px;text-align:center;top:709.50px;font-size:10.4px;color:#444;font-weight:normal;transform:scaleX(0.74)">0</div>
<div class="t" style="left:163.69px;width:200px;text-align:center;top:709.50px;font-size:10.4px;color:#444;font-weight:normal;transform:scaleX(0.74)">300</div>
<div class="t" style="left:282.88px;width:200px;text-align:center;top:709.50px;font-size:10.4px;color:#444;font-weight:normal;transform:scaleX(0.74)">600</div>
<div class="t" style="left:402.07px;width:200px;text-align:center;top:709.50px;font-size:10.4px;color:#444;font-weight:normal;transform:scaleX(0.74)">900</div>
<div class="t" style="left:521.26px;width:200px;text-align:center;top:709.50px;font-size:10.4px;color:#444;font-weight:normal;transform:scaleX(0.74)">1200</div>
<div class="t" style="left:640.4499999999999px;width:200px;text-align:center;top:709.50px;font-size:10.4px;color:#444;font-weight:normal;transform:scaleX(0.74)">1500</div>
<div class="t" style="left:759.64px;width:200px;text-align:center;top:709.50px;font-size:10.4px;color:#444;font-weight:normal;transform:scaleX(0.74)">1800</div>
<div class="t" style="left:878.8299999999999px;width:200px;text-align:center;top:709.50px;font-size:10.4px;color:#444;font-weight:normal;transform:scaleX(0.74)">2100</div>
<div class="t" style="left:10.799999999999997px;width:200px;text-align:center;top:709.50px;font-size:10.4px;color:#444;font-weight:normal;transform:scaleX(0.74)">-110</div>
<div class="t" style="left:939.5999999999999px;width:200px;text-align:center;top:709.50px;font-size:10.4px;color:#444;font-weight:normal;transform:scaleX(0.74)">2276</div>
</body></html>
